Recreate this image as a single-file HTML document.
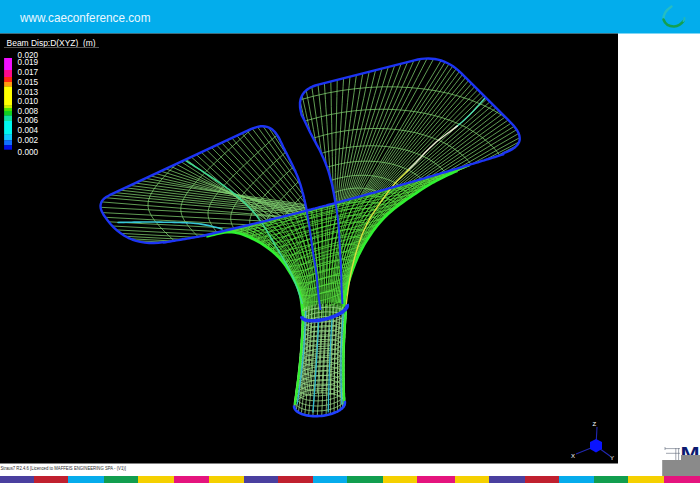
<!DOCTYPE html>
<html><head><meta charset="utf-8"><style>
html,body{margin:0;padding:0;background:#fff;}
body{width:700px;height:485px;overflow:hidden;position:relative;font-family:"Liberation Sans",sans-serif;}
svg{position:absolute;left:0;top:0;}
</style></head><body>
<svg width="700" height="485" viewBox="0 0 700 485">
<defs>
<clipPath id="cL"><path d="M279.9 139.9 L278.6 137.4 L277.2 135.1 L275.8 133.1 L274.2 131.3 L272.6 129.8 L270.8 128.6 L269.0 127.6 L267.0 126.9 L265.0 126.5 L262.9 126.3 L260.6 126.3 L258.3 126.7 L255.9 127.3 L253.4 128.1 L250.8 129.2 L109.5 195.2 L107.7 196.2 L106.0 197.1 L104.6 198.2 L103.4 199.3 L102.4 200.5 L101.6 201.7 L101.1 203.0 L100.7 204.3 L100.5 205.7 L100.6 207.1 L100.8 208.7 L101.3 210.2 L102.0 211.8 L102.9 213.5 L103.9 215.3 L104.8 216.5 L107.7 220.5 L110.7 224.2 L113.9 227.6 L117.2 230.6 L120.7 233.3 L124.4 235.7 L128.1 237.8 L132.1 239.5 L136.1 240.8 L140.3 241.9 L144.7 242.6 L149.2 243.0 L153.8 243.0 L158.6 242.7 L163.5 242.1 L163.5 242.6 L165.7 242.2 L167.8 241.9 L170.0 241.5 L172.1 241.1 L174.2 240.8 L176.4 240.4 L178.5 240.1 L180.6 239.7 L182.8 239.3 L184.9 239.0 L187.1 238.6 L189.2 238.2 L191.3 237.9 L193.5 237.5 L195.6 237.1 L197.7 236.8 L199.9 236.4 L202.0 236.0 L204.2 235.5 L206.3 235.0 L208.4 234.5 L210.6 234.0 L212.7 233.5 L214.8 233.0 L217.0 232.5 L219.1 232.0 L221.3 231.5 L223.4 231.0 L225.5 230.5 L227.7 230.0 L229.8 229.5 L231.9 229.0 L234.1 228.5 L236.2 228.0 L238.4 227.5 L240.5 227.0 L242.6 226.5 L244.8 226.0 L246.9 225.5 L249.0 225.0 L251.2 224.4 L253.3 223.9 L255.5 223.4 L257.6 222.9 L259.7 222.4 L261.9 221.8 L264.0 221.3 L266.1 220.8 L268.3 220.3 L270.4 219.7 L272.6 219.2 L274.7 218.7 L276.8 218.1 L279.0 217.6 L281.1 217.1 L283.2 216.5 L285.4 216.0 L287.5 215.5 L289.7 214.9 L291.8 214.4 L293.9 213.8 L296.1 213.3 L298.2 212.8 L300.3 212.2 L302.5 211.7 L304.6 211.1 L305.5 210.9 L306.3 208.6 L305.8 206.2 L305.3 203.8 L304.8 201.4 L304.2 199.0 L303.7 196.6 L303.1 194.2 L302.4 191.8 L301.8 189.4 L301.1 187.1 L300.4 184.7 L299.6 182.4 L298.8 180.0 L298.0 177.7 L297.1 175.4 L296.1 173.2 L295.2 170.9 L294.1 168.7 L293.1 166.5 L292.0 164.3 L290.9 162.1 L289.8 159.9 L288.7 157.7 L287.6 155.5 L286.5 153.3 L285.3 151.1 L284.2 148.9 L283.1 146.7 L282.1 144.4 L281.0 142.2 L279.9 140.0 Z"/></clipPath>
<clipPath id="cR"><path d="M335.5 203.0 L336.7 202.7 L338.8 202.2 L341.0 201.6 L343.1 201.0 L345.2 200.4 L347.4 199.9 L349.5 199.3 L351.6 198.7 L353.8 198.1 L355.9 197.5 L358.1 197.0 L360.2 196.4 L362.3 195.8 L364.5 195.2 L366.6 194.6 L368.7 194.0 L370.9 193.4 L373.0 192.9 L375.2 192.3 L377.3 191.7 L379.4 191.1 L381.6 190.5 L383.7 189.9 L385.8 189.3 L388.0 188.7 L390.1 188.1 L392.3 187.5 L394.4 186.9 L396.5 186.3 L398.7 185.7 L400.8 185.0 L402.9 184.4 L405.1 183.8 L407.2 183.2 L409.4 182.6 L411.5 182.0 L413.6 181.4 L415.8 180.8 L417.9 180.1 L420.0 179.5 L422.2 178.9 L424.3 178.3 L426.5 177.6 L428.6 177.0 L430.7 176.4 L432.9 175.8 L435.0 175.1 L437.1 174.5 L439.3 173.9 L441.4 173.2 L443.6 172.6 L445.7 172.0 L447.8 171.3 L450.0 170.7 L452.1 170.0 L454.2 169.4 L456.4 168.8 L458.5 168.1 L460.7 167.5 L462.8 166.8 L464.9 166.2 L467.1 165.5 L469.2 164.9 L471.3 164.2 L473.5 163.6 L475.6 162.9 L477.8 162.3 L479.9 161.6 L482.0 160.9 L484.2 160.3 L486.3 159.6 L488.4 159.0 L490.6 158.3 L492.7 157.6 L494.9 157.0 L497.0 156.3 L499.1 155.6 L501.3 154.9 L503.4 154.3 L503.4 153.1 L507.0 151.8 L510.1 150.4 L512.8 148.9 L515.1 147.2 L516.9 145.5 L518.2 143.7 L519.2 141.8 L519.7 139.7 L519.7 137.6 L519.3 135.3 L518.5 133.0 L517.2 130.5 L515.4 128.0 L513.3 125.3 L510.7 122.5 L461.2 73.2 L458.5 70.7 L455.8 68.4 L453.0 66.3 L450.1 64.5 L447.2 63.0 L444.2 61.6 L441.1 60.5 L438.0 59.7 L434.8 59.0 L431.5 58.7 L428.2 58.5 L424.8 58.6 L421.4 58.9 L417.8 59.5 L414.3 60.3 L318.3 84.6 L315.3 85.5 L312.6 86.5 L310.1 87.7 L308.0 89.0 L306.0 90.5 L304.4 92.1 L303.0 93.9 L301.9 95.8 L301.0 97.9 L300.4 100.1 L300.0 102.5 L300.0 105.1 L300.1 107.8 L300.6 110.6 L301.3 113.7 L301.6 114.9 L302.9 117.4 L304.2 119.9 L305.4 122.4 L306.6 124.9 L307.8 127.4 L309.0 130.0 L310.2 132.5 L311.5 135.0 L312.8 137.5 L314.1 140.0 L315.5 142.4 L316.8 144.9 L318.2 147.4 L319.5 149.8 L320.7 152.3 L321.9 154.9 L323.1 157.4 L324.2 160.0 L325.3 162.6 L326.3 165.2 L327.3 167.9 L328.2 170.5 L329.0 173.2 L329.8 175.9 L330.5 178.6 L331.2 181.3 L331.9 184.0 L332.5 186.8 L333.0 189.5 L333.6 192.3 L334.1 195.0 L334.6 197.8 L335.1 200.6 Z"/></clipPath>
<clipPath id="cF"><path d="M217.0 232.5 L219.1 232.0 L221.3 231.5 L223.4 231.0 L225.5 230.5 L227.7 230.0 L229.8 229.5 L231.9 229.0 L234.1 228.5 L236.2 228.0 L238.4 227.5 L240.5 227.0 L242.6 226.5 L244.8 226.0 L246.9 225.5 L249.0 225.0 L251.2 224.4 L253.3 223.9 L255.5 223.4 L257.6 222.9 L259.7 222.4 L261.9 221.8 L264.0 221.3 L266.1 220.8 L268.3 220.3 L270.4 219.7 L272.6 219.2 L274.7 218.7 L276.8 218.1 L279.0 217.6 L281.1 217.1 L283.2 216.5 L285.4 216.0 L287.5 215.5 L289.7 214.9 L291.8 214.4 L293.9 213.8 L296.1 213.3 L298.2 212.8 L300.3 212.2 L302.5 211.7 L304.6 211.1 L306.8 210.6 L308.9 210.0 L311.0 209.5 L313.2 208.9 L315.3 208.4 L317.4 207.8 L319.6 207.2 L321.7 206.7 L323.9 206.1 L326.0 205.6 L328.1 205.0 L330.3 204.4 L332.4 203.9 L334.5 203.3 L336.7 202.7 L338.8 202.2 L341.0 201.6 L343.1 201.0 L345.2 200.4 L347.4 199.9 L349.5 199.3 L351.6 198.7 L353.8 198.1 L355.9 197.5 L358.1 197.0 L360.2 196.4 L362.3 195.8 L364.5 195.2 L366.6 194.6 L368.7 194.0 L370.9 193.4 L373.0 192.9 L375.2 192.3 L377.3 191.7 L379.4 191.1 L381.6 190.5 L383.7 189.9 L385.8 189.3 L388.0 188.7 L390.1 188.1 L392.3 187.5 L394.4 186.9 L396.5 186.3 L398.7 185.7 L400.8 185.0 L402.9 184.4 L405.1 183.8 L407.2 183.2 L409.4 182.6 L411.5 182.0 L413.6 181.4 L415.8 180.8 L417.9 180.1 L420.0 179.5 L422.2 178.9 L424.3 178.3 L426.5 177.6 L428.6 177.0 L430.7 176.4 L432.9 175.8 L435.0 175.1 L437.1 174.5 L439.3 173.9 L441.4 173.2 L443.6 172.6 L445.7 172.0 L447.8 171.3 L450.0 170.7 L452.1 170.0 L454.2 169.4 L456.4 168.8 L458.5 168.1 L460.7 167.5 L462.8 166.8 L464.9 166.2 L467.1 165.5 L469.2 164.9 L471.3 164.2 L473.5 163.6 L475.6 162.9 L477.8 162.3 L479.9 161.6 L473.0 165.6 L469.9 166.9 L466.7 168.2 L463.6 169.5 L460.5 170.8 L457.3 172.1 L454.2 173.5 L451.2 174.9 L448.1 176.3 L445.1 177.8 L442.1 179.3 L439.1 180.9 L436.1 182.5 L433.2 184.2 L430.3 185.9 L427.4 187.7 L424.6 189.5 L421.7 191.4 L418.9 193.3 L416.1 195.2 L413.3 197.1 L410.5 199.0 L407.7 200.9 L405.0 202.9 L402.2 204.9 L399.5 207.0 L396.9 209.1 L394.3 211.2 L391.7 213.4 L389.3 215.7 L386.9 218.1 L384.6 220.6 L382.4 223.1 L380.2 225.7 L378.1 228.4 L376.1 231.1 L374.1 233.9 L372.2 236.7 L370.4 239.5 L368.6 242.4 L366.8 245.3 L365.2 248.3 L363.6 251.3 L362.1 254.3 L360.7 257.3 L359.4 260.5 L358.1 263.6 L356.9 266.8 L355.7 269.9 L354.6 273.1 L353.5 276.3 L352.5 279.6 L351.5 282.8 L350.6 286.1 L349.7 289.3 L349.0 292.6 L348.3 295.9 L347.8 299.3 L347.4 302.6 L347.0 306.0 L349.6 303.8 L349.7 304.9 L349.6 306.0 L349.1 307.2 L348.4 308.4 L347.4 309.7 L346.1 311.0 L344.5 312.3 L342.7 313.5 L340.7 314.7 L338.6 315.9 L336.2 317.0 L333.7 318.0 L331.1 318.9 L328.4 319.8 L325.7 320.5 L323.0 321.1 L320.3 321.6 L317.6 322.0 L315.0 322.2 L312.5 322.3 L310.2 322.2 L308.0 322.0 L306.1 321.7 L304.3 321.2 L302.8 320.7 L301.5 320.0 L300.5 319.1 L299.8 318.2 L299.4 317.2 L299.8 315.0 L299.5 312.4 L299.2 309.8 L298.9 307.2 L298.6 304.6 L298.3 302.0 L297.9 299.4 L297.5 296.8 L297.0 294.3 L296.3 291.8 L295.5 289.3 L294.5 286.9 L293.4 284.5 L292.2 282.2 L291.0 279.8 L289.7 277.5 L288.5 275.2 L287.2 273.0 L285.8 270.7 L284.4 268.5 L283.0 266.3 L281.5 264.2 L279.9 262.2 L278.2 260.2 L276.5 258.2 L274.6 256.3 L272.8 254.5 L270.8 252.7 L268.8 251.1 L266.8 249.4 L264.7 247.9 L262.6 246.4 L260.4 244.9 L258.2 243.5 L256.0 242.2 L253.7 240.9 L251.3 239.7 L249.0 238.5 L246.6 237.3 L244.1 236.2 L241.6 235.2 L239.1 234.3 L236.6 233.5 L234.1 232.9 L231.5 232.4 L228.9 232.1 L226.4 232.0 L223.8 232.1 L221.2 232.4 L218.7 232.9 L216.1 233.4 L213.5 234.1 L211.0 234.7 L208.4 235.3 L205.8 235.9 L203.3 236.4 L200.7 236.8 L198.1 237.3 L195.6 237.7 L193.0 238.1 Z"/></clipPath>
</defs>
<rect x="0" y="0" width="700" height="485" fill="#ffffff"/>
<rect x="0" y="0" width="700" height="33.5" fill="#03adec"/>
<text x="20" y="22" font-family="Liberation Sans" font-size="13.5" fill="#eaf8ff" transform="translate(20,0) scale(0.87,1) translate(-20,0)">www.caeconference.com</text>
<g fill="none" stroke-linecap="round">
<path d="M671.5 6.5 Q663 12 663.5 19.5" stroke="#30c0b8" stroke-width="2.4" stroke-opacity="0.8"/>
<path d="M663.5 19.5 Q666 26.5 674 26.5 Q680 26 683.5 21" stroke="#14a050" stroke-width="2.5"/>
<path d="M683.5 21 Q685 19 684.5 18" stroke="#20b8b8" stroke-width="2"/>
</g>
<rect x="0" y="33.5" width="618" height="430" fill="#000"/>
<text x="6.6" y="45.6" font-size="8.45" fill="#fff" font-family="Liberation Sans">Beam Disp:D(XYZ)&#160; (m)</text>
<rect x="4" y="47" width="95" height="1" fill="#555"/>
<rect x="4.1" y="58" width="7.9" height="12.2" fill="#f010ff"/><rect x="4.1" y="70" width="7.9" height="7.2" fill="#ff0a8c"/><rect x="4.1" y="77" width="7.9" height="5.2" fill="#ff2a10"/><rect x="4.1" y="82" width="7.9" height="4.7" fill="#ff9a10"/><rect x="4.1" y="86.5" width="7.9" height="19.3" fill="#ffff00"/><rect x="4.1" y="105.6" width="7.9" height="2.6" fill="#c8f000"/><rect x="4.1" y="108" width="7.9" height="3.2" fill="#50e000"/><rect x="4.1" y="111" width="7.9" height="4.7" fill="#10d020"/><rect x="4.1" y="115.5" width="7.9" height="5.7" fill="#10e0a0"/><rect x="4.1" y="121" width="7.9" height="13.8" fill="#00f8f0"/><rect x="4.1" y="134.6" width="7.9" height="5.8" fill="#10c8ff"/><rect x="4.1" y="140.2" width="7.9" height="5.2" fill="#1070ff"/><rect x="4.1" y="145.2" width="7.9" height="4.5" fill="#0010e8"/>
<g font-size="8.2" fill="#fff" font-family="Liberation Sans"><text x="17.6" y="58.0">0.020</text><text x="17.6" y="65.4">0.019</text><text x="17.6" y="75.3">0.017</text><text x="17.6" y="85.0">0.015</text><text x="17.6" y="94.5">0.013</text><text x="17.6" y="103.8">0.010</text><text x="17.6" y="113.6">0.008</text><text x="17.6" y="123.3">0.006</text><text x="17.6" y="132.8">0.004</text><text x="17.6" y="142.5">0.002</text><text x="17.6" y="154.9">0.000</text></g>
<g fill="none" stroke="#80d070" stroke-width="0.75">
<path clip-path="url(#cL)" d="M163.5 242.1 L543.2 368.1 M158.0 242.8 L542.7 352.4 M152.4 243.0 L541.4 336.1 M146.8 242.8 L546.3 263.7 M141.3 242.0 L540.7 263.0 M135.8 240.7 L535.3 261.7 M130.6 238.8 L530.0 259.7 M125.5 236.3 L525.0 257.3 M120.8 233.4 L520.2 254.3 M116.4 229.9 L515.9 250.8 M112.4 226.0 L511.8 246.9 M108.7 221.8 L508.2 242.7 M105.3 217.3 L504.8 238.2 M102.4 212.6 L501.8 233.5 M100.6 207.3 L500.1 228.2 M101.6 201.9 L500.3 233.8 M105.3 197.7 L503.8 232.0 M110.1 194.9 L508.4 232.2 M115.2 192.6 L513.1 233.0 M120.3 190.2 L517.9 233.7 M125.3 187.8 L522.6 234.5 M130.4 185.5 L527.3 235.2 M135.5 183.1 L532.0 236.0 M140.6 180.7 L536.4 238.1 M145.6 178.3 L539.0 251.1 M150.7 176.0 L540.9 264.0 M155.8 173.6 L542.3 276.7 M160.8 171.2 L543.0 289.3 M165.9 168.9 L542.3 304.3 M171.0 166.5 L536.1 329.9 M176.1 164.1 L527.8 354.5 M181.1 161.7 L517.6 378.1 M186.2 159.4 L505.4 400.5 M191.3 157.0 L491.4 421.5 M196.4 154.6 L490.3 425.9 M201.4 152.3 L491.5 427.7 M206.5 149.9 L492.7 429.4 M211.6 147.5 L493.8 431.0 M216.7 145.2 L494.8 432.6 M221.7 142.8 L495.8 434.2 M226.8 140.4 L496.7 435.6 M231.9 138.0 L497.5 437.1 M236.9 135.7 L498.4 438.4 M242.0 133.3 L499.1 439.7 M247.1 130.9 L497.5 442.8 M252.2 128.6 L495.9 445.8 M257.5 126.9 L494.0 449.5 M263.1 126.3 L491.9 454.4 M268.5 127.4 L489.7 460.7 M273.2 130.4 L487.7 468.0 M276.9 134.6 L488.9 473.8 M279.7 139.5 L491.6 478.7 M282.1 144.5 L478.5 493.0 M284.6 149.5 L476.8 500.3 M287.1 154.5 L475.3 507.5 M289.6 159.5 L473.7 514.6 M292.1 164.5 L472.1 521.8 M294.5 169.6 L470.2 528.9 M296.8 174.7 L468.2 536.1 M298.8 179.9 L465.8 543.4 M300.6 185.3 L463.0 550.8 M302.1 190.6 L460.0 558.1 M303.5 196.1 L456.8 565.5 M304.8 201.5 L453.3 572.9 M305.9 207.0 L449.7 580.2 M297.3 55.0 L293.8 58.1 L290.3 61.1 L286.9 64.2 L283.4 67.2 L279.9 70.3 L276.4 73.4 L273.0 76.4 L269.5 79.5 L266.0 82.6 L262.6 85.6 L259.1 88.7 L255.6 91.7 L252.2 94.8 L248.7 97.9 L245.3 100.9 L241.8 104.0 L238.4 107.0 L235.0 110.1 L231.5 113.2 L228.1 116.2 L224.7 119.3 L221.3 122.3 L217.9 125.4 L214.5 128.5 L211.1 131.5 L207.7 134.6 L204.4 137.7 L201.0 140.7 L197.7 143.8 L194.4 146.8 L191.1 149.9 L187.9 153.0 L184.6 156.0 L181.4 159.1 L178.3 162.1 L175.1 165.2 L172.1 168.3 L169.1 171.3 L166.2 174.4 L163.4 177.4 L160.7 180.5 L158.1 183.6 L155.7 186.6 L153.6 189.7 L151.7 192.8 L150.1 195.8 L149.0 198.9 L148.2 201.9 L148.0 205.0 L148.2 207.4 L148.7 209.8 L149.6 212.2 L150.8 214.7 L152.2 217.1 L153.9 219.5 L155.7 221.9 L157.8 224.3 L159.9 226.7 L162.2 229.1 L164.6 231.6 L167.0 234.0 L169.5 236.4 L172.1 238.8 L174.7 241.2 L177.4 243.6 L180.1 246.0 L182.8 248.4 L185.5 250.9 L188.3 253.3 L191.1 255.7 L193.9 258.1 L196.8 260.5 L199.6 262.9 L202.5 265.3 L205.3 267.8 L208.2 270.2 L211.1 272.6 L214.0 275.0 M330.1 59.4 L326.6 62.5 L323.1 65.5 L319.7 68.6 L316.2 71.6 L312.7 74.7 L309.2 77.8 L305.8 80.8 L302.3 83.9 L298.8 87.0 L295.4 90.0 L291.9 93.1 L288.4 96.1 L285.0 99.2 L281.5 102.3 L278.1 105.3 L274.6 108.4 L271.2 111.4 L267.8 114.5 L264.3 117.6 L260.9 120.6 L257.5 123.7 L254.1 126.7 L250.7 129.8 L247.3 132.9 L243.9 135.9 L240.5 139.0 L237.2 142.1 L233.8 145.1 L230.5 148.2 L227.2 151.2 L223.9 154.3 L220.7 157.4 L217.4 160.4 L214.2 163.5 L211.1 166.5 L207.9 169.6 L204.9 172.7 L201.9 175.7 L199.0 178.8 L196.2 181.8 L193.5 184.9 L190.9 188.0 L188.5 191.0 L186.4 194.1 L184.5 197.2 L182.9 200.2 L181.8 203.3 L181.0 206.3 L180.8 209.4 L181.0 211.8 L181.5 214.2 L182.4 216.6 L183.6 219.1 L185.0 221.5 L186.7 223.9 L188.5 226.3 L190.6 228.7 L192.7 231.1 L195.0 233.5 L197.4 236.0 L199.8 238.4 L202.3 240.8 L204.9 243.2 L207.5 245.6 L210.2 248.0 L212.9 250.4 L215.6 252.8 L218.3 255.3 L221.1 257.7 L223.9 260.1 L226.7 262.5 L229.6 264.9 L232.4 267.3 L235.3 269.7 L238.1 272.2 L241.0 274.6 L243.9 277.0 L246.8 279.4 M357.3 63.8 L353.8 66.9 L350.3 69.9 L346.9 73.0 L343.4 76.0 L339.9 79.1 L336.4 82.2 L333.0 85.2 L329.5 88.3 L326.0 91.4 L322.6 94.4 L319.1 97.5 L315.6 100.5 L312.2 103.6 L308.7 106.7 L305.3 109.7 L301.8 112.8 L298.4 115.8 L295.0 118.9 L291.5 122.0 L288.1 125.0 L284.7 128.1 L281.3 131.1 L277.9 134.2 L274.5 137.3 L271.1 140.3 L267.7 143.4 L264.4 146.5 L261.0 149.5 L257.7 152.6 L254.4 155.6 L251.1 158.7 L247.9 161.8 L244.6 164.8 L241.4 167.9 L238.3 170.9 L235.1 174.0 L232.1 177.1 L229.1 180.1 L226.2 183.2 L223.4 186.2 L220.7 189.3 L218.1 192.4 L215.7 195.4 L213.6 198.5 L211.7 201.6 L210.1 204.6 L209.0 207.7 L208.2 210.7 L208.0 213.8 L208.2 216.2 L208.7 218.6 L209.6 221.0 L210.8 223.5 L212.2 225.9 L213.9 228.3 L215.7 230.7 L217.8 233.1 L219.9 235.5 L222.2 237.9 L224.6 240.4 L227.0 242.8 L229.5 245.2 L232.1 247.6 L234.7 250.0 L237.4 252.4 L240.1 254.8 L242.8 257.2 L245.5 259.7 L248.3 262.1 L251.1 264.5 L253.9 266.9 L256.8 269.3 L259.6 271.7 L262.5 274.1 L265.3 276.6 L268.2 279.0 L271.1 281.4 L274.0 283.8 M380.0 68.2 L376.5 71.3 L373.0 74.3 L369.6 77.4 L366.1 80.4 L362.6 83.5 L359.1 86.6 L355.7 89.6 L352.2 92.7 L348.7 95.8 L345.3 98.8 L341.8 101.9 L338.3 104.9 L334.9 108.0 L331.4 111.1 L328.0 114.1 L324.5 117.2 L321.1 120.2 L317.7 123.3 L314.2 126.4 L310.8 129.4 L307.4 132.5 L304.0 135.5 L300.6 138.6 L297.2 141.7 L293.8 144.7 L290.4 147.8 L287.1 150.9 L283.7 153.9 L280.4 157.0 L277.1 160.0 L273.8 163.1 L270.6 166.2 L267.3 169.2 L264.1 172.3 L261.0 175.3 L257.8 178.4 L254.8 181.5 L251.8 184.5 L248.9 187.6 L246.1 190.6 L243.4 193.7 L240.8 196.8 L238.4 199.8 L236.3 202.9 L234.4 206.0 L232.8 209.0 L231.7 212.1 L230.9 215.1 L230.7 218.2 L230.9 220.6 L231.4 223.0 L232.3 225.4 L233.5 227.9 L234.9 230.3 L236.6 232.7 L238.4 235.1 L240.5 237.5 L242.6 239.9 L244.9 242.3 L247.3 244.8 L249.7 247.2 L252.2 249.6 L254.8 252.0 L257.4 254.4 L260.1 256.8 L262.8 259.2 L265.5 261.6 L268.2 264.1 L271.0 266.5 L273.8 268.9 L276.6 271.3 L279.5 273.7 L282.3 276.1 L285.2 278.5 L288.0 281.0 L290.9 283.4 L293.8 285.8 L296.7 288.2 M399.0 72.6 L395.5 75.7 L392.0 78.7 L388.6 81.8 L385.1 84.8 L381.6 87.9 L378.1 91.0 L374.7 94.0 L371.2 97.1 L367.7 100.2 L364.3 103.2 L360.8 106.3 L357.3 109.3 L353.9 112.4 L350.4 115.5 L347.0 118.5 L343.5 121.6 L340.1 124.6 L336.7 127.7 L333.2 130.8 L329.8 133.8 L326.4 136.9 L323.0 139.9 L319.6 143.0 L316.2 146.1 L312.8 149.1 L309.4 152.2 L306.1 155.3 L302.7 158.3 L299.4 161.4 L296.1 164.4 L292.8 167.5 L289.6 170.6 L286.3 173.6 L283.1 176.7 L280.0 179.7 L276.8 182.8 L273.8 185.9 L270.8 188.9 L267.9 192.0 L265.1 195.0 L262.4 198.1 L259.8 201.2 L257.4 204.2 L255.3 207.3 L253.4 210.4 L251.8 213.4 L250.7 216.5 L249.9 219.5 L249.7 222.6 L249.9 225.0 L250.4 227.4 L251.3 229.8 L252.5 232.3 L253.9 234.7 L255.6 237.1 L257.4 239.5 L259.5 241.9 L261.6 244.3 L263.9 246.7 L266.3 249.2 L268.7 251.6 L271.2 254.0 L273.8 256.4 L276.4 258.8 L279.1 261.2 L281.8 263.6 L284.5 266.0 L287.2 268.5 L290.0 270.9 L292.8 273.3 L295.6 275.7 L298.5 278.1 L301.3 280.5 L304.2 282.9 L307.0 285.4 L309.9 287.8 L312.8 290.2 L315.7 292.6 M415.0 77.0 L411.5 80.1 L408.0 83.1 L404.6 86.2 L401.1 89.2 L397.6 92.3 L394.1 95.4 L390.7 98.4 L387.2 101.5 L383.7 104.6 L380.3 107.6 L376.8 110.7 L373.3 113.7 L369.9 116.8 L366.4 119.9 L363.0 122.9 L359.5 126.0 L356.1 129.0 L352.7 132.1 L349.2 135.2 L345.8 138.2 L342.4 141.3 L339.0 144.3 L335.6 147.4 L332.2 150.5 L328.8 153.5 L325.4 156.6 L322.1 159.7 L318.7 162.7 L315.4 165.8 L312.1 168.8 L308.8 171.9 L305.6 175.0 L302.3 178.0 L299.1 181.1 L296.0 184.1 L292.8 187.2 L289.8 190.3 L286.8 193.3 L283.9 196.4 L281.1 199.4 L278.4 202.5 L275.8 205.6 L273.4 208.6 L271.3 211.7 L269.4 214.8 L267.8 217.8 L266.7 220.9 L265.9 223.9 L265.7 227.0 L265.9 229.4 L266.4 231.8 L267.3 234.2 L268.5 236.7 L269.9 239.1 L271.6 241.5 L273.4 243.9 L275.5 246.3 L277.6 248.7 L279.9 251.1 L282.3 253.6 L284.7 256.0 L287.2 258.4 L289.8 260.8 L292.4 263.2 L295.1 265.6 L297.8 268.0 L300.5 270.4 L303.2 272.9 L306.0 275.3 L308.8 277.7 L311.6 280.1 L314.5 282.5 L317.3 284.9 L320.2 287.3 L323.0 289.8 L325.9 292.2 L328.8 294.6 L331.7 297.0 M428.3 81.4 L424.8 84.5 L421.3 87.5 L417.9 90.6 L414.4 93.6 L410.9 96.7 L407.4 99.8 L404.0 102.8 L400.5 105.9 L397.0 109.0 L393.6 112.0 L390.1 115.1 L386.6 118.1 L383.2 121.2 L379.7 124.3 L376.3 127.3 L372.8 130.4 L369.4 133.4 L366.0 136.5 L362.5 139.6 L359.1 142.6 L355.7 145.7 L352.3 148.7 L348.9 151.8 L345.5 154.9 L342.1 157.9 L338.7 161.0 L335.4 164.1 L332.0 167.1 L328.7 170.2 L325.4 173.2 L322.1 176.3 L318.9 179.4 L315.6 182.4 L312.4 185.5 L309.3 188.5 L306.1 191.6 L303.1 194.7 L300.1 197.7 L297.2 200.8 L294.4 203.8 L291.7 206.9 L289.1 210.0 L286.7 213.0 L284.6 216.1 L282.7 219.2 L281.1 222.2 L280.0 225.3 L279.2 228.3 L279.0 231.4 L279.2 233.8 L279.7 236.2 L280.6 238.6 L281.8 241.1 L283.2 243.5 L284.9 245.9 L286.7 248.3 L288.8 250.7 L290.9 253.1 L293.2 255.5 L295.6 258.0 L298.0 260.4 L300.5 262.8 L303.1 265.2 L305.7 267.6 L308.4 270.0 L311.1 272.4 L313.8 274.8 L316.5 277.3 L319.3 279.7 L322.1 282.1 L324.9 284.5 L327.8 286.9 L330.6 289.3 L333.5 291.7 L336.3 294.2 L339.2 296.6 L342.1 299.0 L345.0 301.4 M439.3 85.8 L435.8 88.9 L432.3 91.9 L428.9 95.0 L425.4 98.0 L421.9 101.1 L418.4 104.2 L415.0 107.2 L411.5 110.3 L408.0 113.4 L404.6 116.4 L401.1 119.5 L397.6 122.5 L394.2 125.6 L390.7 128.7 L387.3 131.7 L383.8 134.8 L380.4 137.8 L377.0 140.9 L373.5 144.0 L370.1 147.0 L366.7 150.1 L363.3 153.1 L359.9 156.2 L356.5 159.3 L353.1 162.3 L349.7 165.4 L346.4 168.5 L343.0 171.5 L339.7 174.6 L336.4 177.6 L333.1 180.7 L329.9 183.8 L326.6 186.8 L323.4 189.9 L320.3 192.9 L317.1 196.0 L314.1 199.1 L311.1 202.1 L308.2 205.2 L305.4 208.2 L302.7 211.3 L300.1 214.4 L297.7 217.4 L295.6 220.5 L293.7 223.6 L292.1 226.6 L291.0 229.7 L290.2 232.7 L290.0 235.8 L290.2 238.2 L290.7 240.6 L291.6 243.0 L292.8 245.5 L294.2 247.9 L295.9 250.3 L297.7 252.7 L299.8 255.1 L301.9 257.5 L304.2 259.9 L306.6 262.4 L309.0 264.8 L311.5 267.2 L314.1 269.6 L316.7 272.0 L319.4 274.4 L322.1 276.8 L324.8 279.2 L327.5 281.7 L330.3 284.1 L333.1 286.5 L335.9 288.9 L338.8 291.3 L341.6 293.7 L344.5 296.1 L347.3 298.6 L350.2 301.0 L353.1 303.4 L356.0 305.8 M448.3 90.2 L444.8 93.3 L441.3 96.3 L437.9 99.4 L434.4 102.4 L430.9 105.5 L427.4 108.6 L424.0 111.6 L420.5 114.7 L417.0 117.8 L413.6 120.8 L410.1 123.9 L406.6 126.9 L403.2 130.0 L399.7 133.1 L396.3 136.1 L392.8 139.2 L389.4 142.2 L386.0 145.3 L382.5 148.4 L379.1 151.4 L375.7 154.5 L372.3 157.5 L368.9 160.6 L365.5 163.7 L362.1 166.7 L358.7 169.8 L355.4 172.9 L352.0 175.9 L348.7 179.0 L345.4 182.0 L342.1 185.1 L338.9 188.2 L335.6 191.2 L332.4 194.3 L329.3 197.3 L326.1 200.4 L323.1 203.5 L320.1 206.5 L317.2 209.6 L314.4 212.6 L311.7 215.7 L309.1 218.8 L306.7 221.8 L304.6 224.9 L302.7 228.0 L301.1 231.0 L300.0 234.1 L299.2 237.1 L299.0 240.2 L299.2 242.6 L299.7 245.0 L300.6 247.4 L301.8 249.9 L303.2 252.3 L304.9 254.7 L306.7 257.1 L308.8 259.5 L310.9 261.9 L313.2 264.3 L315.6 266.8 L318.0 269.2 L320.5 271.6 L323.1 274.0 L325.7 276.4 L328.4 278.8 L331.1 281.2 L333.8 283.6 L336.5 286.1 L339.3 288.5 L342.1 290.9 L344.9 293.3 L347.8 295.7 L350.6 298.1 L353.5 300.5 L356.3 303.0 L359.2 305.4 L362.1 307.8 L365.0 310.2 M456.3 94.6 L452.8 97.7 L449.3 100.7 L445.9 103.8 L442.4 106.8 L438.9 109.9 L435.4 113.0 L432.0 116.0 L428.5 119.1 L425.0 122.2 L421.6 125.2 L418.1 128.3 L414.6 131.3 L411.2 134.4 L407.7 137.5 L404.3 140.5 L400.8 143.6 L397.4 146.6 L394.0 149.7 L390.5 152.8 L387.1 155.8 L383.7 158.9 L380.3 161.9 L376.9 165.0 L373.5 168.1 L370.1 171.1 L366.7 174.2 L363.4 177.3 L360.0 180.3 L356.7 183.4 L353.4 186.4 L350.1 189.5 L346.9 192.6 L343.6 195.6 L340.4 198.7 L337.3 201.7 L334.1 204.8 L331.1 207.9 L328.1 210.9 L325.2 214.0 L322.4 217.0 L319.7 220.1 L317.1 223.2 L314.7 226.2 L312.6 229.3 L310.7 232.4 L309.1 235.4 L308.0 238.5 L307.2 241.5 L307.0 244.6 L307.2 247.0 L307.7 249.4 L308.6 251.8 L309.8 254.3 L311.2 256.7 L312.9 259.1 L314.7 261.5 L316.8 263.9 L318.9 266.3 L321.2 268.7 L323.6 271.2 L326.0 273.6 L328.5 276.0 L331.1 278.4 L333.7 280.8 L336.4 283.2 L339.1 285.6 L341.8 288.0 L344.5 290.5 L347.3 292.9 L350.1 295.3 L352.9 297.7 L355.8 300.1 L358.6 302.5 L361.5 304.9 L364.3 307.4 L367.2 309.8 L370.1 312.2 L373.0 314.6 M463.3 99.0 L459.8 102.1 L456.3 105.1 L452.9 108.2 L449.4 111.2 L445.9 114.3 L442.4 117.4 L439.0 120.4 L435.5 123.5 L432.0 126.6 L428.6 129.6 L425.1 132.7 L421.6 135.7 L418.2 138.8 L414.7 141.9 L411.3 144.9 L407.8 148.0 L404.4 151.0 L401.0 154.1 L397.5 157.2 L394.1 160.2 L390.7 163.3 L387.3 166.3 L383.9 169.4 L380.5 172.5 L377.1 175.5 L373.7 178.6 L370.4 181.7 L367.0 184.7 L363.7 187.8 L360.4 190.8 L357.1 193.9 L353.9 197.0 L350.6 200.0 L347.4 203.1 L344.3 206.1 L341.1 209.2 L338.1 212.3 L335.1 215.3 L332.2 218.4 L329.4 221.4 L326.7 224.5 L324.1 227.6 L321.7 230.6 L319.6 233.7 L317.7 236.8 L316.1 239.8 L315.0 242.9 L314.2 245.9 L314.0 249.0 L314.2 251.4 L314.7 253.8 L315.6 256.2 L316.8 258.7 L318.2 261.1 L319.9 263.5 L321.7 265.9 L323.8 268.3 L325.9 270.7 L328.2 273.1 L330.6 275.6 L333.0 278.0 L335.5 280.4 L338.1 282.8 L340.7 285.2 L343.4 287.6 L346.1 290.0 L348.8 292.4 L351.5 294.9 L354.3 297.3 L357.1 299.7 L359.9 302.1 L362.8 304.5 L365.6 306.9 L368.5 309.3 L371.3 311.8 L374.2 314.2 L377.1 316.6 L380.0 319.0 M469.3 103.4 L465.8 106.5 L462.3 109.5 L458.9 112.6 L455.4 115.6 L451.9 118.7 L448.4 121.8 L445.0 124.8 L441.5 127.9 L438.0 131.0 L434.6 134.0 L431.1 137.1 L427.6 140.1 L424.2 143.2 L420.7 146.3 L417.3 149.3 L413.8 152.4 L410.4 155.4 L407.0 158.5 L403.5 161.6 L400.1 164.6 L396.7 167.7 L393.3 170.7 L389.9 173.8 L386.5 176.9 L383.1 179.9 L379.7 183.0 L376.4 186.1 L373.0 189.1 L369.7 192.2 L366.4 195.2 L363.1 198.3 L359.9 201.4 L356.6 204.4 L353.4 207.5 L350.3 210.5 L347.1 213.6 L344.1 216.7 L341.1 219.7 L338.2 222.8 L335.4 225.8 L332.7 228.9 L330.1 232.0 L327.7 235.0 L325.6 238.1 L323.7 241.2 L322.1 244.2 L321.0 247.3 L320.2 250.3 L320.0 253.4 L320.2 255.8 L320.7 258.2 L321.6 260.6 L322.8 263.1 L324.2 265.5 L325.9 267.9 L327.7 270.3 L329.8 272.7 L331.9 275.1 L334.2 277.5 L336.6 280.0 L339.0 282.4 L341.5 284.8 L344.1 287.2 L346.7 289.6 L349.4 292.0 L352.1 294.4 L354.8 296.8 L357.5 299.3 L360.3 301.7 L363.1 304.1 L365.9 306.5 L368.8 308.9 L371.6 311.3 L374.5 313.7 L377.3 316.2 L380.2 318.6 L383.1 321.0 L386.0 323.4"/>
<path clip-path="url(#cR)" d="M301.6 114.9 L303.3 121.5 L305.0 128.0 L306.7 134.6 L308.4 141.2 L310.1 147.8 L311.8 154.4 L313.5 161.0 L315.3 167.6 L317.0 174.1 L318.7 180.7 L320.4 187.3 L322.1 193.9 L323.8 200.5 L325.5 207.1 L327.2 213.7 L328.9 220.2 L330.6 226.8 L332.3 233.4 L334.0 240.0 M304.6 120.7 L306.2 127.0 L307.7 133.3 L309.3 139.6 L310.8 145.9 L312.3 152.1 L313.9 158.4 L315.4 164.7 L317.0 171.0 L318.5 177.2 L320.1 183.5 L321.6 189.8 L323.2 196.1 L324.7 202.3 L326.3 208.6 L327.8 214.9 L329.4 221.2 L330.9 227.4 L332.5 233.7 L334.0 240.0 M307.5 126.7 L308.9 132.7 L310.3 138.6 L311.7 144.6 L313.1 150.6 L314.4 156.5 L315.8 162.5 L317.2 168.4 L318.6 174.4 L320.0 180.4 L321.4 186.3 L322.8 192.3 L324.2 198.3 L325.6 204.2 L327.0 210.2 L328.4 216.1 L329.8 222.1 L331.2 228.1 L332.6 234.0 L334.0 240.0 M310.3 132.7 L311.6 138.3 L312.8 144.0 L314.1 149.6 L315.3 155.3 L316.5 160.9 L317.8 166.6 L319.0 172.2 L320.3 177.9 L321.5 183.5 L322.8 189.2 L324.0 194.8 L325.3 200.5 L326.5 206.1 L327.8 211.8 L329.0 217.4 L330.3 223.1 L331.5 228.7 L332.8 234.4 L334.0 240.0 M313.3 138.5 L314.4 143.9 L315.5 149.2 L316.6 154.6 L317.7 159.9 L318.8 165.2 L319.8 170.6 L320.9 175.9 L322.0 181.3 L323.1 186.6 L324.2 191.9 L325.3 197.3 L326.4 202.6 L327.5 208.0 L328.6 213.3 L329.6 218.6 L330.7 224.0 L331.8 229.3 L332.9 234.7 L334.0 240.0 M316.5 144.3 L317.4 149.4 L318.3 154.4 L319.3 159.4 L320.2 164.5 L321.1 169.5 L322.0 174.5 L322.9 179.6 L323.9 184.6 L324.8 189.6 L325.7 194.7 L326.6 199.7 L327.6 204.7 L328.5 209.8 L329.4 214.8 L330.3 219.9 L331.2 224.9 L332.2 229.9 L333.1 235.0 L334.0 240.0 M319.6 150.1 L320.4 154.9 L321.1 159.6 L321.9 164.3 L322.6 169.1 L323.4 173.8 L324.2 178.5 L324.9 183.2 L325.7 188.0 L326.4 192.7 L327.2 197.4 L327.9 202.2 L328.7 206.9 L329.5 211.6 L330.2 216.4 L331.0 221.1 L331.7 225.8 L332.5 230.5 L333.2 235.3 L334.0 240.0 M322.5 156.1 L323.1 160.5 L323.7 164.9 L324.3 169.3 L324.9 173.7 L325.5 178.2 L326.1 182.6 L326.7 187.0 L327.3 191.4 L327.9 195.8 L328.5 200.2 L329.2 204.7 L329.8 209.1 L330.4 213.5 L331.0 217.9 L331.6 222.3 L332.2 226.7 L332.8 231.2 L333.4 235.6 L334.0 240.0 M325.1 162.1 L325.6 166.2 L326.0 170.3 L326.5 174.4 L327.0 178.5 L327.4 182.6 L327.9 186.7 L328.4 190.8 L328.9 194.9 L329.3 199.0 L329.8 203.1 L330.3 207.2 L330.7 211.3 L331.2 215.4 L331.7 219.5 L332.1 223.6 L332.6 227.7 L333.1 231.8 L333.5 235.9 L334.0 240.0 M327.4 168.3 L327.8 172.1 L328.1 175.9 L328.5 179.6 L328.8 183.4 L329.2 187.2 L329.5 190.9 L329.8 194.7 L330.2 198.5 L330.5 202.3 L330.9 206.0 L331.2 209.8 L331.6 213.6 L331.9 217.4 L332.3 221.1 L332.6 224.9 L333.0 228.7 L333.3 232.5 L333.7 236.2 L334.0 240.0 M329.4 174.6 L329.7 178.0 L329.9 181.5 L330.1 184.9 L330.4 188.4 L330.6 191.8 L330.9 195.3 L331.1 198.7 L331.3 202.1 L331.6 205.6 L331.8 209.0 L332.1 212.5 L332.3 215.9 L332.6 219.3 L332.8 222.8 L333.0 226.2 L333.3 229.7 L333.5 233.1 L333.8 236.6 L334.0 240.0 M331.1 181.0 L331.3 184.1 L331.4 187.2 L331.6 190.3 L331.7 193.4 L331.9 196.5 L332.0 199.6 L332.2 202.7 L332.3 205.8 L332.5 208.9 L332.6 212.0 L332.8 215.1 L332.9 218.3 L333.1 221.4 L333.2 224.5 L333.4 227.6 L333.5 230.7 L333.7 233.8 L333.8 236.9 L334.0 240.0 M332.6 187.4 L332.7 190.2 L332.7 192.9 L332.8 195.7 L332.9 198.5 L333.0 201.2 L333.0 204.0 L333.1 206.8 L333.2 209.6 L333.3 212.3 L333.3 215.1 L333.4 217.9 L333.5 220.6 L333.6 223.4 L333.6 226.2 L333.7 228.9 L333.8 231.7 L333.9 234.5 L333.9 237.2 L334.0 240.0 M333.9 193.9 L333.9 196.3 L333.9 198.7 L333.9 201.2 L333.9 203.6 L333.9 206.0 L333.9 208.4 L333.9 210.9 L333.9 213.3 L333.9 215.7 L333.9 218.2 L334.0 220.6 L334.0 223.0 L334.0 225.4 L334.0 227.9 L334.0 230.3 L334.0 232.7 L334.0 235.1 L334.0 237.6 L334.0 240.0 M335.1 200.4 L335.0 202.5 L335.0 204.5 L334.9 206.6 L334.8 208.7 L334.8 210.8 L334.7 212.9 L334.7 215.0 L334.6 217.1 L334.6 219.1 L334.5 221.2 L334.4 223.3 L334.4 225.4 L334.3 227.5 L334.3 229.6 L334.2 231.7 L334.2 233.7 L334.1 235.8 L334.1 237.9 L334.0 240.0 M332.8 194.6 L332.8 197.0 L332.9 199.4 L333.0 201.8 L333.0 204.2 L333.1 206.6 L333.2 209.0 L333.2 211.3 L333.3 213.7 L333.4 216.1 L333.4 218.5 L333.5 220.9 L333.6 223.3 L333.6 225.7 L333.7 228.1 L333.7 230.4 L333.8 232.8 L333.9 235.2 L333.9 237.6 L334.0 240.0 M330.4 188.5 L330.6 191.2 L330.8 193.9 L331.0 196.6 L331.2 199.3 L331.3 202.0 L331.5 204.7 L331.7 207.5 L331.9 210.2 L332.1 212.9 L332.3 215.6 L332.5 218.3 L332.7 221.0 L332.9 223.7 L333.1 226.4 L333.2 229.2 L333.4 231.9 L333.6 234.6 L333.8 237.3 L334.0 240.0 M328.0 182.3 L328.3 185.4 L328.6 188.4 L328.9 191.4 L329.3 194.5 L329.6 197.5 L329.9 200.5 L330.2 203.6 L330.5 206.6 L330.8 209.6 L331.2 212.7 L331.5 215.7 L331.8 218.7 L332.1 221.8 L332.4 224.8 L332.7 227.9 L333.1 230.9 L333.4 233.9 L333.7 237.0 L334.0 240.0 M325.6 176.2 L326.0 179.5 L326.5 182.9 L326.9 186.2 L327.4 189.6 L327.8 193.0 L328.3 196.3 L328.7 199.7 L329.1 203.0 L329.6 206.4 L330.0 209.8 L330.5 213.1 L330.9 216.5 L331.3 219.8 L331.8 223.2 L332.2 226.6 L332.7 229.9 L333.1 233.3 L333.6 236.6 L334.0 240.0 M323.2 170.0 L323.8 173.7 L324.3 177.4 L324.9 181.1 L325.5 184.7 L326.1 188.4 L326.6 192.1 L327.2 195.8 L327.8 199.5 L328.3 203.2 L328.9 206.8 L329.5 210.5 L330.0 214.2 L330.6 217.9 L331.2 221.6 L331.7 225.3 L332.3 228.9 L332.9 232.6 L333.4 236.3 L334.0 240.0 M320.8 163.9 L321.5 167.9 L322.2 171.9 L322.9 175.9 L323.6 179.9 L324.3 183.9 L325.0 187.9 L325.7 191.9 L326.4 195.9 L327.1 199.9 L327.8 203.9 L328.5 207.9 L329.1 212.0 L329.8 216.0 L330.5 220.0 L331.2 224.0 L331.9 228.0 L332.6 232.0 L333.3 236.0 L334.0 240.0 M318.4 157.7 L319.2 162.0 L320.1 166.4 L320.9 170.7 L321.7 175.0 L322.5 179.4 L323.3 183.7 L324.2 188.0 L325.0 192.4 L325.8 196.7 L326.6 201.0 L327.4 205.4 L328.3 209.7 L329.1 214.0 L329.9 218.3 L330.7 222.7 L331.5 227.0 L332.4 231.3 L333.2 235.7 L334.0 240.0 M316.0 151.6 L317.0 156.2 L317.9 160.9 L318.9 165.5 L319.8 170.2 L320.8 174.8 L321.7 179.5 L322.7 184.1 L323.6 188.8 L324.5 193.5 L325.5 198.1 L326.4 202.8 L327.4 207.4 L328.3 212.1 L329.3 216.7 L330.2 221.4 L331.2 226.0 L332.1 230.7 L333.1 235.3 L334.0 240.0 M313.6 145.4 L314.7 150.4 L315.8 155.4 L316.9 160.3 L317.9 165.3 L319.0 170.3 L320.1 175.3 L321.1 180.3 L322.2 185.2 L323.3 190.2 L324.4 195.2 L325.4 200.2 L326.5 205.2 L327.6 210.1 L328.6 215.1 L329.7 220.1 L330.8 225.1 L331.9 230.0 L332.9 235.0 L334.0 240.0 M311.2 139.3 L312.4 144.6 L313.6 149.9 L314.8 155.2 L316.0 160.5 L317.2 165.8 L318.4 171.1 L319.6 176.4 L320.8 181.7 L322.0 187.0 L323.2 192.3 L324.4 197.6 L325.6 202.9 L326.8 208.2 L328.0 213.5 L329.2 218.8 L330.4 224.1 L331.6 229.4 L332.8 234.7 L334.0 240.0 M308.9 133.1 L310.2 138.7 L311.5 144.4 L312.8 150.0 L314.1 155.6 L315.5 161.2 L316.8 166.9 L318.1 172.5 L319.4 178.1 L320.8 183.7 L322.1 189.4 L323.4 195.0 L324.7 200.6 L326.1 206.2 L327.4 211.9 L328.7 217.5 L330.0 223.1 L331.4 228.7 L332.7 234.4 L334.0 240.0 M306.5 127.0 L307.9 132.9 L309.4 138.9 L310.8 144.8 L312.3 150.8 L313.7 156.7 L315.2 162.7 L316.6 168.6 L318.1 174.6 L319.5 180.5 L321.0 186.5 L322.4 192.4 L323.9 198.4 L325.3 204.3 L326.8 210.3 L328.2 216.2 L329.7 222.2 L331.1 228.1 L332.6 234.1 L334.0 240.0 M304.1 120.8 L305.6 127.1 L307.2 133.4 L308.8 139.6 L310.4 145.9 L311.9 152.2 L313.5 158.4 L315.1 164.7 L316.7 171.0 L318.2 177.3 L319.8 183.5 L321.4 189.8 L323.0 196.1 L324.5 202.4 L326.1 208.6 L327.7 214.9 L329.3 221.2 L330.8 227.5 L332.4 233.7 L334.0 240.0 M301.7 114.7 L303.4 121.3 L305.1 127.9 L306.8 134.4 L308.5 141.0 L310.2 147.6 L311.9 154.2 L313.6 160.8 L315.3 167.4 L317.0 174.0 L318.7 180.6 L320.4 187.2 L322.1 193.8 L323.8 200.4 L325.5 207.0 L327.2 213.6 L328.9 220.2 L330.6 226.8 L332.3 233.4 L334.0 240.0 M300.2 108.2 L302.0 115.2 L303.8 122.1 L305.5 129.0 L307.3 136.0 L309.1 142.9 L310.9 149.8 L312.7 156.8 L314.4 163.7 L316.2 170.7 L318.0 177.6 L319.8 184.5 L321.6 191.5 L323.3 198.4 L325.1 205.3 L326.9 212.3 L328.7 219.2 L330.4 226.1 L332.2 233.1 L334.0 240.0 M300.2 101.7 L301.9 108.9 L303.7 116.2 L305.5 123.5 L307.3 130.8 L309.1 138.1 L310.8 145.3 L312.6 152.6 L314.4 159.9 L316.2 167.2 L318.0 174.5 L319.8 181.8 L321.5 189.0 L323.3 196.3 L325.1 203.6 L326.9 210.9 L328.7 218.2 L330.4 225.4 L332.2 232.7 L334.0 240.0 M302.1 95.4 L303.8 103.0 L305.5 110.6 L307.1 118.2 L308.8 125.8 L310.5 133.5 L312.2 141.1 L313.8 148.7 L315.5 156.3 L317.2 163.9 L318.9 171.5 L320.6 179.1 L322.2 186.7 L323.9 194.3 L325.6 201.9 L327.3 209.6 L329.0 217.2 L330.6 224.8 L332.3 232.4 L334.0 240.0 M306.2 90.3 L307.7 98.2 L309.2 106.1 L310.6 113.9 L312.1 121.8 L313.5 129.7 L315.0 137.6 L316.5 145.5 L317.9 153.3 L319.4 161.2 L320.8 169.1 L322.3 177.0 L323.8 184.8 L325.2 192.7 L326.7 200.6 L328.2 208.5 L329.6 216.4 L331.1 224.2 L332.5 232.1 L334.0 240.0 M311.8 86.8 L313.0 94.9 L314.2 103.0 L315.3 111.0 L316.5 119.1 L317.7 127.2 L318.8 135.2 L320.0 143.3 L321.2 151.3 L322.3 159.4 L323.5 167.5 L324.7 175.5 L325.8 183.6 L327.0 191.6 L328.2 199.7 L329.3 207.8 L330.5 215.8 L331.7 223.9 L332.8 231.9 L334.0 240.0 M318.0 84.7 L318.9 92.8 L319.7 101.0 L320.6 109.2 L321.4 117.4 L322.2 125.5 L323.1 133.7 L323.9 141.9 L324.8 150.1 L325.6 158.2 L326.4 166.4 L327.3 174.6 L328.1 182.8 L329.0 190.9 L329.8 199.1 L330.6 207.3 L331.5 215.5 L332.3 223.6 L333.2 231.8 L334.0 240.0 M324.4 83.0 L324.9 91.3 L325.4 99.6 L325.9 107.8 L326.5 116.1 L327.0 124.3 L327.5 132.6 L328.0 140.9 L328.5 149.1 L329.0 157.4 L329.5 165.7 L330.0 173.9 L330.5 182.2 L331.0 190.4 L331.5 198.7 L332.0 207.0 L332.5 215.2 L333.0 223.5 L333.5 231.7 L334.0 240.0 M330.8 81.4 L331.0 89.8 L331.2 98.1 L331.3 106.5 L331.5 114.8 L331.7 123.2 L331.8 131.5 L332.0 139.8 L332.2 148.2 L332.3 156.5 L332.5 164.9 L332.7 173.2 L332.8 181.6 L333.0 189.9 L333.2 198.3 L333.3 206.6 L333.5 215.0 L333.7 223.3 L333.8 231.7 L334.0 240.0 M337.2 79.8 L337.1 88.2 L336.9 96.7 L336.7 105.1 L336.6 113.5 L336.4 122.0 L336.2 130.4 L336.0 138.8 L335.9 147.3 L335.7 155.7 L335.5 164.1 L335.4 172.5 L335.2 181.0 L335.0 189.4 L334.9 197.8 L334.7 206.3 L334.5 214.7 L334.3 223.1 L334.2 231.6 L334.0 240.0 M343.6 78.2 L343.1 86.7 L342.6 95.2 L342.1 103.7 L341.6 112.2 L341.1 120.8 L340.6 129.3 L340.1 137.8 L339.6 146.3 L339.1 154.8 L338.6 163.3 L338.1 171.9 L337.5 180.4 L337.0 188.9 L336.5 197.4 L336.0 205.9 L335.5 214.4 L335.0 223.0 L334.5 231.5 L334.0 240.0 M350.0 76.6 L349.2 85.2 L348.3 93.8 L347.5 102.4 L346.7 111.0 L345.8 119.6 L345.0 128.2 L344.1 136.8 L343.3 145.4 L342.4 154.0 L341.6 162.6 L340.7 171.2 L339.9 179.8 L339.1 188.4 L338.2 197.0 L337.4 205.6 L336.5 214.2 L335.7 222.8 L334.8 231.4 L334.0 240.0 M356.4 74.9 L355.2 83.6 L354.1 92.3 L352.9 101.0 L351.7 109.7 L350.5 118.4 L349.3 127.1 L348.2 135.7 L347.0 144.4 L345.8 153.1 L344.6 161.8 L343.4 170.5 L342.3 179.2 L341.1 187.9 L339.9 196.6 L338.7 205.2 L337.5 213.9 L336.4 222.6 L335.2 231.3 L334.0 240.0 M362.8 73.3 L361.3 82.1 L359.8 90.9 L358.3 99.6 L356.8 108.4 L355.2 117.2 L353.7 126.0 L352.2 134.7 L350.7 143.5 L349.2 152.3 L347.7 161.0 L346.1 169.8 L344.6 178.6 L343.1 187.4 L341.6 196.1 L340.1 204.9 L338.6 213.7 L337.0 222.5 L335.5 231.2 L334.0 240.0 M369.2 71.7 L367.4 80.5 L365.5 89.4 L363.7 98.3 L361.8 107.1 L360.0 116.0 L358.1 124.8 L356.2 133.7 L354.4 142.6 L352.5 151.4 L350.7 160.3 L348.8 169.1 L347.0 178.0 L345.1 186.8 L343.3 195.7 L341.4 204.6 L339.6 213.4 L337.7 222.3 L335.9 231.1 L334.0 240.0 M375.6 70.1 L373.4 79.0 L371.2 88.0 L369.0 96.9 L366.9 105.8 L364.7 114.8 L362.5 123.7 L360.3 132.7 L358.1 141.6 L355.9 150.6 L353.7 159.5 L351.5 168.5 L349.3 177.4 L347.1 186.3 L345.0 195.3 L342.8 204.2 L340.6 213.2 L338.4 222.1 L336.2 231.1 L334.0 240.0 M382.0 68.4 L379.5 77.5 L377.0 86.5 L374.4 95.5 L371.9 104.6 L369.4 113.6 L366.9 122.6 L364.3 131.7 L361.8 140.7 L359.3 149.7 L356.7 158.7 L354.2 167.8 L351.7 176.8 L349.2 185.8 L346.6 194.9 L344.1 203.9 L341.6 212.9 L339.1 221.9 L336.5 231.0 L334.0 240.0 M388.4 66.8 L385.6 75.9 L382.7 85.1 L379.8 94.2 L377.0 103.3 L374.1 112.4 L371.2 121.5 L368.4 130.6 L365.5 139.7 L362.6 148.9 L359.8 158.0 L356.9 167.1 L354.0 176.2 L351.2 185.3 L348.3 194.4 L345.5 203.5 L342.6 212.7 L339.7 221.8 L336.9 230.9 L334.0 240.0 M394.8 65.2 L391.6 74.4 L388.4 83.6 L385.2 92.8 L382.0 102.0 L378.8 111.2 L375.6 120.4 L372.4 129.6 L369.2 138.8 L366.0 148.0 L362.8 157.2 L359.6 166.4 L356.4 175.6 L353.2 184.8 L350.0 194.0 L346.8 203.2 L343.6 212.4 L340.4 221.6 L337.2 230.8 L334.0 240.0 M401.2 63.6 L397.7 72.9 L394.1 82.2 L390.6 91.4 L387.1 100.7 L383.5 110.0 L380.0 119.3 L376.4 128.6 L372.9 137.9 L369.4 147.1 L365.8 156.4 L362.3 165.7 L358.8 175.0 L355.2 184.3 L351.7 193.6 L348.1 202.9 L344.6 212.1 L341.1 221.4 L337.5 230.7 L334.0 240.0 M407.6 62.0 L403.7 71.3 L399.9 80.7 L396.0 90.1 L392.1 99.4 L388.2 108.8 L384.4 118.2 L380.5 127.6 L376.6 136.9 L372.7 146.3 L368.9 155.7 L365.0 165.0 L361.1 174.4 L357.2 183.8 L353.4 193.1 L349.5 202.5 L345.6 211.9 L341.7 221.3 L337.9 230.6 L334.0 240.0 M414.0 60.3 L409.8 69.8 L405.6 79.3 L401.4 88.7 L397.2 98.2 L393.0 107.6 L388.7 117.1 L384.5 126.5 L380.3 136.0 L376.1 145.4 L371.9 154.9 L367.7 164.4 L363.5 173.8 L359.3 183.3 L355.1 192.7 L350.8 202.2 L346.6 211.6 L342.4 221.1 L338.2 230.5 L334.0 240.0 M420.5 59.1 L415.9 68.6 L411.4 78.1 L406.8 87.6 L402.3 97.2 L397.7 106.7 L393.2 116.2 L388.6 125.7 L384.1 135.2 L379.5 144.8 L375.0 154.3 L370.4 163.8 L365.9 173.3 L361.3 182.9 L356.8 192.4 L352.2 201.9 L347.7 211.4 L343.1 221.0 L338.6 230.5 L334.0 240.0 M427.1 58.5 L422.2 68.1 L417.3 77.6 L412.4 87.2 L407.5 96.7 L402.6 106.3 L397.7 115.8 L392.8 125.4 L387.9 134.9 L383.0 144.5 L378.1 154.0 L373.2 163.6 L368.3 173.1 L363.4 182.7 L358.5 192.2 L353.6 201.8 L348.7 211.3 L343.8 220.9 L338.9 230.4 L334.0 240.0 M433.6 58.9 L428.4 68.4 L423.1 78.0 L417.9 87.5 L412.7 97.0 L407.4 106.6 L402.2 116.1 L396.9 125.6 L391.7 135.2 L386.4 144.7 L381.2 154.2 L376.0 163.7 L370.7 173.3 L365.5 182.8 L360.2 192.3 L355.0 201.9 L349.7 211.4 L344.5 220.9 L339.2 230.5 L334.0 240.0 M441.1 60.5 L435.5 70.0 L429.9 79.4 L424.2 88.9 L418.6 98.3 L412.9 107.8 L407.3 117.2 L401.7 126.6 L396.0 136.1 L390.4 145.5 L384.7 155.0 L379.1 164.4 L373.5 173.9 L367.8 183.3 L362.2 192.8 L356.6 202.2 L350.9 211.7 L345.3 221.1 L339.6 230.6 L334.0 240.0 M445.1 62.0 L439.3 71.4 L433.4 80.8 L427.6 90.1 L421.7 99.5 L415.9 108.9 L410.0 118.2 L404.2 127.6 L398.3 137.0 L392.5 146.3 L386.6 155.7 L380.8 165.1 L374.9 174.4 L369.1 183.8 L363.2 193.2 L357.4 202.5 L351.5 211.9 L345.7 221.3 L339.8 230.6 L334.0 240.0 M449.0 63.9 L443.0 73.2 L436.9 82.5 L430.9 91.7 L424.8 101.0 L418.7 110.3 L412.7 119.5 L406.6 128.8 L400.6 138.1 L394.5 147.3 L388.5 156.6 L382.4 165.9 L376.4 175.1 L370.3 184.4 L364.3 193.7 L358.2 202.9 L352.2 212.2 L346.1 221.5 L340.1 230.7 L334.0 240.0 M452.7 66.1 L446.4 75.3 L440.2 84.4 L434.0 93.6 L427.7 102.7 L421.5 111.9 L415.2 121.0 L409.0 130.2 L402.7 139.3 L396.5 148.5 L390.2 157.6 L384.0 166.8 L377.7 175.9 L371.5 185.1 L365.2 194.2 L359.0 203.4 L352.7 212.5 L346.5 221.7 L340.2 230.8 L334.0 240.0 M456.2 68.7 L449.7 77.7 L443.3 86.7 L436.9 95.7 L430.4 104.7 L424.0 113.8 L417.6 122.8 L411.2 131.8 L404.7 140.8 L398.3 149.8 L391.9 158.8 L385.4 167.9 L379.0 176.9 L372.6 185.9 L366.1 194.9 L359.7 203.9 L353.3 212.9 L346.9 222.0 L340.4 231.0 L334.0 240.0 M459.4 71.5 L452.8 80.4 L446.2 89.2 L439.6 98.1 L433.0 107.0 L426.4 115.8 L419.8 124.7 L413.2 133.6 L406.6 142.4 L400.0 151.3 L393.4 160.2 L386.8 169.0 L380.2 177.9 L373.6 186.8 L367.0 195.7 L360.4 204.5 L353.8 213.4 L347.2 222.3 L340.6 231.1 L334.0 240.0 M462.5 74.5 L455.8 83.2 L449.0 91.9 L442.2 100.6 L435.5 109.3 L428.7 118.0 L421.9 126.7 L415.2 135.5 L408.4 144.2 L401.6 152.9 L394.9 161.6 L388.1 170.3 L381.3 179.0 L374.6 187.7 L367.8 196.4 L361.1 205.2 L354.3 213.9 L347.5 222.6 L340.8 231.3 L334.0 240.0 M465.6 77.5 L458.6 86.1 L451.7 94.6 L444.8 103.2 L437.9 111.7 L430.9 120.3 L424.0 128.8 L417.1 137.4 L410.2 145.9 L403.2 154.5 L396.3 163.0 L389.4 171.6 L382.5 180.1 L375.5 188.7 L368.6 197.2 L361.7 205.8 L354.8 214.3 L347.8 222.9 L340.9 231.4 L334.0 240.0 M468.6 80.5 L461.5 88.9 L454.4 97.3 L447.3 105.7 L440.3 114.1 L433.2 122.5 L426.1 130.9 L419.0 139.3 L411.9 147.7 L404.8 156.1 L397.8 164.5 L390.7 172.9 L383.6 181.3 L376.5 189.6 L369.4 198.0 L362.3 206.4 L355.3 214.8 L348.2 223.2 L341.1 231.6 L334.0 240.0 M471.6 83.6 L464.4 91.8 L457.2 100.0 L449.9 108.3 L442.7 116.5 L435.4 124.7 L428.2 133.0 L420.9 141.2 L413.7 149.4 L406.4 157.7 L399.2 165.9 L392.0 174.1 L384.7 182.4 L377.5 190.6 L370.2 198.8 L363.0 207.1 L355.7 215.3 L348.5 223.5 L341.2 231.8 L334.0 240.0 M474.7 86.6 L467.3 94.7 L459.9 102.8 L452.5 110.8 L445.1 118.9 L437.7 127.0 L430.3 135.1 L422.9 143.1 L415.5 151.2 L408.0 159.3 L400.6 167.3 L393.2 175.4 L385.8 183.5 L378.4 191.6 L371.0 199.6 L363.6 207.7 L356.2 215.8 L348.8 223.9 L341.4 231.9 L334.0 240.0 M477.7 89.7 L470.2 97.6 L462.6 105.5 L455.0 113.4 L447.5 121.3 L439.9 129.2 L432.3 137.1 L424.8 145.0 L417.2 153.0 L409.6 160.9 L402.1 168.8 L394.5 176.7 L387.0 184.6 L379.4 192.5 L371.8 200.4 L364.3 208.3 L356.7 216.3 L349.1 224.2 L341.6 232.1 L334.0 240.0 M480.8 92.7 L473.1 100.4 L465.3 108.2 L457.6 115.9 L449.9 123.7 L442.2 131.5 L434.4 139.2 L426.7 147.0 L419.0 154.7 L411.3 162.5 L403.5 170.2 L395.8 178.0 L388.1 185.7 L380.4 193.5 L372.6 201.2 L364.9 209.0 L357.2 216.7 L349.5 224.5 L341.7 232.2 L334.0 240.0 M483.8 95.7 L475.9 103.3 L468.1 110.9 L460.2 118.5 L452.3 126.1 L444.4 133.7 L436.5 141.3 L428.6 148.9 L420.7 156.5 L412.9 164.1 L405.0 171.7 L397.1 179.3 L389.2 186.8 L381.3 194.4 L373.4 202.0 L365.5 209.6 L357.7 217.2 L349.8 224.8 L341.9 232.4 L334.0 240.0 M486.9 98.8 L478.8 106.2 L470.8 113.6 L462.7 121.1 L454.7 128.5 L446.6 135.9 L438.6 143.4 L430.5 150.8 L422.5 158.2 L414.5 165.7 L406.4 173.1 L398.4 180.5 L390.3 188.0 L382.3 195.4 L374.2 202.8 L366.2 210.3 L358.1 217.7 L350.1 225.1 L342.0 232.6 L334.0 240.0 M489.9 101.8 L481.7 109.1 L473.5 116.3 L465.3 123.6 L457.1 130.9 L448.9 138.2 L440.7 145.4 L432.5 152.7 L424.3 160.0 L416.1 167.3 L407.9 174.5 L399.6 181.8 L391.4 189.1 L383.2 196.4 L375.0 203.6 L366.8 210.9 L358.6 218.2 L350.4 225.5 L342.2 232.7 L334.0 240.0 M493.0 104.8 L484.6 112.0 L476.2 119.1 L467.9 126.2 L459.5 133.3 L451.1 140.4 L442.8 147.5 L434.4 154.6 L426.0 161.7 L417.7 168.9 L409.3 176.0 L400.9 183.1 L392.6 190.2 L384.2 197.3 L375.8 204.4 L367.5 211.5 L359.1 218.7 L350.7 225.8 L342.4 232.9 L334.0 240.0 M496.0 107.9 L487.5 114.8 L478.9 121.8 L470.4 128.7 L461.9 135.7 L453.4 142.6 L444.8 149.6 L436.3 156.6 L427.8 163.5 L419.3 170.5 L410.7 177.4 L402.2 184.4 L393.7 191.3 L385.2 198.3 L376.6 205.2 L368.1 212.2 L359.6 219.1 L351.1 226.1 L342.5 233.0 L334.0 240.0 M499.0 110.9 L490.4 117.7 L481.7 124.5 L473.0 131.3 L464.3 138.1 L455.6 144.9 L446.9 151.7 L438.2 158.5 L429.6 165.3 L420.9 172.1 L412.2 178.9 L403.5 185.6 L394.8 192.4 L386.1 199.2 L377.4 206.0 L368.7 212.8 L360.1 219.6 L351.4 226.4 L342.7 233.2 L334.0 240.0 M502.1 114.0 L493.2 120.6 L484.4 127.2 L475.5 133.9 L466.7 140.5 L457.9 147.1 L449.0 153.8 L440.2 160.4 L431.3 167.0 L422.5 173.7 L413.6 180.3 L404.8 186.9 L395.9 193.6 L387.1 200.2 L378.2 206.8 L369.4 213.5 L360.5 220.1 L351.7 226.7 L342.8 233.4 L334.0 240.0 M505.1 117.0 L496.1 123.5 L487.1 129.9 L478.1 136.4 L469.1 142.9 L460.1 149.4 L451.1 155.8 L442.1 162.3 L433.1 168.8 L424.1 175.3 L415.1 181.7 L406.1 188.2 L397.0 194.7 L388.0 201.2 L379.0 207.6 L370.0 214.1 L361.0 220.6 L352.0 227.1 L343.0 233.5 L334.0 240.0 M508.2 120.0 L499.0 126.3 L489.8 132.7 L480.7 139.0 L471.5 145.3 L462.3 151.6 L453.2 157.9 L444.0 164.2 L434.8 170.5 L425.7 176.9 L416.5 183.2 L407.3 189.5 L398.2 195.8 L389.0 202.1 L379.8 208.4 L370.7 214.7 L361.5 221.1 L352.3 227.4 L343.2 233.7 L334.0 240.0 M511.2 123.1 L501.9 129.2 L492.5 135.4 L483.2 141.5 L473.9 147.7 L464.6 153.8 L455.2 160.0 L445.9 166.2 L436.6 172.3 L427.3 178.5 L417.9 184.6 L408.6 190.8 L399.3 196.9 L390.0 203.1 L380.6 209.2 L371.3 215.4 L362.0 221.5 L352.7 227.7 L343.3 233.8 L334.0 240.0 M514.1 126.3 L504.6 132.3 L495.1 138.2 L485.6 144.2 L476.2 150.2 L466.7 156.2 L457.2 162.2 L447.7 168.2 L438.3 174.2 L428.8 180.1 L419.3 186.1 L409.8 192.1 L400.3 198.1 L390.9 204.1 L381.4 210.1 L371.9 216.1 L362.4 222.0 L353.0 228.0 L343.5 234.0 L334.0 240.0 M516.6 129.7 L507.0 135.5 L497.4 141.3 L487.8 147.1 L478.2 152.9 L468.6 158.7 L459.0 164.5 L449.3 170.4 L439.7 176.2 L430.1 182.0 L420.5 187.8 L410.9 193.6 L401.3 199.4 L391.7 205.2 L382.1 211.0 L372.4 216.8 L362.8 222.6 L353.2 228.4 L343.6 234.2 L334.0 240.0 M518.6 133.5 L508.9 139.1 L499.2 144.7 L489.5 150.3 L479.8 155.9 L470.1 161.5 L460.3 167.1 L450.6 172.7 L440.9 178.3 L431.2 184.0 L421.5 189.6 L411.7 195.2 L402.0 200.8 L392.3 206.4 L382.6 212.0 L372.9 217.6 L363.2 223.2 L353.4 228.8 L343.7 234.4 L334.0 240.0 M519.7 137.7 L509.9 143.0 L500.1 148.4 L490.4 153.8 L480.6 159.2 L470.8 164.6 L461.1 170.0 L451.3 175.4 L441.5 180.8 L431.7 186.1 L422.0 191.5 L412.2 196.9 L402.4 202.3 L392.6 207.7 L382.9 213.1 L373.1 218.5 L363.3 223.8 L353.5 229.2 L343.8 234.6 L334.0 240.0 M519.1 141.9 L509.4 147.1 L499.6 152.2 L489.9 157.4 L480.1 162.5 L470.4 167.7 L460.7 172.9 L450.9 178.0 L441.2 183.2 L431.4 188.4 L421.7 193.5 L411.9 198.7 L402.2 203.9 L392.5 209.0 L382.7 214.2 L373.0 219.3 L363.2 224.5 L353.5 229.7 L343.7 234.8 L334.0 240.0 M516.9 145.5 L507.2 150.5 L497.6 155.5 L488.0 160.4 L478.4 165.4 L468.7 170.4 L459.1 175.4 L449.5 180.3 L439.9 185.3 L430.2 190.3 L420.6 195.3 L411.0 200.2 L401.4 205.2 L391.7 210.2 L382.1 215.1 L372.5 220.1 L362.9 225.1 L353.2 230.1 L343.6 235.0 L334.0 240.0 M513.6 148.3 L504.1 153.1 L494.7 158.0 L485.2 162.8 L475.8 167.6 L466.3 172.4 L456.9 177.3 L447.4 182.1 L438.0 186.9 L428.5 191.7 L419.1 196.6 L409.6 201.4 L400.2 206.2 L390.7 211.0 L381.3 215.9 L371.8 220.7 L362.4 225.5 L352.9 230.3 L343.5 235.2 L334.0 240.0 M509.9 150.5 L500.6 155.2 L491.4 159.9 L482.1 164.6 L472.9 169.3 L463.6 174.0 L454.3 178.7 L445.1 183.5 L435.8 188.2 L426.6 192.9 L417.3 197.6 L408.1 202.3 L398.8 207.0 L389.5 211.7 L380.3 216.4 L371.0 221.2 L361.8 225.9 L352.5 230.6 L343.3 235.3 L334.0 240.0 M505.9 152.2 L496.9 156.8 L487.8 161.4 L478.8 166.0 L469.7 170.7 L460.7 175.3 L451.6 179.9 L442.6 184.5 L433.5 189.1 L424.5 193.8 L415.4 198.4 L406.4 203.0 L397.3 207.6 L388.3 212.3 L379.2 216.9 L370.2 221.5 L361.1 226.1 L352.1 230.8 L343.0 235.4 L334.0 240.0 M545.6 173.4 L547.0 182.1 L547.3 190.9 L546.7 199.8 L545.1 208.9 L542.5 217.9 L538.9 226.9 L534.5 235.9 L529.0 244.8 L522.8 253.5 L515.6 262.0 L507.6 270.3 L498.8 278.4 L489.3 286.1 L479.1 293.4 L468.3 300.4 L456.9 306.9 L444.9 313.0 L432.4 318.6 L419.6 323.7 L406.4 328.2 L392.9 332.2 L379.2 335.5 L365.4 338.3 L351.5 340.5 L337.6 342.0 L323.7 342.9 L310.0 343.2 L296.4 342.9 L283.2 341.9 L270.2 340.2 L257.7 338.0 L245.6 335.1 L234.1 331.6 L223.1 327.6 L212.8 323.0 L203.1 317.8 L194.2 312.2 L186.0 306.0 L178.7 299.4 L172.2 292.4 L166.6 285.0 L161.9 277.2 L158.2 269.2 L155.4 260.8 L153.6 252.3 L152.7 243.5 L152.9 234.6 L154.0 225.7 L156.1 216.6 L159.2 207.6 L163.2 198.6 L168.1 189.6 L174.0 180.8 L180.7 172.2 L188.3 163.8 L196.7 155.6 L205.8 147.7 L215.7 140.2 L226.2 133.0 L237.4 126.3 L249.1 120.0 L261.3 114.1 L273.9 108.8 L287.0 104.0 L300.3 99.8 L313.9 96.1 L327.7 93.0 L341.6 90.5 L355.5 88.7 L369.4 87.4 L383.2 86.8 L396.8 86.9 L410.2 87.6 L423.3 88.9 L436.1 90.8 L448.4 93.4 L460.2 96.6 L471.5 100.3 L482.1 104.7 L492.2 109.5 L501.5 115.0 L510.0 120.9 L517.7 127.2 L524.7 134.1 L530.7 141.3 L535.8 148.9 L540.1 156.8 L543.3 165.0 L545.6 173.4 M511.4 180.7 L512.5 187.8 L512.8 195.1 L512.3 202.5 L510.9 209.9 L508.8 217.4 L505.9 224.9 L502.2 232.3 L497.7 239.6 L492.5 246.8 L486.6 253.8 L480.0 260.7 L472.8 267.3 L465.0 273.6 L456.5 279.7 L447.6 285.4 L438.2 290.8 L428.3 295.8 L418.0 300.5 L407.4 304.6 L396.5 308.4 L385.4 311.7 L374.1 314.4 L362.7 316.7 L351.2 318.5 L339.7 319.8 L328.3 320.6 L317.0 320.8 L305.8 320.5 L294.9 319.7 L284.2 318.3 L273.9 316.4 L263.9 314.1 L254.4 311.2 L245.3 307.9 L236.8 304.1 L228.8 299.8 L221.4 295.1 L214.7 290.1 L208.7 284.6 L203.3 278.8 L198.7 272.7 L194.8 266.3 L191.8 259.7 L189.5 252.8 L188.0 245.8 L187.3 238.5 L187.4 231.2 L188.3 223.8 L190.0 216.3 L192.6 208.9 L195.9 201.4 L200.0 194.1 L204.8 186.8 L210.3 179.7 L216.6 172.7 L223.5 166.0 L231.0 159.5 L239.2 153.3 L247.9 147.4 L257.1 141.8 L266.7 136.6 L276.8 131.8 L287.2 127.4 L298.0 123.4 L309.0 119.9 L320.2 116.9 L331.6 114.3 L343.0 112.3 L354.5 110.8 L366.0 109.8 L377.4 109.3 L388.6 109.3 L399.7 109.9 L410.5 111.0 L421.0 112.6 L431.2 114.7 L440.9 117.3 L450.2 120.4 L459.0 124.0 L467.3 128.0 L474.9 132.5 L482.0 137.3 L488.4 142.6 L494.1 148.2 L499.1 154.2 L503.3 160.4 L506.8 167.0 L509.5 173.7 L511.4 180.7 M482.0 186.9 L482.9 192.8 L483.2 198.7 L482.8 204.8 L481.7 210.9 L479.9 217.0 L477.5 223.1 L474.5 229.1 L470.9 235.1 L466.6 241.0 L461.8 246.8 L456.4 252.4 L450.5 257.8 L444.1 263.0 L437.2 267.9 L429.8 272.6 L422.1 277.0 L414.1 281.1 L405.7 284.9 L397.0 288.3 L388.1 291.4 L379.0 294.1 L369.7 296.4 L360.4 298.2 L351.0 299.7 L341.6 300.7 L332.2 301.4 L323.0 301.5 L313.8 301.3 L304.9 300.6 L296.2 299.5 L287.7 298.0 L279.6 296.1 L271.8 293.7 L264.3 291.0 L257.4 287.9 L250.8 284.4 L244.8 280.6 L239.3 276.4 L234.4 272.0 L230.0 267.2 L226.2 262.2 L223.1 257.0 L220.5 251.6 L218.6 245.9 L217.4 240.2 L216.9 234.3 L216.9 228.3 L217.7 222.2 L219.1 216.1 L221.2 210.0 L223.9 203.9 L227.2 197.9 L231.2 191.9 L235.7 186.1 L240.8 180.4 L246.5 174.9 L252.7 169.6 L259.3 164.5 L266.4 159.7 L274.0 155.1 L281.9 150.9 L290.1 146.9 L298.7 143.3 L307.4 140.1 L316.5 137.2 L325.6 134.7 L334.9 132.6 L344.3 131.0 L353.7 129.7 L363.1 128.9 L372.4 128.5 L381.6 128.5 L390.7 129.0 L399.5 129.9 L408.1 131.2 L416.4 132.9 L424.4 135.1 L432.0 137.6 L439.2 140.5 L446.0 143.8 L452.2 147.5 L458.0 151.5 L463.2 155.8 L467.9 160.4 L472.0 165.2 L475.4 170.3 L478.3 175.7 L480.5 181.2 L482.0 186.9 M455.6 192.5 L456.4 197.2 L456.5 202.0 L456.2 206.8 L455.3 211.7 L453.9 216.6 L452.0 221.5 L449.6 226.3 L446.7 231.1 L443.3 235.8 L439.4 240.4 L435.1 244.9 L430.4 249.2 L425.2 253.4 L419.7 257.3 L413.9 261.1 L407.7 264.6 L401.2 267.9 L394.5 270.9 L387.6 273.7 L380.5 276.1 L373.2 278.3 L365.8 280.1 L358.3 281.6 L350.8 282.8 L343.3 283.6 L335.8 284.1 L328.4 284.2 L321.1 284.0 L313.9 283.5 L306.9 282.6 L300.2 281.4 L293.6 279.8 L287.4 278.0 L281.5 275.8 L275.9 273.3 L270.7 270.5 L265.9 267.5 L261.5 264.1 L257.5 260.6 L254.0 256.8 L251.0 252.8 L248.4 248.6 L246.4 244.3 L244.9 239.8 L243.9 235.1 L243.5 230.4 L243.6 225.6 L244.2 220.8 L245.3 215.9 L247.0 211.0 L249.1 206.1 L251.8 201.3 L255.0 196.5 L258.6 191.9 L262.7 187.3 L267.2 182.9 L272.1 178.7 L277.5 174.6 L283.2 170.7 L289.2 167.1 L295.5 163.7 L302.1 160.5 L308.9 157.7 L316.0 155.1 L323.2 152.8 L330.5 150.8 L337.9 149.1 L345.4 147.8 L353.0 146.8 L360.5 146.1 L367.9 145.8 L375.3 145.8 L382.5 146.2 L389.6 146.9 L396.5 148.0 L403.1 149.3 L409.5 151.0 L415.6 153.1 L421.4 155.4 L426.8 158.1 L431.8 161.0 L436.4 164.2 L440.6 167.6 L444.3 171.3 L447.6 175.2 L450.4 179.3 L452.6 183.6 L454.4 188.0 L455.6 192.5 M432.2 197.5 L432.7 201.2 L432.9 204.9 L432.6 208.6 L431.9 212.4 L430.8 216.2 L429.4 220.0 L427.5 223.8 L425.2 227.5 L422.6 231.2 L419.6 234.8 L416.2 238.2 L412.5 241.6 L408.5 244.8 L404.2 247.9 L399.7 250.9 L394.9 253.6 L389.9 256.2 L384.6 258.5 L379.2 260.6 L373.7 262.5 L368.0 264.2 L362.3 265.6 L356.5 266.8 L350.6 267.7 L344.8 268.4 L339.0 268.7 L333.2 268.9 L327.5 268.7 L321.9 268.3 L316.5 267.6 L311.2 266.6 L306.2 265.4 L301.3 264.0 L296.7 262.3 L292.4 260.3 L288.3 258.2 L284.6 255.8 L281.1 253.2 L278.1 250.5 L275.3 247.5 L273.0 244.4 L271.0 241.1 L269.4 237.8 L268.3 234.3 L267.5 230.7 L267.2 227.0 L267.2 223.2 L267.7 219.5 L268.6 215.7 L269.9 211.9 L271.5 208.1 L273.6 204.3 L276.1 200.6 L278.9 197.0 L282.1 193.5 L285.6 190.1 L289.4 186.8 L293.6 183.6 L298.0 180.6 L302.7 177.7 L307.6 175.1 L312.7 172.6 L318.1 170.4 L323.5 168.4 L329.1 166.6 L334.8 165.1 L340.6 163.8 L346.5 162.7 L352.3 161.9 L358.1 161.4 L363.9 161.2 L369.7 161.2 L375.3 161.5 L380.8 162.0 L386.2 162.9 L391.3 163.9 L396.3 165.3 L401.0 166.8 L405.5 168.7 L409.7 170.7 L413.6 173.0 L417.2 175.5 L420.5 178.1 L423.4 181.0 L425.9 184.0 L428.1 187.2 L429.8 190.5 L431.2 194.0 L432.2 197.5 M410.6 202.1 L411.1 204.8 L411.2 207.5 L411.0 210.3 L410.5 213.1 L409.7 215.9 L408.6 218.7 L407.2 221.5 L405.5 224.2 L403.6 226.9 L401.3 229.6 L398.9 232.2 L396.1 234.6 L393.2 237.0 L390.0 239.3 L386.7 241.5 L383.1 243.5 L379.4 245.4 L375.6 247.1 L371.6 248.7 L367.5 250.1 L363.3 251.3 L359.1 252.4 L354.8 253.2 L350.5 253.9 L346.1 254.4 L341.8 254.7 L337.6 254.7 L333.4 254.6 L329.3 254.3 L325.3 253.8 L321.4 253.1 L317.6 252.2 L314.1 251.2 L310.7 249.9 L307.5 248.5 L304.5 246.9 L301.7 245.1 L299.2 243.2 L296.9 241.2 L294.9 239.0 L293.2 236.7 L291.7 234.3 L290.5 231.8 L289.7 229.2 L289.1 226.6 L288.8 223.8 L288.9 221.1 L289.2 218.3 L289.9 215.5 L290.8 212.7 L292.1 209.9 L293.6 207.1 L295.4 204.4 L297.5 201.7 L299.9 199.1 L302.5 196.6 L305.3 194.1 L308.4 191.8 L311.6 189.6 L315.1 187.5 L318.7 185.5 L322.5 183.7 L326.4 182.1 L330.5 180.6 L334.6 179.3 L338.8 178.1 L343.1 177.2 L347.4 176.4 L351.7 175.8 L356.0 175.5 L360.3 175.3 L364.5 175.3 L368.7 175.5 L372.7 175.9 L376.7 176.5 L380.5 177.3 L384.2 178.3 L387.7 179.5 L391.0 180.8 L394.1 182.3 L396.9 184.0 L399.6 185.8 L402.0 187.8 L404.1 189.9 L406.0 192.1 L407.6 194.5 L408.9 196.9 L409.9 199.5 L410.6 202.1 M391.1 206.3 L391.4 208.1 L391.4 209.9 L391.3 211.8 L391.0 213.7 L390.4 215.6 L389.7 217.5 L388.7 219.4 L387.6 221.3 L386.3 223.1 L384.8 224.9 L383.1 226.6 L381.3 228.3 L379.3 229.9 L377.1 231.5 L374.8 232.9 L372.4 234.3 L369.9 235.6 L367.3 236.8 L364.6 237.8 L361.8 238.8 L359.0 239.6 L356.1 240.3 L353.2 240.9 L350.3 241.4 L347.4 241.7 L344.5 241.9 L341.6 241.9 L338.8 241.8 L336.0 241.6 L333.3 241.3 L330.6 240.8 L328.1 240.2 L325.7 239.5 L323.4 238.6 L321.2 237.7 L319.2 236.6 L317.3 235.4 L315.6 234.1 L314.0 232.7 L312.7 231.3 L311.5 229.7 L310.5 228.1 L309.7 226.4 L309.1 224.6 L308.8 222.8 L308.6 221.0 L308.6 219.1 L308.8 217.2 L309.3 215.3 L309.9 213.4 L310.8 211.5 L311.8 209.7 L313.0 207.8 L314.5 206.0 L316.0 204.2 L317.8 202.5 L319.7 200.9 L321.8 199.3 L324.0 197.8 L326.3 196.4 L328.8 195.0 L331.4 193.8 L334.0 192.7 L336.8 191.7 L339.6 190.8 L342.4 190.0 L345.3 189.4 L348.2 188.9 L351.2 188.5 L354.1 188.2 L357.0 188.1 L359.8 188.1 L362.6 188.2 L365.4 188.5 L368.1 188.9 L370.7 189.5 L373.1 190.1 L375.5 190.9 L377.8 191.8 L379.9 192.9 L381.8 194.0 L383.6 195.2 L385.2 196.6 L386.7 198.0 L387.9 199.5 L389.0 201.1 L389.9 202.8 L390.6 204.5 L391.1 206.3 M374.5 209.8 L374.6 210.9 L374.7 212.0 L374.6 213.1 L374.4 214.2 L374.1 215.4 L373.6 216.5 L373.1 217.6 L372.4 218.7 L371.6 219.8 L370.7 220.9 L369.7 221.9 L368.6 222.9 L367.4 223.9 L366.1 224.8 L364.8 225.7 L363.4 226.5 L361.9 227.2 L360.3 227.9 L358.7 228.6 L357.1 229.1 L355.4 229.6 L353.7 230.1 L351.9 230.4 L350.2 230.7 L348.4 230.9 L346.7 231.0 L345.0 231.0 L343.3 231.0 L341.6 230.9 L340.0 230.7 L338.5 230.4 L337.0 230.0 L335.5 229.6 L334.1 229.1 L332.8 228.5 L331.6 227.9 L330.5 227.1 L329.5 226.4 L328.6 225.6 L327.8 224.7 L327.1 223.7 L326.5 222.8 L326.0 221.8 L325.7 220.7 L325.4 219.7 L325.3 218.6 L325.4 217.5 L325.5 216.3 L325.8 215.2 L326.1 214.1 L326.6 212.9 L327.3 211.8 L328.0 210.7 L328.8 209.6 L329.8 208.6 L330.8 207.6 L332.0 206.6 L333.2 205.7 L334.5 204.8 L335.9 203.9 L337.4 203.1 L338.9 202.4 L340.5 201.7 L342.1 201.1 L343.8 200.6 L345.5 200.1 L347.2 199.7 L348.9 199.4 L350.7 199.2 L352.4 199.1 L354.1 199.0 L355.9 199.0 L357.5 199.1 L359.2 199.2 L360.8 199.5 L362.3 199.8 L363.8 200.2 L365.2 200.7 L366.5 201.2 L367.8 201.8 L368.9 202.5 L370.0 203.2 L371.0 204.0 L371.8 204.9 L372.6 205.8 L373.2 206.7 L373.8 207.7 L374.2 208.7 L374.5 209.8"/>
<path clip-path="url(#cF)" d="M344.0 306.0 L344.6 300.9 L345.4 295.9 L346.4 290.9 L347.6 285.9 L349.1 281.0 L350.6 276.1 L352.3 271.2 L354.0 266.4 L355.9 261.7 L357.9 257.0 L360.1 252.3 L362.4 247.8 L365.0 243.4 L367.7 239.0 L370.5 234.7 L373.5 230.6 L376.6 226.5 L379.9 222.5 L383.3 218.7 L386.9 215.1 L390.7 211.7 L394.6 208.5 L398.7 205.3 L402.8 202.3 L407.0 199.4 L411.3 196.4 L415.5 193.5 L419.8 190.7 L424.1 187.9 L428.4 185.2 L432.8 182.7 L437.3 180.2 L441.8 177.9 L446.4 175.7 L451.1 173.6 L455.8 171.5 L460.5 169.5 L465.2 167.6 L470.0 165.6 M344.1 306.7 L344.7 301.6 L345.4 296.5 L346.4 291.5 L347.7 286.5 L349.1 281.5 L350.7 276.6 L352.3 271.7 L354.0 266.9 L355.9 262.1 L357.9 257.4 L360.0 252.7 L362.4 248.2 L364.9 243.7 L367.6 239.3 L370.4 235.1 L373.4 230.8 L376.5 226.7 L379.7 222.8 L383.1 219.0 L386.7 215.4 L390.5 211.9 L394.4 208.7 L398.4 205.5 L402.6 202.5 L406.8 199.5 L411.0 196.6 L415.2 193.7 L419.4 190.8 L423.7 188.1 L428.0 185.4 L432.4 182.8 L436.9 180.4 L441.4 178.0 L446.0 175.8 L450.6 173.7 L455.3 171.7 L460.0 169.7 L464.7 167.7 L469.5 165.8 M344.0 307.4 L344.6 302.3 L345.3 297.2 L346.3 292.1 L347.6 287.1 L349.0 282.1 L350.5 277.2 L352.1 272.3 L353.8 267.4 L355.7 262.6 L357.6 257.8 L359.7 253.2 L362.1 248.6 L364.6 244.2 L367.2 239.8 L370.0 235.4 L372.9 231.2 L376.0 227.1 L379.2 223.1 L382.5 219.3 L386.1 215.7 L389.8 212.3 L393.7 209.0 L397.7 205.8 L401.7 202.8 L405.9 199.8 L410.0 196.9 L414.2 194.0 L418.4 191.1 L422.6 188.4 L426.9 185.7 L431.3 183.1 L435.7 180.7 L440.1 178.4 L444.7 176.2 L449.3 174.1 L453.9 172.0 L458.6 170.0 L463.2 168.1 L467.9 166.2 M343.7 308.2 L344.4 303.0 L345.1 297.9 L346.1 292.8 L347.3 287.7 L348.7 282.7 L350.2 277.8 L351.8 272.9 L353.4 268.0 L355.2 263.2 L357.1 258.4 L359.2 253.7 L361.5 249.2 L363.9 244.7 L366.5 240.3 L369.2 235.9 L372.1 231.7 L375.1 227.6 L378.2 223.6 L381.5 219.8 L385.0 216.2 L388.7 212.7 L392.5 209.4 L396.4 206.3 L400.4 203.2 L404.4 200.3 L408.5 197.3 L412.6 194.4 L416.7 191.6 L420.9 188.8 L425.1 186.2 L429.3 183.6 L433.7 181.2 L438.1 178.9 L442.5 176.7 L447.0 174.6 L451.6 172.6 L456.1 170.7 L460.7 168.8 L465.3 166.9 M343.3 308.9 L343.9 303.7 L344.7 298.6 L345.6 293.5 L346.8 288.4 L348.2 283.4 L349.6 278.4 L351.2 273.5 L352.8 268.6 L354.5 263.8 L356.4 259.0 L358.4 254.3 L360.6 249.8 L363.0 245.3 L365.5 240.9 L368.1 236.5 L370.9 232.3 L373.8 228.2 L376.9 224.2 L380.1 220.4 L383.5 216.7 L387.0 213.3 L390.7 210.0 L394.5 206.9 L398.4 203.8 L402.4 200.8 L406.4 197.9 L410.3 195.0 L414.4 192.2 L418.4 189.4 L422.5 186.8 L426.6 184.3 L430.9 181.9 L435.1 179.6 L439.5 177.5 L443.9 175.5 L448.3 173.5 L452.8 171.6 L457.2 169.7 L461.7 167.8 M342.8 309.7 L343.4 304.5 L344.1 299.3 L345.0 294.2 L346.2 289.1 L347.5 284.1 L348.9 279.1 L350.4 274.2 L351.9 269.3 L353.6 264.5 L355.4 259.7 L357.3 255.0 L359.4 250.4 L361.7 245.9 L364.2 241.5 L366.7 237.2 L369.4 233.0 L372.2 228.8 L375.1 224.9 L378.2 221.1 L381.5 217.4 L384.9 214.0 L388.5 210.7 L392.2 207.6 L396.0 204.5 L399.8 201.6 L403.6 198.7 L407.5 195.8 L411.3 193.0 L415.2 190.2 L419.2 187.6 L423.2 185.1 L427.3 182.8 L431.4 180.6 L435.6 178.5 L439.9 176.5 L444.2 174.6 L448.5 172.7 L452.8 170.8 L457.2 169.0 M342.1 310.5 L342.7 305.3 L343.3 300.1 L344.3 295.0 L345.4 289.9 L346.6 284.9 L348.0 279.9 L349.4 274.9 L350.9 270.0 L352.5 265.2 L354.2 260.4 L356.0 255.7 L358.0 251.2 L360.2 246.7 L362.6 242.3 L365.0 237.9 L367.6 233.7 L370.2 229.6 L373.0 225.6 L376.0 221.8 L379.1 218.2 L382.4 214.8 L385.8 211.5 L389.4 208.4 L393.0 205.4 L396.6 202.4 L400.3 199.5 L404.0 196.7 L407.7 193.9 L411.4 191.2 L415.2 188.6 L419.1 186.1 L423.0 183.9 L426.9 181.7 L431.0 179.7 L435.1 177.7 L439.2 175.9 L443.3 174.0 L447.5 172.3 L451.6 170.5 M341.3 311.3 L341.8 306.1 L342.5 300.9 L343.3 295.7 L344.4 290.7 L345.6 285.6 L346.9 280.6 L348.3 275.7 L349.7 270.8 L351.1 266.0 L352.7 261.2 L354.5 256.5 L356.4 252.0 L358.5 247.5 L360.7 243.1 L363.0 238.8 L365.4 234.6 L367.9 230.5 L370.6 226.5 L373.4 222.7 L376.4 219.1 L379.5 215.7 L382.7 212.4 L386.1 209.3 L389.5 206.3 L393.0 203.4 L396.5 200.5 L400.0 197.7 L403.5 194.9 L407.0 192.2 L410.6 189.7 L414.3 187.3 L418.0 185.1 L421.7 183.0 L425.6 181.1 L429.4 179.2 L433.4 177.4 L437.3 175.6 L441.3 173.9 L445.2 172.2 M340.3 312.1 L340.8 306.9 L341.4 301.7 L342.3 296.5 L343.3 291.4 L344.5 286.4 L345.7 281.4 L346.9 276.5 L348.2 271.6 L349.6 266.8 L351.1 262.0 L352.7 257.4 L354.5 252.8 L356.5 248.3 L358.5 244.0 L360.7 239.7 L362.9 235.5 L365.3 231.4 L367.8 227.5 L370.4 223.7 L373.2 220.1 L376.1 216.7 L379.2 213.5 L382.3 210.4 L385.6 207.4 L388.8 204.5 L392.1 201.6 L395.4 198.8 L398.7 196.1 L402.0 193.5 L405.4 191.0 L408.8 188.7 L412.3 186.5 L415.8 184.5 L419.4 182.6 L423.1 180.8 L426.8 179.1 L430.5 177.4 L434.2 175.8 L437.9 174.1 M339.2 312.8 L339.7 307.6 L340.3 302.4 L341.1 297.3 L342.0 292.2 L343.1 287.2 L344.3 282.2 L345.4 277.3 L346.6 272.5 L347.9 267.7 L349.2 262.9 L350.8 258.3 L352.4 253.7 L354.2 249.3 L356.1 244.9 L358.1 240.6 L360.2 236.4 L362.4 232.4 L364.7 228.5 L367.2 224.7 L369.7 221.2 L372.4 217.8 L375.3 214.6 L378.2 211.5 L381.2 208.5 L384.2 205.7 L387.2 202.8 L390.3 200.1 L393.4 197.4 L396.4 194.8 L399.6 192.4 L402.7 190.1 L406.0 188.1 L409.3 186.2 L412.6 184.4 L416.0 182.7 L419.5 181.0 L422.9 179.4 L426.4 177.8 L429.9 176.2 M337.9 313.6 L338.4 308.4 L339.0 303.2 L339.7 298.1 L340.6 293.0 L341.7 288.0 L342.7 283.1 L343.8 278.2 L344.9 273.3 L346.0 268.5 L347.2 263.8 L348.6 259.2 L350.1 254.7 L351.7 250.2 L353.5 245.9 L355.3 241.6 L357.2 237.5 L359.2 233.4 L361.3 229.6 L363.5 225.9 L365.9 222.3 L368.4 219.0 L371.0 215.8 L373.7 212.7 L376.4 209.8 L379.2 206.9 L382.0 204.1 L384.7 201.4 L387.5 198.8 L390.4 196.3 L393.2 193.9 L396.1 191.7 L399.1 189.8 L402.1 188.0 L405.2 186.3 L408.3 184.7 L411.5 183.1 L414.7 181.6 L417.9 180.1 L421.1 178.6 M336.6 314.3 L337.1 309.1 L337.6 304.0 L338.3 298.9 L339.1 293.8 L340.1 288.8 L341.0 283.9 L342.0 279.0 L342.9 274.2 L343.9 269.4 L345.0 264.7 L346.3 260.1 L347.6 255.6 L349.1 251.2 L350.7 246.9 L352.3 242.7 L354.0 238.6 L355.8 234.6 L357.7 230.7 L359.7 227.0 L361.8 223.5 L364.0 220.2 L366.4 217.1 L368.8 214.0 L371.3 211.1 L373.8 208.3 L376.3 205.6 L378.8 202.9 L381.3 200.3 L383.8 197.8 L386.4 195.6 L389.0 193.5 L391.7 191.6 L394.4 189.9 L397.2 188.3 L400.0 186.8 L402.9 185.3 L405.8 183.9 L408.7 182.5 L411.6 181.1 M335.2 315.0 L335.6 309.9 L336.0 304.7 L336.7 299.6 L337.5 294.6 L338.3 289.6 L339.2 284.7 L340.1 279.9 L340.9 275.1 L341.7 270.3 L342.7 265.7 L343.8 261.1 L344.9 256.6 L346.2 252.3 L347.6 248.0 L349.1 243.8 L350.6 239.7 L352.1 235.7 L353.8 231.9 L355.5 228.3 L357.4 224.8 L359.4 221.5 L361.5 218.4 L363.6 215.4 L365.8 212.6 L368.0 209.8 L370.2 207.1 L372.4 204.4 L374.6 201.9 L376.9 199.5 L379.1 197.3 L381.4 195.3 L383.8 193.5 L386.2 191.9 L388.7 190.5 L391.2 189.1 L393.8 187.7 L396.3 186.4 L398.9 185.1 L401.5 183.7 M333.7 315.7 L334.0 310.5 L334.4 305.4 L335.0 300.4 L335.7 295.4 L336.5 290.4 L337.3 285.5 L338.0 280.7 L338.7 276.0 L339.4 271.3 L340.2 266.6 L341.1 262.1 L342.1 257.7 L343.2 253.3 L344.4 249.0 L345.7 244.9 L346.9 240.8 L348.3 236.9 L349.7 233.2 L351.2 229.6 L352.8 226.1 L354.5 222.9 L356.3 219.8 L358.1 216.9 L360.0 214.0 L361.9 211.3 L363.8 208.6 L365.7 206.0 L367.6 203.6 L369.5 201.2 L371.5 199.1 L373.5 197.2 L375.5 195.6 L377.6 194.1 L379.8 192.7 L382.0 191.5 L384.2 190.2 L386.4 189.0 L388.6 187.8 L390.9 186.5 M332.0 316.3 L332.4 311.2 L332.7 306.1 L333.3 301.1 L333.9 296.1 L334.6 291.2 L335.3 286.4 L335.9 281.6 L336.4 276.8 L337.0 272.2 L337.6 267.6 L338.4 263.1 L339.2 258.7 L340.1 254.4 L341.1 250.2 L342.1 246.0 L343.2 242.0 L344.3 238.2 L345.4 234.4 L346.7 230.9 L348.0 227.5 L349.4 224.3 L350.9 221.3 L352.4 218.4 L354.0 215.6 L355.6 212.9 L357.2 210.2 L358.8 207.7 L360.3 205.3 L361.9 203.1 L363.5 201.0 L365.2 199.2 L366.9 197.7 L368.7 196.3 L370.5 195.1 L372.3 194.0 L374.2 192.8 L376.0 191.7 L377.9 190.6 L379.9 189.5 M330.4 316.9 L330.7 311.8 L331.0 306.8 L331.5 301.8 L332.0 296.8 L332.6 292.0 L333.2 287.1 L333.6 282.4 L334.1 277.7 L334.5 273.1 L334.9 268.6 L335.5 264.1 L336.2 259.7 L336.9 255.4 L337.6 251.3 L338.4 247.2 L339.3 243.2 L340.1 239.4 L341.0 235.7 L342.0 232.2 L343.0 228.9 L344.1 225.7 L345.3 222.7 L346.6 219.9 L347.8 217.1 L349.1 214.5 L350.3 211.9 L351.6 209.4 L352.8 207.1 L354.1 204.9 L355.3 203.0 L356.6 201.3 L358.0 199.9 L359.4 198.7 L360.9 197.6 L362.3 196.5 L363.8 195.5 L365.4 194.5 L366.9 193.5 L368.5 192.5 M328.7 317.4 L328.9 312.4 L329.2 307.4 L329.6 302.4 L330.1 297.5 L330.6 292.7 L331.0 287.9 L331.4 283.2 L331.6 278.6 L331.9 274.0 L332.2 269.5 L332.6 265.1 L333.0 260.8 L333.6 256.5 L334.1 252.4 L334.7 248.4 L335.2 244.5 L335.8 240.7 L336.5 237.1 L337.2 233.6 L337.9 230.3 L338.7 227.2 L339.6 224.3 L340.5 221.4 L341.5 218.7 L342.4 216.1 L343.3 213.6 L344.2 211.2 L345.1 208.9 L346.0 206.8 L346.9 205.0 L347.9 203.4 L348.9 202.1 L349.9 201.0 L351.0 200.1 L352.1 199.1 L353.3 198.3 L354.4 197.4 L355.6 196.5 L356.8 195.6 M326.9 317.9 L327.1 312.9 L327.3 308.0 L327.7 303.0 L328.1 298.2 L328.5 293.4 L328.8 288.6 L329.0 284.0 L329.2 279.4 L329.3 274.9 L329.4 270.4 L329.6 266.1 L329.9 261.8 L330.2 257.6 L330.5 253.5 L330.8 249.5 L331.2 245.7 L331.5 241.9 L331.9 238.4 L332.3 235.0 L332.7 231.7 L333.3 228.7 L333.8 225.8 L334.4 223.0 L335.0 220.3 L335.6 217.8 L336.2 215.3 L336.7 213.0 L337.3 210.8 L337.8 208.8 L338.4 207.0 L339.0 205.6 L339.6 204.4 L340.3 203.4 L341.0 202.6 L341.8 201.8 L342.5 201.0 L343.3 200.3 L344.1 199.5 L344.9 198.7 M325.1 318.3 L325.2 313.4 L325.4 308.5 L325.7 303.6 L326.0 298.8 L326.4 294.0 L326.6 289.3 L326.7 284.7 L326.6 280.2 L326.6 275.7 L326.5 271.3 L326.6 267.0 L326.6 262.8 L326.8 258.6 L326.9 254.6 L327.0 250.7 L327.1 246.9 L327.1 243.2 L327.2 239.7 L327.4 236.3 L327.5 233.1 L327.7 230.1 L328.0 227.3 L328.2 224.6 L328.5 222.0 L328.8 219.4 L329.0 217.0 L329.2 214.7 L329.4 212.6 L329.6 210.7 L329.8 209.1 L330.0 207.7 L330.3 206.7 L330.6 205.8 L331.0 205.1 L331.3 204.5 L331.7 203.9 L332.1 203.2 L332.6 202.5 L333.0 201.9 M323.3 318.7 L323.4 313.8 L323.5 308.9 L323.7 304.1 L324.0 299.3 L324.2 294.6 L324.3 290.0 L324.3 285.4 L324.1 280.9 L323.9 276.5 L323.7 272.2 L323.5 267.9 L323.4 263.7 L323.3 259.6 L323.2 255.7 L323.1 251.8 L322.9 248.0 L322.8 244.4 L322.6 241.0 L322.4 237.7 L322.3 234.5 L322.2 231.6 L322.1 228.8 L322.1 226.1 L322.0 223.6 L321.9 221.1 L321.8 218.8 L321.7 216.5 L321.5 214.5 L321.3 212.6 L321.2 211.1 L321.1 209.9 L321.0 209.0 L320.9 208.3 L320.9 207.7 L320.9 207.2 L320.9 206.7 L321.0 206.1 L321.0 205.6 L321.1 205.0 M321.5 319.0 L321.5 314.2 L321.6 309.4 L321.8 304.6 L322.0 299.9 L322.1 295.2 L322.1 290.6 L321.9 286.1 L321.6 281.7 L321.2 277.3 L320.9 273.0 L320.5 268.8 L320.2 264.7 L319.9 260.6 L319.6 256.7 L319.3 252.9 L318.9 249.2 L318.4 245.6 L318.0 242.2 L317.5 239.0 L317.1 235.9 L316.7 233.0 L316.3 230.3 L316.0 227.7 L315.6 225.2 L315.1 222.7 L314.7 220.4 L314.2 218.3 L313.7 216.3 L313.1 214.6 L312.6 213.1 L312.2 212.0 L311.7 211.2 L311.3 210.7 L310.9 210.2 L310.5 209.9 L310.2 209.5 L309.9 209.0 L309.5 208.6 L309.2 208.1 M319.7 319.2 L319.7 314.4 L319.7 309.7 L319.8 305.0 L319.9 300.3 L320.0 295.7 L319.9 291.2 L319.6 286.7 L319.1 282.3 L318.6 278.0 L318.0 273.8 L317.5 269.6 L317.0 265.6 L316.6 261.6 L316.0 257.7 L315.5 253.9 L314.8 250.3 L314.1 246.8 L313.4 243.5 L312.7 240.3 L312.0 237.3 L311.3 234.4 L310.6 231.7 L309.9 229.2 L309.2 226.7 L308.4 224.4 L307.6 222.1 L306.8 220.0 L305.9 218.1 L305.1 216.5 L304.2 215.1 L303.4 214.1 L302.6 213.4 L301.8 213.0 L301.1 212.7 L300.3 212.5 L299.6 212.2 L298.9 211.9 L298.2 211.6 L297.5 211.2 M318.0 319.4 L317.9 314.7 L317.9 310.0 L317.9 305.3 L317.9 300.7 L317.9 296.1 L317.7 291.7 L317.3 287.3 L316.7 282.9 L316.0 278.7 L315.3 274.5 L314.6 270.4 L313.9 266.4 L313.3 262.5 L312.5 258.6 L311.7 254.9 L310.9 251.4 L309.9 247.9 L309.0 244.6 L308.0 241.5 L307.0 238.6 L306.0 235.8 L305.0 233.1 L304.0 230.6 L303.0 228.2 L301.9 225.9 L300.8 223.7 L299.6 221.7 L298.4 219.9 L297.2 218.3 L296.0 217.0 L294.8 216.1 L293.7 215.6 L292.6 215.3 L291.5 215.2 L290.4 215.1 L289.3 214.9 L288.2 214.7 L287.2 214.5 L286.1 214.2 M316.2 319.5 L316.1 314.8 L316.1 310.2 L316.0 305.6 L316.0 301.0 L315.9 296.5 L315.6 292.1 L315.0 287.8 L314.3 283.5 L313.5 279.3 L312.6 275.2 L311.8 271.2 L310.9 267.2 L310.1 263.3 L309.1 259.5 L308.1 255.9 L307.0 252.4 L305.9 249.0 L304.7 245.8 L303.4 242.7 L302.2 239.8 L300.9 237.1 L299.6 234.5 L298.3 232.0 L297.0 229.7 L295.6 227.4 L294.1 225.3 L292.6 223.3 L291.1 221.6 L289.6 220.1 L288.0 218.9 L286.5 218.1 L285.1 217.7 L283.6 217.5 L282.1 217.5 L280.7 217.5 L279.3 217.5 L277.9 217.4 L276.5 217.3 L275.1 217.2 M314.6 319.5 L314.4 314.9 L314.3 310.4 L314.2 305.8 L314.1 301.3 L313.9 296.8 L313.5 292.5 L312.8 288.2 L312.0 284.0 L311.0 279.9 L310.0 275.8 L309.0 271.8 L308.0 267.9 L307.0 264.1 L305.9 260.4 L304.7 256.8 L303.4 253.3 L302.0 250.0 L300.5 246.8 L299.0 243.8 L297.5 241.0 L296.0 238.3 L294.4 235.8 L292.8 233.4 L291.2 231.1 L289.5 228.9 L287.7 226.8 L285.9 224.9 L284.1 223.2 L282.2 221.8 L280.4 220.7 L278.6 220.0 L276.8 219.7 L275.0 219.7 L273.2 219.8 L271.4 219.9 L269.7 220.0 L268.0 220.0 L266.2 220.0 L264.5 220.0 M313.0 319.5 L312.8 315.0 L312.6 310.5 L312.5 306.0 L312.3 301.5 L312.0 297.1 L311.5 292.8 L310.8 288.6 L309.8 284.4 L308.7 280.4 L307.6 276.4 L306.4 272.4 L305.3 268.6 L304.0 264.8 L302.8 261.1 L301.4 257.6 L299.9 254.2 L298.2 250.9 L296.6 247.8 L294.9 244.9 L293.1 242.1 L291.3 239.5 L289.5 237.0 L287.6 234.6 L285.7 232.4 L283.7 230.2 L281.6 228.2 L279.6 226.3 L277.4 224.7 L275.3 223.4 L273.1 222.4 L271.0 221.8 L268.9 221.7 L266.8 221.7 L264.7 221.9 L262.6 222.2 L260.6 222.4 L258.5 222.5 L256.5 222.6 L254.4 222.6 M311.5 319.4 L311.2 314.9 L311.0 310.5 L310.8 306.0 L310.6 301.6 L310.2 297.3 L309.7 293.0 L308.8 288.9 L307.7 284.8 L306.5 280.8 L305.2 276.9 L304.0 273.0 L302.6 269.2 L301.3 265.4 L299.8 261.8 L298.2 258.3 L296.5 255.0 L294.7 251.8 L292.9 248.7 L290.9 245.8 L288.9 243.1 L286.9 240.5 L284.8 238.1 L282.7 235.8 L280.5 233.6 L278.2 231.5 L275.9 229.5 L273.6 227.7 L271.2 226.2 L268.7 224.9 L266.3 224.0 L263.9 223.5 L261.5 223.5 L259.1 223.6 L256.7 224.0 L254.3 224.3 L252.0 224.6 L249.6 224.8 L247.3 225.0 L244.9 225.1 M310.0 319.2 L309.8 314.8 L309.5 310.4 L309.3 306.1 L309.0 301.7 L308.6 297.4 L307.9 293.2 L307.0 289.1 L305.8 285.1 L304.5 281.1 L303.1 277.3 L301.7 273.4 L300.2 269.7 L298.7 266.0 L297.1 262.4 L295.3 259.0 L293.5 255.7 L291.5 252.6 L289.4 249.6 L287.2 246.7 L285.0 244.0 L282.8 241.5 L280.5 239.1 L278.1 236.9 L275.7 234.7 L273.2 232.7 L270.6 230.7 L268.0 229.0 L265.3 227.5 L262.6 226.3 L259.9 225.5 L257.3 225.1 L254.6 225.1 L251.9 225.4 L249.3 225.8 L246.6 226.3 L244.0 226.7 L241.4 227.0 L238.7 227.2 L236.1 227.5 M308.7 319.0 L308.4 314.6 L308.1 310.3 L307.8 306.0 L307.5 301.7 L307.0 297.5 L306.3 293.3 L305.3 289.3 L304.0 285.3 L302.6 281.4 L301.1 277.6 L299.5 273.8 L298.0 270.1 L296.3 266.5 L294.6 263.0 L292.7 259.6 L290.6 256.3 L288.5 253.3 L286.2 250.3 L283.9 247.5 L281.5 244.9 L279.0 242.4 L276.5 240.1 L273.9 237.8 L271.3 235.7 L268.5 233.7 L265.7 231.8 L262.9 230.1 L260.0 228.7 L257.1 227.6 L254.1 226.8 L251.2 226.5 L248.3 226.6 L245.4 227.0 L242.5 227.6 L239.6 228.1 L236.7 228.6 L233.8 229.0 L230.9 229.3 L228.1 229.6 M307.5 318.7 L307.2 314.4 L306.8 310.1 L306.5 305.9 L306.1 301.6 L305.6 297.4 L304.8 293.3 L303.7 289.3 L302.4 285.4 L300.8 281.6 L299.2 277.8 L297.6 274.1 L295.9 270.4 L294.2 266.9 L292.3 263.4 L290.2 260.1 L288.1 256.9 L285.8 253.8 L283.3 250.9 L280.8 248.2 L278.3 245.6 L275.6 243.2 L272.9 240.9 L270.1 238.7 L267.3 236.6 L264.3 234.7 L261.3 232.8 L258.3 231.2 L255.2 229.8 L252.0 228.7 L248.9 228.1 L245.7 227.8 L242.6 228.0 L239.5 228.5 L236.3 229.1 L233.2 229.7 L230.1 230.3 L227.0 230.7 L223.9 231.1 L220.8 231.5 M306.4 318.3 L306.0 314.1 L305.7 309.9 L305.3 305.7 L304.9 301.5 L304.3 297.4 L303.5 293.3 L302.3 289.4 L300.9 285.5 L299.3 281.7 L297.6 278.0 L295.9 274.3 L294.1 270.7 L292.2 267.2 L290.3 263.8 L288.1 260.5 L285.8 257.3 L283.4 254.3 L280.8 251.5 L278.1 248.8 L275.4 246.2 L272.6 243.8 L269.7 241.6 L266.8 239.4 L263.8 237.4 L260.6 235.5 L257.5 233.7 L254.2 232.1 L250.9 230.8 L247.6 229.7 L244.2 229.1 L240.9 229.0 L237.6 229.2 L234.2 229.8 L230.9 230.5 L227.6 231.2 L224.3 231.8 L221.0 232.3 L217.7 232.8 L214.4 233.2 M305.5 317.9 L305.1 313.7 L304.7 309.6 L304.3 305.4 L303.8 301.3 L303.2 297.2 L302.3 293.2 L301.1 289.3 L299.6 285.5 L297.9 281.8 L296.2 278.1 L294.4 274.4 L292.5 270.9 L290.6 267.4 L288.5 264.0 L286.2 260.8 L283.8 257.7 L281.3 254.7 L278.6 251.9 L275.8 249.3 L273.0 246.7 L270.0 244.4 L267.0 242.2 L263.9 240.1 L260.7 238.1 L257.5 236.2 L254.1 234.4 L250.7 232.9 L247.2 231.6 L243.8 230.6 L240.2 230.0 L236.7 229.9 L233.2 230.3 L229.7 230.9 L226.3 231.6 L222.8 232.4 L219.3 233.1 L215.8 233.7 L212.3 234.2 L208.8 234.7 M304.6 317.4 L304.2 313.3 L303.8 309.2 L303.4 305.1 L302.9 301.0 L302.3 297.0 L301.3 293.0 L300.1 289.2 L298.5 285.4 L296.8 281.7 L295.0 278.1 L293.1 274.5 L291.2 271.0 L289.2 267.5 L287.0 264.2 L284.7 261.0 L282.2 257.9 L279.6 255.0 L276.8 252.2 L273.9 249.6 L270.9 247.1 L267.9 244.8 L264.7 242.6 L261.5 240.6 L258.2 238.6 L254.8 236.7 L251.3 235.0 L247.8 233.5 L244.2 232.2 L240.6 231.3 L236.9 230.8 L233.3 230.7 L229.7 231.1 L226.0 231.8 L222.4 232.6 L218.8 233.4 L215.1 234.2 L211.5 234.8 L207.9 235.4 L204.3 235.9 M303.9 316.9 L303.5 312.8 L303.1 308.8 L302.6 304.7 L302.2 300.7 L301.5 296.7 L300.5 292.8 L299.2 288.9 L297.6 285.2 L295.9 281.6 L294.0 278.0 L292.1 274.4 L290.2 270.9 L288.1 267.5 L285.9 264.2 L283.5 261.1 L280.9 258.0 L278.2 255.2 L275.3 252.4 L272.4 249.8 L269.3 247.4 L266.2 245.1 L263.0 243.0 L259.6 240.9 L256.2 239.0 L252.7 237.2 L249.2 235.5 L245.5 234.0 L241.8 232.7 L238.1 231.8 L234.3 231.4 L230.6 231.3 L226.9 231.8 L223.1 232.5 L219.4 233.4 L215.6 234.2 L211.9 235.0 L208.1 235.7 L204.4 236.3 L200.7 236.8 M303.4 316.3 L303.0 312.3 L302.5 308.3 L302.1 304.3 L301.6 300.3 L300.9 296.3 L299.9 292.4 L298.6 288.7 L297.0 285.0 L295.2 281.4 L293.3 277.8 L291.4 274.3 L289.4 270.9 L287.2 267.5 L285.0 264.2 L282.6 261.1 L279.9 258.1 L277.2 255.2 L274.3 252.5 L271.3 250.0 L268.1 247.6 L264.9 245.3 L261.7 243.2 L258.3 241.1 L254.8 239.2 L251.2 237.4 L247.6 235.8 L243.9 234.3 L240.1 233.1 L236.3 232.2 L232.5 231.8 L228.6 231.8 L224.8 232.3 L221.0 233.0 L217.2 233.9 L213.4 234.8 L209.5 235.6 L205.7 236.3 L201.9 236.9 L198.1 237.5 M303.0 315.7 L302.6 311.7 L302.1 307.7 L301.7 303.8 L301.2 299.8 L300.4 295.9 L299.5 292.0 L298.1 288.3 L296.5 284.7 L294.7 281.1 L292.8 277.6 L290.9 274.1 L288.8 270.7 L286.7 267.3 L284.4 264.1 L282.0 261.0 L279.3 258.0 L276.5 255.2 L273.6 252.5 L270.6 250.0 L267.4 247.6 L264.2 245.3 L260.9 243.2 L257.4 241.2 L253.9 239.3 L250.3 237.6 L246.6 235.9 L242.9 234.4 L239.1 233.3 L235.2 232.4 L231.3 232.0 L227.5 232.0 L223.6 232.5 L219.7 233.3 L215.9 234.2 L212.0 235.2 L208.1 236.0 L204.3 236.7 L200.4 237.3 L196.5 237.9 M302.8 315.0 L302.3 311.1 L301.9 307.2 L301.4 303.2 L300.9 299.3 L300.2 295.4 L299.2 291.6 L297.9 287.9 L296.3 284.3 L294.5 280.7 L292.6 277.2 L290.6 273.8 L288.6 270.4 L286.5 267.1 L284.2 263.9 L281.7 260.8 L279.1 257.8 L276.3 255.0 L273.4 252.4 L270.3 249.9 L267.1 247.5 L263.9 245.3 L260.6 243.2 L257.1 241.2 L253.6 239.3 L250.0 237.5 L246.3 235.9 L242.5 234.5 L238.7 233.3 L234.8 232.5 L231.0 232.1 L227.1 232.1 L223.2 232.6 L219.3 233.4 L215.4 234.3 L211.5 235.3 L207.7 236.1 L203.8 236.8 L199.9 237.5 L196.0 238.1 M302.8 314.4 L302.3 310.5 L301.8 306.5 L301.3 302.6 L300.8 298.6 L300.1 294.7 L299.1 290.8 L297.8 287.1 L296.1 283.4 L294.3 279.9 L292.4 276.3 L290.5 272.8 L288.4 269.3 L286.3 265.9 L284.0 262.6 L281.5 259.5 L278.9 256.5 L276.1 253.6 L273.1 250.8 L270.1 248.2 L266.9 245.8 L263.7 243.4 L260.3 241.2 L256.9 239.1 L253.4 237.2 L249.8 235.3 L246.1 233.5 L242.3 232.0 L238.5 230.7 L234.6 229.7 L230.7 229.2 L226.8 229.1 L222.9 229.5 L219.0 230.2 L215.0 231.0 L211.1 231.8 L207.2 232.5 L203.3 233.1 L199.4 233.6 L195.5 234.1 M302.9 313.8 L302.4 309.8 L301.9 305.9 L301.4 301.9 L300.9 297.9 L300.2 293.9 L299.2 290.1 L297.8 286.3 L296.2 282.5 L294.4 278.9 L292.5 275.3 L290.6 271.7 L288.5 268.2 L286.4 264.7 L284.1 261.3 L281.7 258.1 L279.1 255.0 L276.3 252.0 L273.3 249.2 L270.3 246.5 L267.2 243.9 L263.9 241.5 L260.6 239.2 L257.2 237.0 L253.7 234.9 L250.1 232.9 L246.5 231.0 L242.7 229.3 L238.9 227.9 L235.0 226.9 L231.2 226.2 L227.3 226.0 L223.4 226.3 L219.5 226.8 L215.6 227.5 L211.6 228.2 L207.8 228.7 L203.9 229.2 L200.0 229.6 L196.1 229.9 M303.1 313.1 L302.6 309.2 L302.1 305.2 L301.7 301.1 L301.1 297.1 L300.4 293.1 L299.5 289.2 L298.1 285.4 L296.5 281.6 L294.7 277.9 L292.9 274.2 L290.9 270.5 L288.9 266.9 L286.8 263.4 L284.6 260.0 L282.2 256.6 L279.6 253.4 L276.8 250.4 L273.9 247.4 L270.9 244.6 L267.9 242.0 L264.7 239.4 L261.4 237.0 L258.1 234.7 L254.6 232.5 L251.1 230.4 L247.5 228.4 L243.8 226.6 L240.0 225.1 L236.2 223.9 L232.4 223.1 L228.5 222.7 L224.7 222.9 L220.8 223.2 L216.9 223.8 L213.1 224.3 L209.2 224.7 L205.4 225.0 L201.5 225.3 L197.7 225.5 M303.5 312.5 L303.0 308.5 L302.6 304.4 L302.1 300.4 L301.6 296.3 L300.9 292.3 L299.9 288.3 L298.6 284.4 L297.0 280.6 L295.3 276.8 L293.4 273.1 L291.5 269.3 L289.6 265.7 L287.5 262.1 L285.3 258.5 L283.0 255.1 L280.4 251.8 L277.8 248.7 L274.9 245.6 L272.0 242.7 L269.0 240.0 L265.9 237.3 L262.7 234.8 L259.4 232.4 L256.1 230.0 L252.6 227.8 L249.1 225.7 L245.5 223.8 L241.8 222.1 L238.1 220.8 L234.4 219.8 L230.6 219.4 L226.8 219.3 L223.0 219.6 L219.2 219.9 L215.4 220.3 L211.6 220.6 L207.8 220.7 L204.1 220.8 L200.3 220.9 M304.1 311.8 L303.6 307.7 L303.1 303.7 L302.7 299.6 L302.2 295.5 L301.5 291.4 L300.6 287.4 L299.3 283.4 L297.8 279.5 L296.1 275.7 L294.3 271.9 L292.4 268.1 L290.5 264.3 L288.5 260.6 L286.4 257.0 L284.1 253.5 L281.7 250.2 L279.1 246.9 L276.3 243.8 L273.5 240.8 L270.6 237.9 L267.6 235.1 L264.5 232.5 L261.3 229.9 L258.1 227.5 L254.8 225.1 L251.4 222.9 L247.9 220.8 L244.3 219.1 L240.7 217.6 L237.0 216.5 L233.4 215.9 L229.7 215.7 L226.0 215.8 L222.3 216.0 L218.6 216.2 L214.9 216.3 L211.3 216.3 L207.6 216.2 L203.9 216.2 M304.8 311.1 L304.3 307.0 L303.9 302.9 L303.4 298.8 L303.0 294.7 L302.3 290.5 L301.4 286.4 L300.2 282.4 L298.7 278.5 L297.1 274.6 L295.3 270.7 L293.6 266.8 L291.7 263.0 L289.8 259.2 L287.8 255.5 L285.6 251.9 L283.2 248.4 L280.7 245.1 L278.1 241.8 L275.4 238.7 L272.6 235.7 L269.7 232.9 L266.8 230.1 L263.8 227.5 L260.7 224.9 L257.5 222.4 L254.2 220.1 L250.8 217.9 L247.4 216.0 L244.0 214.3 L240.4 213.1 L236.9 212.3 L233.3 212.0 L229.8 211.9 L226.2 211.9 L222.7 212.0 L219.1 211.9 L215.6 211.8 L212.1 211.6 L208.6 211.3 M305.7 310.4 L305.2 306.3 L304.8 302.1 L304.3 298.0 L303.9 293.8 L303.3 289.6 L302.5 285.5 L301.3 281.4 L299.9 277.4 L298.3 273.4 L296.6 269.4 L294.9 265.5 L293.2 261.6 L291.4 257.7 L289.5 253.9 L287.4 250.3 L285.1 246.7 L282.7 243.2 L280.2 239.9 L277.7 236.7 L275.0 233.6 L272.3 230.6 L269.5 227.7 L266.7 225.0 L263.7 222.3 L260.7 219.7 L257.6 217.2 L254.4 214.9 L251.2 212.8 L247.9 211.1 L244.5 209.7 L241.1 208.8 L237.7 208.2 L234.3 208.0 L230.9 207.8 L227.5 207.7 L224.2 207.5 L220.8 207.2 L217.5 206.8 L214.1 206.4 M306.7 309.7 L306.2 305.5 L305.8 301.4 L305.4 297.1 L305.0 292.9 L304.4 288.7 L303.6 284.5 L302.5 280.4 L301.2 276.3 L299.7 272.2 L298.1 268.2 L296.5 264.1 L294.9 260.2 L293.2 256.2 L291.4 252.4 L289.4 248.6 L287.3 244.9 L285.1 241.4 L282.7 237.9 L280.3 234.6 L277.8 231.4 L275.3 228.3 L272.7 225.3 L270.0 222.4 L267.3 219.6 L264.4 216.9 L261.5 214.3 L258.6 211.9 L255.5 209.7 L252.4 207.8 L249.2 206.3 L246.1 205.2 L242.8 204.5 L239.6 204.0 L236.4 203.7 L233.2 203.4 L230.0 203.0 L226.9 202.5 L223.7 202.0 L220.6 201.4 M307.8 309.0 L307.4 304.8 L307.0 300.6 L306.6 296.3 L306.2 292.0 L305.7 287.8 L305.0 283.5 L304.0 279.3 L302.7 275.1 L301.3 271.0 L299.8 266.9 L298.4 262.8 L296.9 258.7 L295.3 254.7 L293.6 250.8 L291.8 246.9 L289.8 243.1 L287.8 239.5 L285.6 235.9 L283.3 232.5 L281.0 229.2 L278.7 226.0 L276.3 222.9 L273.8 219.9 L271.3 217.0 L268.7 214.2 L266.0 211.5 L263.2 208.9 L260.4 206.6 L257.5 204.5 L254.6 202.9 L251.6 201.6 L248.6 200.7 L245.6 200.1 L242.6 199.6 L239.6 199.1 L236.7 198.6 L233.8 197.9 L230.8 197.2 L227.9 196.5 M309.1 308.3 L308.6 304.1 L308.2 299.8 L307.9 295.5 L307.6 291.2 L307.2 286.8 L306.5 282.5 L305.6 278.3 L304.4 274.0 L303.1 269.8 L301.8 265.6 L300.4 261.4 L299.0 257.3 L297.6 253.2 L296.1 249.2 L294.4 245.2 L292.6 241.4 L290.7 237.6 L288.7 234.0 L286.7 230.4 L284.6 227.0 L282.4 223.7 L280.3 220.5 L278.0 217.4 L275.7 214.4 L273.4 211.5 L270.9 208.6 L268.4 205.9 L265.8 203.5 L263.2 201.3 L260.5 199.5 L257.8 198.1 L255.0 197.0 L252.2 196.2 L249.5 195.6 L246.8 194.9 L244.1 194.1 L241.4 193.3 L238.7 192.5 L236.1 191.6 M310.4 307.7 L310.0 303.4 L309.7 299.0 L309.4 294.7 L309.1 290.3 L308.7 285.9 L308.2 281.6 L307.3 277.2 L306.2 272.9 L305.1 268.6 L303.8 264.4 L302.6 260.1 L301.4 255.9 L300.1 251.7 L298.7 247.6 L297.3 243.6 L295.6 239.6 L293.9 235.8 L292.2 232.0 L290.3 228.4 L288.4 224.9 L286.5 221.5 L284.6 218.2 L282.6 215.0 L280.6 211.9 L278.5 208.8 L276.3 205.9 L274.0 203.1 L271.7 200.5 L269.3 198.2 L266.9 196.2 L264.5 194.6 L262.0 193.4 L259.5 192.4 L257.0 191.6 L254.5 190.7 L252.1 189.8 L249.7 188.8 L247.3 187.8 L244.9 186.7 M311.9 307.0 L311.5 302.7 L311.2 298.3 L310.9 293.9 L310.7 289.5 L310.4 285.0 L309.9 280.6 L309.2 276.2 L308.2 271.8 L307.2 267.5 L306.1 263.1 L305.0 258.8 L303.9 254.5 L302.8 250.3 L301.6 246.1 L300.3 242.0 L298.9 237.9 L297.4 234.0 L295.8 230.1 L294.2 226.4 L292.6 222.8 L291.0 219.3 L289.3 215.9 L287.6 212.6 L285.8 209.4 L284.0 206.2 L282.1 203.2 L280.1 200.3 L278.1 197.6 L276.0 195.1 L273.8 193.0 L271.7 191.2 L269.5 189.9 L267.2 188.7 L265.1 187.7 L262.9 186.7 L260.7 185.6 L258.6 184.4 L256.5 183.2 L254.5 182.0 M313.4 306.4 L313.1 302.0 L312.8 297.6 L312.6 293.1 L312.4 288.6 L312.2 284.2 L311.8 279.7 L311.2 275.2 L310.4 270.8 L309.4 266.3 L308.5 261.9 L307.6 257.5 L306.6 253.2 L305.7 248.8 L304.7 244.6 L303.6 240.4 L302.4 236.3 L301.1 232.2 L299.8 228.3 L298.4 224.5 L297.0 220.8 L295.6 217.2 L294.2 213.7 L292.8 210.3 L291.3 207.0 L289.8 203.7 L288.2 200.6 L286.5 197.6 L284.8 194.7 L283.0 192.2 L281.2 189.9 L279.3 188.0 L277.4 186.4 L275.5 185.1 L273.6 183.9 L271.8 182.7 L269.9 181.5 L268.1 180.2 L266.4 178.8 L264.6 177.4 M315.0 305.8 L314.7 301.4 L314.5 296.9 L314.3 292.4 L314.3 287.9 L314.1 283.3 L313.8 278.8 L313.3 274.2 L312.6 269.7 L311.8 265.2 L311.0 260.8 L310.2 256.3 L309.5 251.9 L308.7 247.5 L307.9 243.1 L307.0 238.9 L306.0 234.7 L305.0 230.5 L303.9 226.5 L302.8 222.6 L301.7 218.8 L300.6 215.2 L299.5 211.6 L298.3 208.1 L297.1 204.7 L295.9 201.4 L294.6 198.1 L293.3 195.0 L291.9 192.1 L290.4 189.4 L288.9 187.0 L287.3 184.9 L285.7 183.2 L284.2 181.7 L282.6 180.3 L281.1 179.0 L279.6 177.5 L278.1 176.1 L276.7 174.6 L275.3 173.0 M316.7 305.3 L316.4 300.8 L316.2 296.3 L316.2 291.7 L316.1 287.1 L316.1 282.5 L315.9 277.9 L315.5 273.3 L314.9 268.7 L314.3 264.2 L313.6 259.6 L313.0 255.1 L312.5 250.6 L311.9 246.2 L311.3 241.7 L310.6 237.4 L309.9 233.1 L309.1 228.9 L308.2 224.8 L307.4 220.9 L306.5 217.0 L305.7 213.2 L304.9 209.6 L304.1 206.0 L303.2 202.5 L302.3 199.1 L301.3 195.8 L300.3 192.6 L299.2 189.5 L298.1 186.7 L296.9 184.2 L295.7 182.0 L294.4 180.1 L293.2 178.4 L292.0 176.9 L290.8 175.4 L289.6 173.8 L288.5 172.2 L287.4 170.6 L286.3 168.9 M318.4 304.8 L318.2 300.2 L318.1 295.6 L318.0 291.0 L318.1 286.4 L318.1 281.7 L318.0 277.1 L317.7 272.4 L317.3 267.8 L316.8 263.2 L316.4 258.6 L315.9 254.0 L315.6 249.4 L315.2 244.9 L314.8 240.4 L314.3 236.0 L313.8 231.7 L313.2 227.4 L312.7 223.3 L312.1 219.2 L311.5 215.3 L311.0 211.4 L310.5 207.7 L310.0 204.1 L309.4 200.5 L308.9 197.0 L308.2 193.6 L307.5 190.3 L306.8 187.2 L306.0 184.2 L305.2 181.6 L304.3 179.3 L303.4 177.2 L302.5 175.4 L301.6 173.7 L300.8 172.0 L300.0 170.3 L299.2 168.6 L298.5 166.8 L297.8 165.0 M320.2 304.3 L320.0 299.7 L319.9 295.1 L320.0 290.4 L320.1 285.7 L320.2 281.0 L320.2 276.3 L320.1 271.6 L319.8 266.9 L319.5 262.2 L319.1 257.6 L318.9 252.9 L318.7 248.3 L318.5 243.7 L318.3 239.2 L318.1 234.7 L317.8 230.3 L317.5 226.0 L317.2 221.8 L316.9 217.6 L316.7 213.6 L316.4 209.7 L316.2 206.0 L316.0 202.3 L315.8 198.6 L315.6 195.1 L315.3 191.6 L315.0 188.2 L314.6 185.0 L314.1 182.0 L313.6 179.2 L313.1 176.7 L312.6 174.6 L312.0 172.6 L311.5 170.8 L311.0 168.9 L310.6 167.1 L310.2 165.2 L309.9 163.3 L309.5 161.3 M322.0 303.9 L321.8 299.2 L321.8 294.6 L321.9 289.8 L322.1 285.1 L322.3 280.4 L322.4 275.6 L322.4 270.9 L322.3 266.1 L322.1 261.4 L322.0 256.7 L321.9 252.0 L321.9 247.3 L321.9 242.7 L322.0 238.1 L322.0 233.6 L321.9 229.1 L321.9 224.7 L321.8 220.4 L321.8 216.2 L321.9 212.1 L321.9 208.2 L322.1 204.4 L322.2 200.6 L322.3 196.9 L322.4 193.3 L322.5 189.8 L322.5 186.3 L322.4 183.0 L322.3 179.9 L322.2 177.1 L322.0 174.5 L321.9 172.2 L321.7 170.0 L321.5 168.1 L321.4 166.1 L321.4 164.1 L321.4 162.1 L321.4 160.1 L321.4 158.0 M323.8 303.5 L323.7 298.8 L323.7 294.1 L323.9 289.3 L324.2 284.6 L324.5 279.8 L324.7 275.0 L324.8 270.2 L324.8 265.4 L324.8 260.6 L324.8 255.8 L325.0 251.1 L325.1 246.3 L325.4 241.7 L325.6 237.0 L325.8 232.5 L326.1 228.0 L326.3 223.5 L326.5 219.2 L326.8 214.9 L327.1 210.8 L327.5 206.8 L327.9 202.9 L328.4 199.1 L328.8 195.4 L329.3 191.8 L329.7 188.2 L330.0 184.6 L330.3 181.3 L330.6 178.1 L330.8 175.1 L331.0 172.4 L331.2 170.0 L331.4 167.8 L331.7 165.6 L331.9 163.6 L332.2 161.4 L332.6 159.3 L333.0 157.2 L333.4 155.0 M325.6 303.2 L325.5 298.5 L325.6 293.7 L325.8 288.9 L326.2 284.1 L326.6 279.2 L327.0 274.4 L327.2 269.6 L327.3 264.7 L327.5 259.9 L327.7 255.1 L328.0 250.3 L328.4 245.5 L328.8 240.8 L329.3 236.1 L329.7 231.5 L330.2 226.9 L330.7 222.5 L331.2 218.1 L331.7 213.8 L332.3 209.6 L333.0 205.6 L333.8 201.7 L334.6 197.8 L335.3 194.1 L336.1 190.4 L336.9 186.8 L337.6 183.2 L338.2 179.8 L338.9 176.5 L339.5 173.5 L340.0 170.7 L340.6 168.1 L341.1 165.8 L341.7 163.5 L342.4 161.3 L343.1 159.1 L343.8 156.9 L344.6 154.6 L345.4 152.4 M327.3 303.0 L327.4 298.1 L327.5 293.3 L327.8 288.5 L328.2 283.6 L328.7 278.8 L329.2 273.9 L329.6 269.0 L329.9 264.1 L330.2 259.2 L330.5 254.4 L331.0 249.6 L331.6 244.8 L332.2 240.0 L332.9 235.3 L333.6 230.7 L334.3 226.1 L335.0 221.5 L335.8 217.1 L336.6 212.8 L337.5 208.6 L338.5 204.6 L339.6 200.6 L340.7 196.7 L341.8 193.0 L342.9 189.2 L344.0 185.6 L345.1 182.0 L346.1 178.5 L347.1 175.2 L348.0 172.1 L348.9 169.2 L349.8 166.6 L350.8 164.1 L351.8 161.7 L352.8 159.4 L353.9 157.1 L355.0 154.8 L356.1 152.5 L357.3 150.1 M329.1 302.8 L329.2 297.9 L329.3 293.0 L329.7 288.2 L330.2 283.3 L330.8 278.4 L331.4 273.5 L331.9 268.5 L332.3 263.6 L332.8 258.7 L333.3 253.8 L334.0 249.0 L334.8 244.1 L335.6 239.4 L336.5 234.6 L337.4 230.0 L338.3 225.3 L339.3 220.8 L340.3 216.3 L341.4 212.0 L342.6 207.8 L343.9 203.7 L345.3 199.7 L346.7 195.8 L348.2 192.0 L349.6 188.3 L351.1 184.6 L352.4 181.0 L353.8 177.5 L355.1 174.1 L356.4 171.0 L357.7 168.0 L359.0 165.3 L360.3 162.7 L361.6 160.3 L363.0 157.9 L364.4 155.5 L365.9 153.1 L367.4 150.7 L369.0 148.3 M330.8 302.6 L330.9 297.7 L331.2 292.8 L331.6 287.9 L332.2 283.0 L332.9 278.1 L333.5 273.1 L334.2 268.2 L334.8 263.2 L335.4 258.3 L336.1 253.3 L336.9 248.5 L337.8 243.6 L338.9 238.8 L340.0 234.1 L341.1 229.4 L342.3 224.7 L343.5 220.2 L344.8 215.7 L346.2 211.3 L347.6 207.1 L349.2 203.0 L350.9 199.0 L352.6 195.2 L354.4 191.4 L356.2 187.6 L357.9 183.9 L359.6 180.3 L361.3 176.7 L363.0 173.3 L364.6 170.1 L366.2 167.1 L367.9 164.3 L369.5 161.7 L371.2 159.1 L373.0 156.7 L374.8 154.2 L376.6 151.7 L378.5 149.3 L380.4 146.8 M332.5 302.5 L332.6 297.6 L332.9 292.7 L333.4 287.7 L334.1 282.8 L334.8 277.8 L335.6 272.9 L336.4 267.9 L337.1 262.9 L337.9 257.9 L338.7 253.0 L339.7 248.1 L340.8 243.2 L342.1 238.4 L343.4 233.7 L344.7 228.9 L346.1 224.3 L347.6 219.7 L349.1 215.2 L350.7 210.9 L352.5 206.6 L354.4 202.5 L356.3 198.6 L358.3 194.7 L360.4 190.9 L362.5 187.1 L364.6 183.4 L366.6 179.8 L368.6 176.3 L370.6 172.8 L372.6 169.6 L374.5 166.5 L376.5 163.7 L378.5 160.9 L380.6 158.3 L382.7 155.8 L384.8 153.3 L387.0 150.8 L389.2 148.3 L391.5 145.8 M334.0 302.5 L334.3 297.5 L334.6 292.6 L335.2 287.6 L335.9 282.6 L336.8 277.7 L337.6 272.7 L338.5 267.7 L339.4 262.7 L340.3 257.7 L341.3 252.7 L342.4 247.8 L343.7 243.0 L345.1 238.1 L346.6 233.4 L348.2 228.7 L349.8 224.0 L351.5 219.4 L353.3 214.9 L355.1 210.6 L357.1 206.3 L359.3 202.3 L361.5 198.3 L363.8 194.4 L366.2 190.6 L368.5 186.9 L370.9 183.2 L373.3 179.6 L375.6 176.1 L377.9 172.6 L380.2 169.3 L382.5 166.2 L384.8 163.3 L387.1 160.6 L389.5 157.9 L391.9 155.3 L394.4 152.8 L396.9 150.2 L399.5 147.7 L402.1 145.2 M335.5 302.6 L335.8 297.6 L336.2 292.5 L336.8 287.6 L337.6 282.6 L338.6 277.6 L339.6 272.6 L340.5 267.6 L341.5 262.5 L342.6 257.5 L343.7 252.6 L345.0 247.7 L346.5 242.8 L348.1 238.0 L349.7 233.2 L351.5 228.5 L353.3 223.9 L355.2 219.3 L357.2 214.8 L359.3 210.4 L361.6 206.2 L363.9 202.2 L366.4 198.2 L369.0 194.4 L371.6 190.6 L374.3 186.9 L377.0 183.3 L379.6 179.7 L382.2 176.1 L384.8 172.7 L387.4 169.4 L390.0 166.3 L392.6 163.3 L395.3 160.5 L398.0 157.9 L400.7 155.2 L403.6 152.6 L406.4 150.1 L409.3 147.5 L412.2 145.0 M336.9 302.7 L337.3 297.6 L337.7 292.6 L338.4 287.6 L339.3 282.6 L340.3 277.6 L341.4 272.6 L342.4 267.5 L343.5 262.5 L344.7 257.5 L346.0 252.5 L347.5 247.6 L349.1 242.8 L350.8 238.0 L352.6 233.2 L354.6 228.5 L356.6 223.9 L358.7 219.3 L360.9 214.8 L363.2 210.5 L365.7 206.3 L368.3 202.3 L371.1 198.4 L373.9 194.6 L376.8 190.8 L379.7 187.2 L382.6 183.6 L385.5 180.0 L388.4 176.5 L391.3 173.0 L394.2 169.8 L397.1 166.6 L400.0 163.7 L403.0 160.9 L406.0 158.2 L409.0 155.5 L412.1 152.9 L415.3 150.3 L418.5 147.8 L421.7 145.2 M338.3 302.8 L338.6 297.8 L339.1 292.7 L339.8 287.7 L340.8 282.7 L341.9 277.6 L343.0 272.6 L344.2 267.6 L345.4 262.6 L346.7 257.6 L348.1 252.6 L349.7 247.7 L351.5 242.9 L353.4 238.1 L355.4 233.3 L357.5 228.7 L359.6 224.0 L361.9 219.5 L364.3 215.1 L366.9 210.8 L369.6 206.6 L372.4 202.6 L375.4 198.7 L378.4 195.0 L381.6 191.3 L384.7 187.7 L387.9 184.1 L391.1 180.5 L394.2 177.1 L397.3 173.7 L400.5 170.4 L403.7 167.3 L406.9 164.3 L410.1 161.5 L413.4 158.8 L416.7 156.2 L420.1 153.6 L423.6 151.0 L427.0 148.5 L430.5 145.9 M339.4 303.0 L339.9 298.0 L340.4 292.9 L341.2 287.8 L342.2 282.8 L343.3 277.8 L344.6 272.8 L345.8 267.8 L347.2 262.7 L348.6 257.8 L350.1 252.8 L351.8 247.9 L353.7 243.1 L355.7 238.3 L357.9 233.6 L360.1 229.0 L362.5 224.4 L364.9 219.9 L367.5 215.5 L370.2 211.2 L373.1 207.1 L376.2 203.1 L379.3 199.3 L382.6 195.6 L385.9 192.0 L389.3 188.4 L392.7 184.9 L396.1 181.4 L399.5 177.9 L402.9 174.6 L406.3 171.4 L409.7 168.3 L413.1 165.3 L416.6 162.5 L420.2 159.8 L423.8 157.2 L427.4 154.6 L431.1 152.1 L434.8 149.5 L438.6 147.0 M340.5 303.3 L341.0 298.2 L341.5 293.1 L342.4 288.1 L343.4 283.1 L344.6 278.0 L345.9 273.0 L347.3 268.0 L348.7 263.0 L350.2 258.0 L351.9 253.1 L353.7 248.2 L355.7 243.4 L357.8 238.7 L360.1 234.0 L362.5 229.4 L365.0 224.8 L367.6 220.4 L370.3 216.0 L373.2 211.8 L376.3 207.7 L379.5 203.8 L382.9 200.1 L386.3 196.4 L389.9 192.9 L393.5 189.3 L397.1 185.9 L400.6 182.4 L404.2 179.1 L407.8 175.8 L411.4 172.6 L415.1 169.5 L418.8 166.6 L422.5 163.8 L426.3 161.1 L430.1 158.5 L434.0 156.0 L437.9 153.5 L441.9 151.0 L445.8 148.6 M341.5 303.6 L341.9 298.5 L342.5 293.4 L343.4 288.4 L344.5 283.4 L345.8 278.4 L347.2 273.4 L348.6 268.3 L350.1 263.4 L351.7 258.4 L353.4 253.5 L355.4 248.7 L357.4 243.9 L359.7 239.2 L362.1 234.5 L364.6 230.0 L367.2 225.4 L370.0 221.0 L372.9 216.7 L375.9 212.6 L379.1 208.6 L382.5 204.7 L386.0 201.0 L389.6 197.4 L393.3 194.0 L397.1 190.5 L400.9 187.1 L404.6 183.8 L408.4 180.5 L412.2 177.2 L416.0 174.1 L419.8 171.1 L423.7 168.2 L427.7 165.5 L431.7 162.8 L435.7 160.3 L439.8 157.8 L443.9 155.3 L448.1 152.9 L452.3 150.5 M342.3 304.0 L342.8 298.9 L343.4 293.8 L344.3 288.8 L345.5 283.7 L346.8 278.7 L348.2 273.8 L349.7 268.8 L351.3 263.8 L353.0 258.9 L354.8 254.0 L356.8 249.2 L359.0 244.5 L361.3 239.8 L363.8 235.2 L366.4 230.7 L369.2 226.2 L372.0 221.8 L375.0 217.6 L378.2 213.5 L381.5 209.6 L385.0 205.8 L388.7 202.2 L392.5 198.7 L396.3 195.3 L400.2 191.9 L404.1 188.6 L408.0 185.3 L412.0 182.1 L415.9 178.9 L419.9 175.9 L423.9 172.9 L428.0 170.1 L432.1 167.4 L436.3 164.8 L440.5 162.3 L444.8 159.9 L449.1 157.5 L453.4 155.2 L457.8 152.8 M342.9 304.4 L343.5 299.3 L344.1 294.3 L345.1 289.2 L346.3 284.2 L347.6 279.2 L349.1 274.2 L350.7 269.3 L352.3 264.3 L354.0 259.4 L355.9 254.6 L358.0 249.8 L360.2 245.1 L362.7 240.5 L365.2 236.0 L367.9 231.5 L370.8 227.1 L373.7 222.8 L376.8 218.6 L380.1 214.6 L383.5 210.7 L387.2 207.0 L390.9 203.5 L394.8 200.1 L398.8 196.8 L402.8 193.5 L406.8 190.3 L410.9 187.1 L414.9 183.9 L419.0 180.9 L423.1 177.9 L427.3 175.0 L431.5 172.3 L435.7 169.6 L440.1 167.1 L444.5 164.7 L448.9 162.4 L453.3 160.0 L457.8 157.8 L462.3 155.5 M343.4 304.9 L344.0 299.8 L344.7 294.7 L345.7 289.7 L346.9 284.7 L348.3 279.7 L349.8 274.8 L351.4 269.9 L353.1 265.0 L354.9 260.1 L356.8 255.3 L358.9 250.6 L361.2 245.9 L363.7 241.4 L366.4 236.9 L369.1 232.5 L372.0 228.1 L375.1 223.9 L378.2 219.8 L381.6 215.8 L385.1 212.1 L388.8 208.4 L392.7 205.0 L396.6 201.7 L400.7 198.4 L404.8 195.3 L408.9 192.2 L413.1 189.1 L417.2 186.0 L421.4 183.0 L425.6 180.1 L429.9 177.3 L434.2 174.7 L438.6 172.1 L443.1 169.7 L447.6 167.4 L452.1 165.1 L456.7 162.9 L461.3 160.7 L465.9 158.6 M343.8 305.4 L344.4 300.3 L345.1 295.3 L346.1 290.3 L347.3 285.3 L348.8 280.3 L350.3 275.4 L352.0 270.5 L353.7 265.7 L355.5 260.8 L357.5 256.1 L359.6 251.4 L362.0 246.8 L364.5 242.3 L367.2 237.9 L370.0 233.6 L372.9 229.3 L376.0 225.1 L379.3 221.1 L382.7 217.2 L386.2 213.5 L390.0 210.0 L393.9 206.7 L397.9 203.4 L402.0 200.3 L406.2 197.2 L410.4 194.2 L414.6 191.2 L418.8 188.3 L423.1 185.4 L427.4 182.6 L431.7 179.9 L436.2 177.3 L440.6 174.9 L445.2 172.6 L449.8 170.4 L454.4 168.2 L459.1 166.1 L463.8 164.0 L468.5 161.9 M345.7 294.2 L345.7 294.5 L345.7 294.9 L345.7 295.3 L345.6 295.7 L345.4 296.1 L345.1 296.6 L344.8 297.0 L344.5 297.5 L344.1 297.9 L343.6 298.4 L343.1 298.9 L342.5 299.3 L341.8 299.8 L341.2 300.3 L340.4 300.8 L339.6 301.2 L338.8 301.7 L337.9 302.2 L337.0 302.6 L336.1 303.1 L335.1 303.5 L334.1 303.9 L333.1 304.4 L332.0 304.8 L330.9 305.2 L329.8 305.5 L328.7 305.9 L327.5 306.3 L326.4 306.6 L325.2 306.9 L324.1 307.2 L322.9 307.5 L321.7 307.7 L320.6 307.9 L319.4 308.2 L318.3 308.3 L317.2 308.5 L316.1 308.6 L315.0 308.8 L313.9 308.8 L312.9 308.9 L311.9 309.0 L310.9 309.0 L310.0 309.0 L309.1 308.9 L308.3 308.9 L307.4 308.8 L306.7 308.7 L306.0 308.5 L305.3 308.4 L304.7 308.2 L304.1 308.0 L303.6 307.8 L303.2 307.5 L302.8 307.3 L302.4 307.0 L302.1 306.7 L301.9 306.3 L301.8 306.0 L301.7 305.6 L301.6 305.2 L301.7 304.8 L301.7 304.4 L301.9 304.0 L302.1 303.6 L302.4 303.1 L302.7 302.7 L303.1 302.2 L303.5 301.7 L304.0 301.2 L304.6 300.8 L305.2 300.3 L305.8 299.8 L306.6 299.3 L307.3 298.8 L308.1 298.4 L309.0 297.9 L309.8 297.4 L310.8 297.0 L311.7 296.5 L312.7 296.1 L313.8 295.6 L314.8 295.2 L315.9 294.8 L317.0 294.4 L318.1 294.1 L319.2 293.7 L320.4 293.4 L321.5 293.0 L322.7 292.7 L323.9 292.4 L325.0 292.2 L326.2 291.9 L327.3 291.7 L328.5 291.5 L329.6 291.4 L330.7 291.2 L331.8 291.1 L332.9 291.0 L333.9 290.9 L335.0 290.9 L335.9 290.9 L336.9 290.9 L337.8 290.9 L338.7 290.9 L339.5 291.0 L340.3 291.1 L341.0 291.3 L341.7 291.4 L342.4 291.6 L343.0 291.8 L343.5 292.0 L344.0 292.3 L344.4 292.5 L344.8 292.8 L345.1 293.1 L345.4 293.4 L345.5 293.8 L345.7 294.2 M347.5 286.4 L347.5 286.7 L347.5 287.1 L347.5 287.5 L347.3 287.8 L347.1 288.2 L346.9 288.7 L346.5 289.1 L346.2 289.5 L345.7 290.0 L345.2 290.4 L344.6 290.9 L344.0 291.4 L343.3 291.8 L342.6 292.3 L341.8 292.8 L341.0 293.3 L340.1 293.8 L339.2 294.2 L338.2 294.7 L337.2 295.2 L336.2 295.7 L335.1 296.1 L334.0 296.6 L332.9 297.0 L331.7 297.4 L330.5 297.8 L329.3 298.2 L328.1 298.6 L326.9 299.0 L325.7 299.4 L324.5 299.7 L323.2 300.0 L322.0 300.3 L320.8 300.6 L319.6 300.8 L318.4 301.1 L317.2 301.3 L316.0 301.5 L314.9 301.7 L313.8 301.8 L312.7 301.9 L311.6 302.0 L310.6 302.1 L309.6 302.1 L308.7 302.1 L307.8 302.1 L306.9 302.1 L306.1 302.0 L305.4 302.0 L304.7 301.9 L304.0 301.7 L303.4 301.6 L302.9 301.4 L302.4 301.2 L302.0 301.0 L301.7 300.7 L301.4 300.4 L301.2 300.1 L301.0 299.8 L300.9 299.5 L300.9 299.1 L300.9 298.6 L301.0 298.2 L301.1 297.7 L301.3 297.3 L301.6 296.8 L301.9 296.3 L302.3 295.8 L302.8 295.3 L303.3 294.8 L303.9 294.2 L304.5 293.7 L305.2 293.2 L306.0 292.7 L306.8 292.1 L307.6 291.6 L308.5 291.1 L309.4 290.6 L310.4 290.1 L311.4 289.6 L312.5 289.1 L313.6 288.6 L314.7 288.1 L315.8 287.7 L317.0 287.3 L318.2 286.8 L319.4 286.4 L320.6 286.0 L321.8 285.7 L323.0 285.3 L324.2 285.0 L325.5 284.7 L326.7 284.4 L327.9 284.2 L329.1 283.9 L330.3 283.7 L331.5 283.6 L332.7 283.4 L333.8 283.3 L334.9 283.2 L336.0 283.1 L337.1 283.1 L338.1 283.1 L339.0 283.1 L340.0 283.1 L340.9 283.2 L341.7 283.3 L342.5 283.4 L343.2 283.5 L343.9 283.7 L344.6 283.9 L345.1 284.2 L345.7 284.4 L346.1 284.7 L346.5 285.0 L346.9 285.3 L347.1 285.6 L347.3 286.0 L347.5 286.4 M349.8 278.7 L349.8 279.0 L349.8 279.4 L349.7 279.7 L349.6 280.1 L349.3 280.5 L349.1 280.9 L348.7 281.3 L348.3 281.7 L347.8 282.2 L347.2 282.6 L346.6 283.1 L345.9 283.5 L345.2 284.0 L344.4 284.5 L343.5 285.0 L342.6 285.5 L341.7 286.0 L340.7 286.5 L339.6 287.0 L338.6 287.5 L337.4 287.9 L336.3 288.4 L335.1 288.9 L333.9 289.4 L332.6 289.8 L331.4 290.3 L330.1 290.7 L328.8 291.1 L327.5 291.6 L326.1 292.0 L324.8 292.3 L323.5 292.7 L322.2 293.0 L320.9 293.4 L319.6 293.7 L318.3 294.0 L317.0 294.2 L315.8 294.5 L314.5 294.7 L313.4 294.9 L312.2 295.1 L311.1 295.2 L310.0 295.3 L308.9 295.4 L307.9 295.5 L307.0 295.5 L306.1 295.6 L305.2 295.5 L304.4 295.5 L303.7 295.4 L303.0 295.4 L302.4 295.2 L301.8 295.1 L301.3 295.0 L300.9 294.8 L300.5 294.6 L300.2 294.3 L300.0 294.1 L299.8 293.8 L299.7 293.4 L299.7 293.0 L299.7 292.5 L299.8 292.0 L299.9 291.5 L300.2 291.0 L300.4 290.5 L300.8 290.0 L301.2 289.4 L301.7 288.9 L302.3 288.3 L302.9 287.7 L303.6 287.2 L304.3 286.6 L305.1 286.0 L306.0 285.4 L306.9 284.9 L307.8 284.3 L308.8 283.7 L309.9 283.2 L310.9 282.6 L312.1 282.1 L313.2 281.6 L314.4 281.0 L315.6 280.5 L316.9 280.0 L318.2 279.6 L319.5 279.1 L320.8 278.7 L322.1 278.3 L323.4 277.9 L324.7 277.5 L326.0 277.2 L327.4 276.9 L328.7 276.6 L330.0 276.3 L331.3 276.1 L332.5 275.9 L333.8 275.7 L335.0 275.6 L336.2 275.4 L337.4 275.3 L338.5 275.3 L339.6 275.3 L340.6 275.3 L341.6 275.3 L342.6 275.4 L343.5 275.4 L344.4 275.6 L345.2 275.7 L345.9 275.9 L346.6 276.1 L347.2 276.3 L347.8 276.6 L348.3 276.9 L348.7 277.2 L349.1 277.6 L349.4 277.9 L349.6 278.3 L349.8 278.7 M352.3 271.2 L352.4 271.4 L352.3 271.7 L352.2 272.1 L352.0 272.4 L351.8 272.8 L351.5 273.2 L351.1 273.6 L350.6 274.0 L350.0 274.4 L349.4 274.9 L348.7 275.3 L348.0 275.8 L347.2 276.3 L346.3 276.8 L345.3 277.3 L344.3 277.8 L343.3 278.3 L342.2 278.8 L341.1 279.3 L339.9 279.9 L338.6 280.4 L337.4 280.9 L336.1 281.4 L334.7 281.9 L333.4 282.4 L332.0 282.9 L330.6 283.4 L329.2 283.8 L327.7 284.3 L326.3 284.7 L324.9 285.2 L323.4 285.6 L322.0 286.0 L320.6 286.4 L319.1 286.7 L317.7 287.1 L316.4 287.4 L315.0 287.7 L313.7 287.9 L312.4 288.2 L311.1 288.4 L309.9 288.6 L308.8 288.8 L307.6 288.9 L306.5 289.1 L305.5 289.2 L304.5 289.2 L303.6 289.3 L302.8 289.3 L302.0 289.3 L301.2 289.2 L300.6 289.2 L300.0 289.1 L299.4 289.0 L299.0 288.8 L298.6 288.6 L298.3 288.4 L298.1 288.2 L297.9 288.0 L297.8 287.6 L297.7 287.1 L297.7 286.6 L297.8 286.1 L298.0 285.5 L298.2 285.0 L298.5 284.4 L298.9 283.8 L299.4 283.2 L299.9 282.6 L300.5 282.0 L301.2 281.4 L301.9 280.7 L302.7 280.1 L303.6 279.5 L304.5 278.8 L305.5 278.2 L306.5 277.6 L307.6 276.9 L308.8 276.3 L309.9 275.7 L311.2 275.1 L312.4 274.5 L313.7 273.9 L315.1 273.4 L316.4 272.8 L317.8 272.3 L319.2 271.8 L320.6 271.3 L322.1 270.9 L323.5 270.5 L324.9 270.0 L326.4 269.7 L327.8 269.3 L329.3 269.0 L330.7 268.7 L332.1 268.4 L333.5 268.2 L334.8 268.0 L336.2 267.8 L337.5 267.7 L338.7 267.6 L340.0 267.5 L341.2 267.4 L342.3 267.4 L343.4 267.5 L344.5 267.5 L345.5 267.6 L346.4 267.7 L347.3 267.9 L348.1 268.1 L348.8 268.3 L349.5 268.6 L350.1 268.9 L350.7 269.2 L351.2 269.5 L351.6 269.9 L351.9 270.3 L352.1 270.7 L352.3 271.2 M355.1 263.7 L355.1 263.9 L355.1 264.2 L354.9 264.5 L354.7 264.8 L354.4 265.2 L354.0 265.6 L353.6 266.0 L353.0 266.4 L352.4 266.8 L351.7 267.3 L351.0 267.7 L350.1 268.2 L349.2 268.7 L348.2 269.2 L347.2 269.7 L346.1 270.2 L344.9 270.8 L343.7 271.3 L342.5 271.9 L341.1 272.4 L339.8 273.0 L338.4 273.5 L337.0 274.1 L335.5 274.6 L334.0 275.1 L332.5 275.7 L330.9 276.2 L329.4 276.7 L327.8 277.2 L326.2 277.7 L324.6 278.2 L323.1 278.7 L321.5 279.1 L319.9 279.5 L318.4 279.9 L316.8 280.3 L315.3 280.7 L313.9 281.1 L312.4 281.4 L311.0 281.7 L309.6 282.0 L308.3 282.2 L307.0 282.5 L305.8 282.7 L304.6 282.9 L303.5 283.0 L302.4 283.1 L301.4 283.2 L300.5 283.3 L299.6 283.3 L298.8 283.3 L298.1 283.3 L297.5 283.2 L296.9 283.2 L296.4 283.1 L296.0 282.9 L295.7 282.8 L295.5 282.6 L295.3 282.3 L295.2 282.0 L295.1 281.4 L295.1 280.9 L295.2 280.3 L295.4 279.7 L295.7 279.1 L296.0 278.5 L296.4 277.8 L296.9 277.2 L297.5 276.5 L298.2 275.8 L298.9 275.1 L299.7 274.4 L300.6 273.7 L301.5 273.0 L302.6 272.3 L303.6 271.6 L304.8 270.9 L306.0 270.2 L307.2 269.5 L308.5 268.8 L309.9 268.2 L311.2 267.5 L312.7 266.9 L314.1 266.3 L315.6 265.7 L317.1 265.1 L318.7 264.5 L320.2 264.0 L321.8 263.5 L323.4 263.0 L325.0 262.6 L326.6 262.1 L328.1 261.7 L329.7 261.4 L331.3 261.0 L332.8 260.7 L334.3 260.5 L335.8 260.2 L337.3 260.0 L338.7 259.9 L340.1 259.8 L341.5 259.7 L342.8 259.6 L344.1 259.6 L345.3 259.6 L346.4 259.7 L347.5 259.8 L348.5 259.9 L349.5 260.1 L350.4 260.3 L351.2 260.5 L352.0 260.8 L352.7 261.1 L353.3 261.5 L353.8 261.9 L354.2 262.3 L354.6 262.7 L354.9 263.2 L355.1 263.7 M358.2 256.3 L358.2 256.5 L358.1 256.8 L358.0 257.1 L357.7 257.4 L357.4 257.8 L356.9 258.1 L356.4 258.5 L355.8 258.9 L355.1 259.4 L354.3 259.8 L353.5 260.3 L352.5 260.8 L351.5 261.3 L350.5 261.8 L349.3 262.3 L348.1 262.9 L346.8 263.4 L345.4 264.0 L344.0 264.6 L342.6 265.1 L341.1 265.7 L339.5 266.3 L337.9 266.9 L336.3 267.5 L334.7 268.0 L333.0 268.6 L331.3 269.2 L329.6 269.8 L327.8 270.3 L326.1 270.9 L324.4 271.4 L322.6 271.9 L320.9 272.4 L319.2 272.9 L317.5 273.4 L315.8 273.8 L314.1 274.2 L312.5 274.6 L310.9 275.0 L309.4 275.4 L307.9 275.7 L306.4 276.0 L305.0 276.3 L303.7 276.6 L302.4 276.8 L301.2 277.0 L300.0 277.2 L298.9 277.3 L297.9 277.4 L297.0 277.5 L296.1 277.6 L295.4 277.6 L294.7 277.6 L294.1 277.5 L293.5 277.5 L293.1 277.4 L292.8 277.2 L292.5 277.1 L292.4 276.9 L292.2 276.5 L292.2 275.9 L292.2 275.3 L292.3 274.6 L292.5 274.0 L292.8 273.3 L293.1 272.6 L293.6 271.9 L294.2 271.2 L294.8 270.4 L295.5 269.7 L296.3 268.9 L297.2 268.1 L298.2 267.4 L299.2 266.6 L300.3 265.8 L301.5 265.1 L302.8 264.3 L304.1 263.5 L305.5 262.8 L306.9 262.0 L308.4 261.3 L309.9 260.6 L311.5 259.9 L313.1 259.2 L314.7 258.5 L316.4 257.9 L318.1 257.3 L319.8 256.7 L321.5 256.1 L323.3 255.6 L325.0 255.1 L326.8 254.6 L328.5 254.2 L330.2 253.8 L332.0 253.4 L333.7 253.1 L335.3 252.8 L337.0 252.5 L338.6 252.3 L340.2 252.1 L341.7 252.0 L343.2 251.9 L344.7 251.9 L346.0 251.8 L347.4 251.9 L348.6 251.9 L349.8 252.1 L351.0 252.2 L352.0 252.4 L353.0 252.6 L353.9 252.9 L354.8 253.2 L355.5 253.5 L356.2 253.9 L356.8 254.3 L357.2 254.8 L357.6 255.3 L358.0 255.8 L358.2 256.3 M361.7 249.2 L361.7 249.4 L361.6 249.6 L361.4 249.9 L361.1 250.2 L360.7 250.5 L360.3 250.9 L359.7 251.3 L359.0 251.7 L358.2 252.1 L357.3 252.6 L356.4 253.0 L355.4 253.5 L354.2 254.1 L353.0 254.6 L351.7 255.1 L350.4 255.7 L349.0 256.3 L347.5 256.9 L345.9 257.5 L344.3 258.1 L342.6 258.7 L340.9 259.3 L339.2 259.9 L337.4 260.5 L335.6 261.2 L333.7 261.8 L331.8 262.4 L330.0 263.0 L328.0 263.6 L326.1 264.2 L324.2 264.8 L322.3 265.3 L320.4 265.9 L318.5 266.4 L316.7 266.9 L314.8 267.4 L313.0 267.9 L311.2 268.4 L309.5 268.8 L307.8 269.2 L306.1 269.6 L304.5 270.0 L303.0 270.3 L301.5 270.6 L300.1 270.9 L298.8 271.1 L297.5 271.4 L296.4 271.5 L295.3 271.7 L294.2 271.8 L293.3 271.9 L292.5 272.0 L291.7 272.0 L291.1 272.0 L290.5 272.0 L290.0 271.9 L289.7 271.8 L289.4 271.7 L289.3 271.5 L289.1 271.1 L289.1 270.4 L289.1 269.8 L289.2 269.1 L289.4 268.4 L289.7 267.6 L290.1 266.8 L290.7 266.1 L291.3 265.3 L292.0 264.5 L292.8 263.6 L293.7 262.8 L294.7 262.0 L295.7 261.1 L296.9 260.3 L298.1 259.4 L299.4 258.6 L300.8 257.7 L302.2 256.9 L303.7 256.1 L305.3 255.3 L306.9 254.5 L308.6 253.7 L310.4 252.9 L312.1 252.2 L313.9 251.4 L315.8 250.8 L317.6 250.1 L319.5 249.4 L321.4 248.8 L323.3 248.3 L325.3 247.7 L327.2 247.2 L329.1 246.7 L331.0 246.3 L332.9 245.9 L334.8 245.5 L336.6 245.2 L338.4 244.9 L340.2 244.7 L341.9 244.5 L343.6 244.4 L345.3 244.3 L346.9 244.2 L348.4 244.2 L349.8 244.3 L351.2 244.3 L352.6 244.5 L353.8 244.6 L355.0 244.8 L356.1 245.1 L357.1 245.4 L358.0 245.7 L358.8 246.1 L359.5 246.5 L360.2 247.0 L360.7 247.5 L361.1 248.0 L361.5 248.6 L361.7 249.2 M365.7 242.2 L365.7 242.4 L365.6 242.7 L365.3 242.9 L365.0 243.2 L364.5 243.5 L364.0 243.9 L363.3 244.3 L362.6 244.7 L361.7 245.1 L360.7 245.6 L359.7 246.0 L358.5 246.5 L357.3 247.1 L355.9 247.6 L354.5 248.2 L353.0 248.8 L351.4 249.4 L349.8 250.0 L348.1 250.6 L346.3 251.2 L344.5 251.9 L342.6 252.5 L340.6 253.2 L338.7 253.8 L336.7 254.5 L334.6 255.1 L332.5 255.8 L330.5 256.4 L328.4 257.1 L326.3 257.7 L324.2 258.3 L322.1 259.0 L320.0 259.6 L317.9 260.1 L315.8 260.7 L313.8 261.3 L311.8 261.8 L309.9 262.3 L308.0 262.8 L306.1 263.3 L304.3 263.7 L302.5 264.1 L300.9 264.5 L299.3 264.9 L297.7 265.2 L296.3 265.5 L294.9 265.7 L293.6 266.0 L292.4 266.2 L291.3 266.3 L290.3 266.5 L289.4 266.6 L288.6 266.6 L287.9 266.7 L287.3 266.7 L286.8 266.6 L286.4 266.6 L286.1 266.4 L285.9 266.3 L285.8 265.9 L285.7 265.2 L285.7 264.4 L285.9 263.7 L286.1 262.9 L286.5 262.1 L286.9 261.2 L287.5 260.4 L288.2 259.5 L289.0 258.6 L289.8 257.7 L290.8 256.8 L291.9 255.9 L293.1 255.0 L294.4 254.0 L295.7 253.1 L297.2 252.2 L298.7 251.3 L300.3 250.4 L301.9 249.5 L303.7 248.6 L305.5 247.7 L307.3 246.9 L309.2 246.0 L311.2 245.2 L313.2 244.5 L315.2 243.7 L317.2 243.0 L319.3 242.3 L321.4 241.6 L323.5 241.0 L325.6 240.4 L327.8 239.9 L329.9 239.4 L332.0 238.9 L334.0 238.5 L336.1 238.1 L338.1 237.7 L340.1 237.5 L342.1 237.2 L344.0 237.0 L345.8 236.9 L347.7 236.8 L349.4 236.7 L351.1 236.7 L352.7 236.8 L354.2 236.9 L355.7 237.0 L357.0 237.2 L358.3 237.4 L359.5 237.7 L360.6 238.1 L361.6 238.4 L362.5 238.9 L363.3 239.3 L364.0 239.8 L364.6 240.4 L365.0 241.0 L365.4 241.6 L365.7 242.2 M370.0 235.5 L370.0 235.7 L369.9 235.9 L369.6 236.1 L369.2 236.4 L368.7 236.7 L368.1 237.1 L367.4 237.4 L366.5 237.9 L365.5 238.3 L364.5 238.8 L363.3 239.2 L362.0 239.8 L360.6 240.3 L359.1 240.9 L357.6 241.5 L355.9 242.1 L354.2 242.7 L352.3 243.3 L350.4 244.0 L348.5 244.6 L346.4 245.3 L344.4 246.0 L342.2 246.7 L340.0 247.4 L337.8 248.1 L335.6 248.8 L333.3 249.5 L331.0 250.2 L328.7 250.9 L326.4 251.5 L324.1 252.2 L321.8 252.9 L319.5 253.5 L317.2 254.2 L314.9 254.8 L312.7 255.4 L310.5 256.0 L308.4 256.5 L306.3 257.1 L304.2 257.6 L302.2 258.1 L300.3 258.5 L298.5 259.0 L296.7 259.4 L295.0 259.8 L293.4 260.1 L291.9 260.4 L290.5 260.7 L289.2 260.9 L288.0 261.1 L286.9 261.3 L285.9 261.5 L285.0 261.6 L284.3 261.6 L283.6 261.6 L283.1 261.6 L282.7 261.6 L282.4 261.5 L282.2 261.4 L282.1 260.9 L282.0 260.2 L282.0 259.4 L282.2 258.5 L282.4 257.6 L282.8 256.8 L283.4 255.8 L284.0 254.9 L284.7 253.9 L285.6 253.0 L286.6 252.0 L287.7 251.0 L288.9 250.0 L290.2 249.0 L291.6 248.0 L293.1 247.0 L294.7 246.0 L296.3 245.0 L298.1 244.0 L299.9 243.0 L301.8 242.1 L303.8 241.1 L305.9 240.2 L308.0 239.3 L310.1 238.4 L312.3 237.6 L314.5 236.8 L316.8 236.0 L319.1 235.2 L321.4 234.5 L323.7 233.9 L326.0 233.2 L328.4 232.6 L330.7 232.1 L333.0 231.6 L335.3 231.1 L337.5 230.7 L339.8 230.4 L342.0 230.1 L344.1 229.8 L346.2 229.6 L348.3 229.5 L350.2 229.4 L352.2 229.3 L354.0 229.3 L355.8 229.4 L357.4 229.5 L359.0 229.7 L360.5 229.9 L361.9 230.2 L363.3 230.5 L364.5 230.9 L365.5 231.3 L366.5 231.8 L367.4 232.3 L368.2 232.9 L368.8 233.5 L369.3 234.1 L369.7 234.8 L370.0 235.5 M374.7 229.0 L374.6 229.1 L374.5 229.3 L374.2 229.6 L373.7 229.8 L373.2 230.1 L372.5 230.5 L371.7 230.9 L370.7 231.3 L369.6 231.7 L368.5 232.2 L367.1 232.7 L365.7 233.2 L364.2 233.8 L362.6 234.4 L360.8 235.0 L359.0 235.6 L357.1 236.2 L355.0 236.9 L352.9 237.6 L350.8 238.3 L348.5 239.0 L346.3 239.7 L343.9 240.4 L341.5 241.2 L339.1 241.9 L336.6 242.7 L334.1 243.4 L331.5 244.2 L329.0 244.9 L326.5 245.6 L323.9 246.4 L321.4 247.1 L318.8 247.8 L316.3 248.5 L313.8 249.1 L311.4 249.8 L309.0 250.4 L306.6 251.1 L304.3 251.7 L302.1 252.2 L299.9 252.8 L297.8 253.3 L295.8 253.8 L293.9 254.2 L292.0 254.7 L290.3 255.1 L288.6 255.4 L287.1 255.7 L285.7 256.0 L284.4 256.3 L283.2 256.5 L282.1 256.7 L281.1 256.8 L280.3 256.9 L279.6 257.0 L279.0 257.0 L278.6 257.0 L278.3 256.9 L278.1 256.8 L277.9 256.3 L277.8 255.5 L277.9 254.6 L278.1 253.7 L278.4 252.7 L278.8 251.7 L279.4 250.7 L280.1 249.7 L280.9 248.7 L281.9 247.6 L282.9 246.5 L284.1 245.4 L285.5 244.3 L286.9 243.3 L288.4 242.2 L290.1 241.1 L291.8 240.0 L293.7 238.9 L295.6 237.8 L297.7 236.8 L299.8 235.7 L301.9 234.7 L304.2 233.7 L306.5 232.7 L308.9 231.8 L311.3 230.9 L313.7 230.0 L316.2 229.2 L318.7 228.4 L321.3 227.6 L323.8 226.9 L326.4 226.2 L328.9 225.6 L331.5 225.0 L334.0 224.4 L336.6 224.0 L339.0 223.5 L341.5 223.2 L343.9 222.8 L346.3 222.6 L348.6 222.4 L350.8 222.2 L353.0 222.1 L355.1 222.1 L357.1 222.1 L359.1 222.2 L360.9 222.3 L362.7 222.5 L364.3 222.8 L365.8 223.1 L367.3 223.5 L368.6 223.9 L369.8 224.3 L370.9 224.9 L371.8 225.4 L372.7 226.1 L373.4 226.7 L373.9 227.4 L374.4 228.2 L374.7 229.0 M379.7 222.8 L379.6 222.9 L379.4 223.1 L379.1 223.3 L378.6 223.6 L378.0 223.9 L377.2 224.2 L376.3 224.6 L375.3 225.0 L374.1 225.4 L372.8 225.9 L371.3 226.4 L369.7 227.0 L368.0 227.6 L366.2 228.2 L364.3 228.8 L362.3 229.4 L360.2 230.1 L358.0 230.8 L355.7 231.5 L353.3 232.3 L350.8 233.0 L348.3 233.8 L345.7 234.6 L343.1 235.3 L340.4 236.1 L337.7 236.9 L334.9 237.7 L332.1 238.5 L329.3 239.3 L326.5 240.1 L323.7 240.9 L320.9 241.6 L318.2 242.4 L315.4 243.1 L312.7 243.9 L310.0 244.6 L307.4 245.3 L304.8 246.0 L302.3 246.6 L299.8 247.2 L297.4 247.8 L295.1 248.4 L292.9 248.9 L290.8 249.4 L288.8 249.9 L286.9 250.4 L285.1 250.8 L283.4 251.1 L281.8 251.5 L280.4 251.8 L279.1 252.0 L277.9 252.2 L276.8 252.4 L275.9 252.5 L275.2 252.6 L274.6 252.7 L274.1 252.7 L273.7 252.6 L273.6 252.6 L273.4 252.1 L273.3 251.1 L273.4 250.1 L273.6 249.1 L273.9 248.1 L274.4 247.0 L275.0 245.9 L275.8 244.8 L276.7 243.7 L277.8 242.5 L279.0 241.3 L280.3 240.2 L281.8 239.0 L283.3 237.8 L285.0 236.6 L286.9 235.4 L288.8 234.2 L290.8 233.1 L293.0 231.9 L295.2 230.7 L297.5 229.6 L299.9 228.5 L302.4 227.4 L304.9 226.4 L307.5 225.4 L310.2 224.4 L312.8 223.4 L315.6 222.5 L318.4 221.7 L321.1 220.9 L323.9 220.1 L326.8 219.4 L329.6 218.7 L332.4 218.1 L335.2 217.5 L337.9 217.0 L340.7 216.5 L343.3 216.1 L346.0 215.8 L348.6 215.5 L351.1 215.3 L353.6 215.2 L356.0 215.1 L358.3 215.1 L360.5 215.1 L362.6 215.2 L364.6 215.4 L366.6 215.6 L368.4 215.9 L370.0 216.2 L371.6 216.6 L373.1 217.1 L374.4 217.6 L375.5 218.2 L376.6 218.8 L377.5 219.5 L378.3 220.3 L378.9 221.1 L379.3 221.9 L379.7 222.8 M385.1 216.9 L385.0 217.0 L384.8 217.2 L384.4 217.4 L383.9 217.7 L383.2 218.0 L382.4 218.3 L381.4 218.7 L380.2 219.1 L378.9 219.6 L377.4 220.1 L375.8 220.6 L374.1 221.1 L372.2 221.7 L370.3 222.4 L368.2 223.0 L365.9 223.7 L363.6 224.4 L361.2 225.1 L358.6 225.9 L356.0 226.7 L353.3 227.4 L350.5 228.2 L347.7 229.1 L344.8 229.9 L341.9 230.7 L338.9 231.6 L335.9 232.4 L332.8 233.2 L329.7 234.1 L326.7 234.9 L323.6 235.8 L320.5 236.6 L317.5 237.4 L314.5 238.2 L311.5 239.0 L308.6 239.8 L305.7 240.5 L302.8 241.2 L300.1 241.9 L297.4 242.6 L294.8 243.3 L292.3 243.9 L289.9 244.5 L287.5 245.0 L285.3 245.6 L283.2 246.1 L281.3 246.5 L279.4 246.9 L277.7 247.3 L276.2 247.6 L274.7 247.9 L273.4 248.2 L272.3 248.4 L271.3 248.5 L270.5 248.7 L269.8 248.7 L269.3 248.8 L269.0 248.8 L268.8 248.7 L268.6 248.2 L268.5 247.1 L268.6 246.1 L268.8 245.0 L269.2 243.8 L269.7 242.7 L270.4 241.5 L271.3 240.2 L272.3 239.0 L273.5 237.7 L274.8 236.5 L276.2 235.2 L277.8 233.9 L279.6 232.6 L281.4 231.3 L283.4 230.0 L285.6 228.8 L287.8 227.5 L290.1 226.2 L292.6 225.0 L295.1 223.8 L297.8 222.6 L300.5 221.4 L303.3 220.3 L306.1 219.2 L309.0 218.2 L312.0 217.2 L315.0 216.2 L318.0 215.3 L321.1 214.4 L324.1 213.6 L327.2 212.8 L330.3 212.1 L333.4 211.4 L336.4 210.8 L339.5 210.3 L342.5 209.8 L345.4 209.4 L348.3 209.0 L351.1 208.8 L353.9 208.6 L356.6 208.4 L359.2 208.3 L361.7 208.3 L364.2 208.4 L366.5 208.5 L368.7 208.7 L370.8 209.0 L372.8 209.3 L374.6 209.7 L376.3 210.2 L377.9 210.7 L379.3 211.3 L380.6 211.9 L381.7 212.6 L382.7 213.4 L383.6 214.2 L384.2 215.0 L384.7 216.0 L385.1 216.9 M390.9 211.5 L390.9 211.6 L390.6 211.8 L390.2 212.0 L389.6 212.2 L388.8 212.5 L387.9 212.9 L386.8 213.2 L385.5 213.7 L384.1 214.1 L382.5 214.6 L380.7 215.2 L378.8 215.7 L376.8 216.4 L374.6 217.0 L372.3 217.7 L369.9 218.4 L367.3 219.1 L364.7 219.9 L361.9 220.7 L359.0 221.5 L356.1 222.3 L353.0 223.1 L349.9 224.0 L346.8 224.9 L343.5 225.7 L340.3 226.6 L337.0 227.5 L333.6 228.4 L330.3 229.3 L326.9 230.2 L323.6 231.1 L320.2 231.9 L316.9 232.8 L313.6 233.7 L310.3 234.5 L307.1 235.3 L304.0 236.1 L300.9 236.9 L297.9 237.7 L294.9 238.4 L292.1 239.1 L289.3 239.8 L286.7 240.4 L284.2 241.0 L281.8 241.6 L279.5 242.1 L277.3 242.6 L275.3 243.1 L273.5 243.5 L271.8 243.9 L270.2 244.2 L268.8 244.5 L267.6 244.7 L266.5 244.9 L265.6 245.0 L264.9 245.1 L264.3 245.2 L263.9 245.2 L263.7 245.2 L263.6 244.6 L263.5 243.5 L263.6 242.3 L263.8 241.1 L264.2 239.9 L264.8 238.6 L265.6 237.3 L266.6 236.0 L267.7 234.6 L269.0 233.3 L270.4 231.9 L272.0 230.5 L273.8 229.1 L275.7 227.7 L277.7 226.3 L279.9 225.0 L282.2 223.6 L284.7 222.2 L287.3 220.9 L289.9 219.5 L292.7 218.2 L295.6 217.0 L298.6 215.7 L301.6 214.5 L304.7 213.3 L307.9 212.2 L311.2 211.1 L314.4 210.1 L317.8 209.1 L321.1 208.2 L324.5 207.3 L327.8 206.5 L331.2 205.8 L334.6 205.1 L337.9 204.4 L341.2 203.9 L344.5 203.4 L347.7 203.0 L350.9 202.6 L354.0 202.3 L357.0 202.1 L359.9 202.0 L362.8 201.9 L365.5 201.9 L368.2 202.0 L370.7 202.2 L373.1 202.4 L375.4 202.7 L377.5 203.1 L379.6 203.5 L381.4 204.1 L383.1 204.6 L384.7 205.3 L386.1 206.0 L387.3 206.8 L388.4 207.6 L389.3 208.5 L390.0 209.5 L390.6 210.5 L390.9 211.5 M397.1 206.5 L397.1 206.6 L396.8 206.8 L396.3 206.9 L395.7 207.2 L394.8 207.5 L393.8 207.8 L392.6 208.2 L391.2 208.6 L389.6 209.1 L387.9 209.6 L386.0 210.2 L383.9 210.8 L381.7 211.4 L379.3 212.1 L376.8 212.8 L374.1 213.5 L371.3 214.2 L368.4 215.0 L365.4 215.8 L362.2 216.7 L359.0 217.5 L355.7 218.4 L352.3 219.3 L348.9 220.2 L345.3 221.1 L341.8 222.1 L338.2 223.0 L334.5 223.9 L330.9 224.9 L327.2 225.8 L323.6 226.8 L319.9 227.7 L316.3 228.6 L312.7 229.5 L309.2 230.4 L305.7 231.3 L302.2 232.1 L298.9 232.9 L295.6 233.7 L292.4 234.5 L289.3 235.3 L286.3 236.0 L283.4 236.7 L280.7 237.3 L278.0 237.9 L275.6 238.5 L273.2 239.0 L271.1 239.5 L269.0 240.0 L267.2 240.4 L265.5 240.8 L264.0 241.1 L262.6 241.4 L261.5 241.6 L260.5 241.8 L259.7 241.9 L259.1 242.0 L258.7 242.0 L258.5 242.0 L258.3 241.3 L258.2 240.1 L258.3 238.9 L258.6 237.6 L259.1 236.2 L259.7 234.8 L260.6 233.4 L261.6 232.0 L262.9 230.5 L264.3 229.1 L265.9 227.6 L267.6 226.1 L269.5 224.6 L271.6 223.1 L273.9 221.6 L276.3 220.1 L278.8 218.6 L281.5 217.2 L284.3 215.7 L287.2 214.3 L290.3 212.9 L293.4 211.6 L296.6 210.3 L300.0 209.0 L303.4 207.7 L306.8 206.5 L310.4 205.4 L314.0 204.3 L317.6 203.2 L321.2 202.3 L324.9 201.3 L328.6 200.5 L332.2 199.7 L335.9 199.0 L339.5 198.3 L343.1 197.7 L346.7 197.2 L350.2 196.8 L353.6 196.5 L357.0 196.2 L360.3 196.0 L363.5 195.9 L366.6 195.8 L369.6 195.9 L372.5 196.0 L375.2 196.2 L377.8 196.5 L380.3 196.8 L382.7 197.2 L384.8 197.7 L386.9 198.3 L388.7 199.0 L390.4 199.7 L391.9 200.5 L393.3 201.3 L394.4 202.2 L395.4 203.2 L396.2 204.3 L396.7 205.4 L397.1 206.5 M403.6 201.8 L403.5 201.9 L403.2 202.0 L402.7 202.2 L402.0 202.4 L401.0 202.7 L399.9 203.0 L398.6 203.4 L397.1 203.9 L395.4 204.3 L393.5 204.9 L391.4 205.4 L389.1 206.0 L386.7 206.7 L384.1 207.4 L381.4 208.1 L378.5 208.9 L375.4 209.7 L372.3 210.5 L369.0 211.3 L365.6 212.2 L362.1 213.1 L358.5 214.0 L354.8 214.9 L351.1 215.9 L347.2 216.9 L343.4 217.8 L339.5 218.8 L335.5 219.8 L331.5 220.8 L327.6 221.7 L323.6 222.7 L319.6 223.7 L315.7 224.7 L311.8 225.6 L307.9 226.6 L304.1 227.5 L300.4 228.4 L296.8 229.3 L293.2 230.1 L289.7 230.9 L286.4 231.7 L283.1 232.5 L280.0 233.2 L277.0 233.9 L274.2 234.6 L271.5 235.2 L269.0 235.8 L266.6 236.3 L264.4 236.8 L262.4 237.2 L260.6 237.6 L258.9 238.0 L257.5 238.3 L256.2 238.5 L255.2 238.7 L254.3 238.9 L253.7 239.0 L253.2 239.0 L253.0 239.0 L252.8 238.3 L252.7 237.0 L252.8 235.7 L253.2 234.2 L253.7 232.8 L254.4 231.3 L255.4 229.8 L256.5 228.3 L257.8 226.7 L259.4 225.1 L261.1 223.5 L263.0 221.9 L265.1 220.3 L267.4 218.7 L269.9 217.1 L272.5 215.5 L275.2 213.9 L278.1 212.4 L281.2 210.8 L284.4 209.3 L287.7 207.8 L291.1 206.4 L294.6 205.0 L298.2 203.6 L301.9 202.3 L305.7 201.0 L309.6 199.8 L313.4 198.7 L317.4 197.6 L321.3 196.5 L325.3 195.6 L329.3 194.7 L333.3 193.8 L337.3 193.1 L341.2 192.4 L345.1 191.8 L349.0 191.3 L352.8 190.9 L356.5 190.5 L360.2 190.2 L363.7 190.1 L367.2 190.0 L370.6 189.9 L373.8 190.0 L376.9 190.2 L379.9 190.4 L382.8 190.7 L385.4 191.1 L388.0 191.6 L390.3 192.2 L392.5 192.8 L394.5 193.5 L396.3 194.3 L398.0 195.2 L399.4 196.1 L400.7 197.1 L401.7 198.2 L402.5 199.3 L403.2 200.5 L403.6 201.8 M410.2 197.2 L410.1 197.3 L409.7 197.4 L409.2 197.6 L408.4 197.8 L407.4 198.1 L406.2 198.4 L404.7 198.8 L403.1 199.3 L401.2 199.8 L399.2 200.3 L396.9 200.9 L394.5 201.5 L391.9 202.2 L389.0 202.9 L386.1 203.7 L382.9 204.4 L379.7 205.3 L376.2 206.1 L372.7 207.0 L369.0 207.9 L365.2 208.8 L361.3 209.8 L357.3 210.8 L353.3 211.8 L349.1 212.8 L344.9 213.8 L340.7 214.8 L336.4 215.8 L332.2 216.9 L327.9 217.9 L323.6 218.9 L319.3 220.0 L315.0 221.0 L310.8 222.0 L306.6 223.0 L302.5 223.9 L298.5 224.9 L294.5 225.8 L290.7 226.7 L286.9 227.6 L283.3 228.4 L279.8 229.3 L276.4 230.0 L273.2 230.8 L270.1 231.5 L267.2 232.1 L264.5 232.8 L262.0 233.3 L259.6 233.9 L257.4 234.3 L255.4 234.8 L253.7 235.1 L252.1 235.5 L250.7 235.7 L249.6 236.0 L248.7 236.1 L248.0 236.3 L247.5 236.3 L247.3 236.3 L247.1 235.6 L247.0 234.2 L247.2 232.7 L247.5 231.2 L248.1 229.6 L248.9 228.0 L249.9 226.4 L251.2 224.7 L252.6 223.1 L254.3 221.4 L256.2 219.7 L258.3 217.9 L260.5 216.2 L263.0 214.5 L265.7 212.8 L268.5 211.1 L271.5 209.4 L274.6 207.7 L277.9 206.1 L281.4 204.5 L285.0 202.9 L288.7 201.4 L292.5 199.9 L296.4 198.4 L300.4 197.0 L304.5 195.7 L308.6 194.4 L312.8 193.2 L317.1 192.0 L321.4 190.9 L325.7 189.9 L330.0 189.0 L334.3 188.1 L338.6 187.3 L342.9 186.6 L347.1 186.0 L351.3 185.5 L355.4 185.1 L359.4 184.7 L363.4 184.4 L367.2 184.3 L371.0 184.2 L374.6 184.2 L378.1 184.3 L381.5 184.5 L384.7 184.7 L387.7 185.1 L390.6 185.6 L393.4 186.1 L395.9 186.7 L398.3 187.4 L400.4 188.2 L402.4 189.1 L404.2 190.0 L405.7 191.1 L407.0 192.2 L408.2 193.3 L409.0 194.6 L409.7 195.8 L410.2 197.2 M416.8 192.7 L416.7 192.8 L416.3 192.9 L415.7 193.1 L414.9 193.3 L413.8 193.6 L412.5 193.9 L410.9 194.3 L409.1 194.8 L407.1 195.3 L404.9 195.9 L402.5 196.5 L399.9 197.1 L397.0 197.8 L394.0 198.6 L390.8 199.3 L387.4 200.2 L383.9 201.0 L380.2 201.9 L376.4 202.8 L372.4 203.8 L368.3 204.8 L364.1 205.8 L359.8 206.8 L355.5 207.9 L351.0 208.9 L346.5 210.0 L341.9 211.1 L337.3 212.2 L332.7 213.3 L328.1 214.4 L323.5 215.4 L318.9 216.5 L314.3 217.6 L309.7 218.7 L305.2 219.7 L300.8 220.8 L296.5 221.8 L292.2 222.8 L288.1 223.7 L284.0 224.6 L280.1 225.5 L276.4 226.4 L272.7 227.2 L269.3 228.0 L266.0 228.8 L262.8 229.5 L259.9 230.2 L257.2 230.8 L254.6 231.3 L252.3 231.9 L250.1 232.3 L248.2 232.7 L246.6 233.1 L245.1 233.4 L243.9 233.7 L242.9 233.9 L242.2 234.0 L241.7 234.1 L241.4 234.1 L241.2 233.3 L241.1 231.8 L241.3 230.2 L241.7 228.6 L242.3 226.9 L243.2 225.2 L244.3 223.4 L245.6 221.7 L247.2 219.9 L249.0 218.0 L251.0 216.2 L253.3 214.4 L255.7 212.5 L258.4 210.7 L261.3 208.9 L264.3 207.0 L267.5 205.2 L270.9 203.5 L274.5 201.7 L278.2 200.0 L282.1 198.3 L286.1 196.7 L290.2 195.1 L294.4 193.5 L298.7 192.1 L303.1 190.6 L307.6 189.3 L312.1 188.0 L316.7 186.7 L321.3 185.6 L325.9 184.5 L330.6 183.5 L335.2 182.6 L339.8 181.8 L344.4 181.1 L349.0 180.4 L353.5 179.9 L357.9 179.4 L362.2 179.0 L366.5 178.8 L370.6 178.6 L374.7 178.5 L378.6 178.5 L382.3 178.7 L386.0 178.9 L389.4 179.2 L392.7 179.6 L395.8 180.1 L398.8 180.7 L401.5 181.4 L404.0 182.1 L406.4 183.0 L408.5 183.9 L410.4 185.0 L412.0 186.1 L413.4 187.3 L414.6 188.5 L415.6 189.8 L416.3 191.2 L416.8 192.7 M423.5 188.3 L423.3 188.4 L422.9 188.5 L422.3 188.7 L421.4 188.9 L420.2 189.2 L418.8 189.6 L417.2 190.0 L415.2 190.5 L413.1 191.0 L410.7 191.6 L408.1 192.2 L405.3 192.9 L402.2 193.7 L399.0 194.4 L395.6 195.3 L391.9 196.1 L388.1 197.1 L384.2 198.0 L380.1 199.0 L375.8 200.0 L371.4 201.0 L366.9 202.1 L362.3 203.2 L357.7 204.3 L352.9 205.5 L348.0 206.6 L343.1 207.8 L338.2 208.9 L333.3 210.1 L328.3 211.3 L323.3 212.4 L318.4 213.6 L313.5 214.7 L308.6 215.9 L303.8 217.0 L299.1 218.1 L294.4 219.2 L289.9 220.2 L285.4 221.3 L281.1 222.3 L276.9 223.3 L272.8 224.2 L269.0 225.1 L265.2 225.9 L261.7 226.8 L258.4 227.5 L255.2 228.2 L252.3 228.9 L249.5 229.5 L247.0 230.1 L244.7 230.6 L242.7 231.1 L240.9 231.4 L239.4 231.8 L238.1 232.1 L237.0 232.3 L236.2 232.4 L235.7 232.5 L235.4 232.6 L235.2 231.8 L235.1 230.1 L235.3 228.4 L235.7 226.7 L236.4 224.9 L237.3 223.0 L238.5 221.1 L239.9 219.2 L241.6 217.3 L243.6 215.4 L245.7 213.4 L248.2 211.4 L250.8 209.5 L253.6 207.5 L256.7 205.5 L260.0 203.6 L263.5 201.7 L267.1 199.8 L270.9 197.9 L274.9 196.0 L279.0 194.2 L283.3 192.5 L287.7 190.8 L292.3 189.1 L296.9 187.5 L301.6 186.0 L306.4 184.6 L311.2 183.2 L316.2 181.9 L321.1 180.6 L326.1 179.5 L331.0 178.4 L336.0 177.5 L341.0 176.6 L345.9 175.8 L350.8 175.1 L355.6 174.5 L360.3 174.0 L365.0 173.6 L369.6 173.4 L374.0 173.2 L378.3 173.1 L382.5 173.1 L386.6 173.2 L390.4 173.5 L394.1 173.8 L397.7 174.3 L401.0 174.8 L404.2 175.4 L407.1 176.2 L409.8 177.0 L412.3 177.9 L414.6 178.9 L416.6 180.0 L418.4 181.2 L419.9 182.5 L421.2 183.8 L422.2 185.3 L423.0 186.8 L423.5 188.3 M430.2 184.1 L430.1 184.2 L429.7 184.3 L429.0 184.5 L428.0 184.8 L426.8 185.1 L425.3 185.5 L423.5 185.9 L421.5 186.4 L419.2 187.0 L416.6 187.6 L413.8 188.3 L410.8 189.0 L407.6 189.8 L404.1 190.6 L400.4 191.5 L396.5 192.5 L392.5 193.4 L388.3 194.5 L383.9 195.5 L379.3 196.6 L374.6 197.7 L369.8 198.9 L364.9 200.1 L359.9 201.3 L354.8 202.5 L349.6 203.7 L344.4 205.0 L339.1 206.2 L333.9 207.5 L328.5 208.8 L323.3 210.0 L318.0 211.3 L312.7 212.5 L307.5 213.8 L302.4 215.0 L297.3 216.2 L292.3 217.4 L287.5 218.5 L282.7 219.6 L278.1 220.7 L273.6 221.8 L269.3 222.8 L265.2 223.8 L261.2 224.7 L257.4 225.6 L253.8 226.4 L250.5 227.2 L247.3 227.9 L244.4 228.6 L241.7 229.2 L239.3 229.8 L237.1 230.3 L235.2 230.7 L233.6 231.1 L232.2 231.4 L231.1 231.7 L230.2 231.8 L229.6 232.0 L229.4 232.0 L229.2 231.1 L229.0 229.4 L229.2 227.6 L229.6 225.7 L230.3 223.8 L231.3 221.8 L232.6 219.8 L234.1 217.7 L236.0 215.7 L238.0 213.6 L240.3 211.5 L242.9 209.4 L245.7 207.3 L248.8 205.2 L252.1 203.0 L255.5 201.0 L259.2 198.9 L263.1 196.8 L267.2 194.8 L271.5 192.8 L275.9 190.9 L280.5 189.0 L285.2 187.2 L290.0 185.4 L294.9 183.7 L300.0 182.1 L305.1 180.5 L310.3 179.0 L315.5 177.6 L320.8 176.2 L326.1 175.0 L331.4 173.9 L336.7 172.8 L342.0 171.8 L347.3 171.0 L352.5 170.2 L357.7 169.6 L362.7 169.1 L367.7 168.6 L372.6 168.3 L377.3 168.1 L382.0 168.0 L386.4 168.0 L390.8 168.1 L394.9 168.4 L398.9 168.7 L402.6 169.2 L406.2 169.8 L409.6 170.4 L412.7 171.2 L415.6 172.1 L418.3 173.1 L420.7 174.1 L422.9 175.3 L424.8 176.6 L426.4 177.9 L427.8 179.4 L428.9 180.9 L429.7 182.5 L430.2 184.1 M437.2 180.3 L437.1 180.3 L436.6 180.4 L435.9 180.6 L434.8 180.9 L433.5 181.2 L431.9 181.7 L430.0 182.1 L427.8 182.7 L425.4 183.3 L422.7 184.0 L419.7 184.7 L416.5 185.5 L413.0 186.4 L409.3 187.3 L405.4 188.2 L401.3 189.3 L397.0 190.3 L392.5 191.4 L387.8 192.6 L383.0 193.8 L378.0 195.0 L372.8 196.3 L367.6 197.5 L362.3 198.9 L356.8 200.2 L351.3 201.5 L345.8 202.9 L340.2 204.3 L334.5 205.7 L328.9 207.0 L323.2 208.4 L317.6 209.8 L312.0 211.2 L306.5 212.5 L301.0 213.8 L295.6 215.2 L290.3 216.4 L285.2 217.7 L280.1 218.9 L275.2 220.1 L270.4 221.3 L265.8 222.4 L261.4 223.5 L257.2 224.5 L253.2 225.5 L249.3 226.4 L245.8 227.3 L242.4 228.1 L239.3 228.8 L236.5 229.5 L233.9 230.1 L231.6 230.7 L229.5 231.2 L227.8 231.6 L226.3 231.9 L225.1 232.2 L224.2 232.4 L223.6 232.5 L223.3 232.6 L223.1 231.7 L222.9 229.8 L223.1 227.9 L223.5 225.9 L224.3 223.8 L225.3 221.7 L226.7 219.6 L228.3 217.4 L230.2 215.2 L232.4 212.9 L234.9 210.7 L237.6 208.4 L240.6 206.1 L243.8 203.8 L247.3 201.6 L251.0 199.3 L254.9 197.1 L259.1 194.9 L263.4 192.7 L268.0 190.6 L272.6 188.5 L277.5 186.4 L282.5 184.5 L287.7 182.5 L292.9 180.7 L298.3 178.9 L303.7 177.2 L309.2 175.6 L314.8 174.0 L320.4 172.6 L326.1 171.2 L331.8 169.9 L337.4 168.8 L343.1 167.7 L348.7 166.8 L354.2 166.0 L359.7 165.2 L365.1 164.6 L370.4 164.1 L375.6 163.8 L380.7 163.5 L385.6 163.4 L390.4 163.4 L395.0 163.5 L399.4 163.7 L403.6 164.0 L407.7 164.5 L411.5 165.1 L415.1 165.8 L418.4 166.6 L421.5 167.5 L424.4 168.5 L427.0 169.7 L429.3 170.9 L431.3 172.3 L433.1 173.7 L434.5 175.2 L435.7 176.8 L436.6 178.5 L437.2 180.3 M444.3 176.7 L444.2 176.8 L443.7 176.9 L442.9 177.1 L441.8 177.4 L440.4 177.7 L438.7 178.2 L436.7 178.7 L434.3 179.3 L431.7 179.9 L428.9 180.7 L425.7 181.5 L422.3 182.3 L418.6 183.3 L414.7 184.3 L410.6 185.3 L406.2 186.4 L401.6 187.6 L396.8 188.8 L391.8 190.1 L386.7 191.4 L381.4 192.7 L376.0 194.1 L370.4 195.5 L364.7 196.9 L359.0 198.4 L353.1 199.8 L347.2 201.3 L341.3 202.8 L335.3 204.3 L329.3 205.8 L323.3 207.3 L317.3 208.8 L311.4 210.3 L305.5 211.8 L299.7 213.3 L294.0 214.7 L288.4 216.1 L282.9 217.5 L277.5 218.9 L272.3 220.2 L267.2 221.4 L262.4 222.7 L257.7 223.8 L253.2 225.0 L248.9 226.0 L244.9 227.0 L241.1 228.0 L237.5 228.9 L234.2 229.7 L231.2 230.5 L228.5 231.1 L226.0 231.7 L223.8 232.3 L222.0 232.7 L220.4 233.1 L219.2 233.4 L218.2 233.7 L217.6 233.8 L217.3 233.9 L217.0 232.9 L216.8 230.9 L217.0 228.9 L217.5 226.7 L218.2 224.5 L219.3 222.3 L220.8 220.0 L222.5 217.7 L224.5 215.3 L226.8 212.9 L229.4 210.5 L232.3 208.1 L235.4 205.6 L238.9 203.2 L242.6 200.7 L246.5 198.3 L250.6 195.9 L255.0 193.5 L259.6 191.2 L264.4 188.9 L269.4 186.6 L274.6 184.4 L279.9 182.3 L285.3 180.2 L290.9 178.2 L296.6 176.2 L302.4 174.4 L308.2 172.6 L314.1 170.9 L320.1 169.3 L326.1 167.9 L332.1 166.5 L338.1 165.2 L344.1 164.1 L350.1 163.0 L356.0 162.1 L361.8 161.3 L367.5 160.6 L373.2 160.0 L378.7 159.6 L384.1 159.3 L389.3 159.1 L394.4 159.1 L399.3 159.1 L404.0 159.4 L408.5 159.7 L412.8 160.2 L416.9 160.7 L420.7 161.5 L424.2 162.3 L427.5 163.2 L430.6 164.3 L433.3 165.5 L435.8 166.8 L438.0 168.2 L439.9 169.7 L441.4 171.3 L442.7 173.0 L443.7 174.8 L444.3 176.7 M451.6 173.4 L451.4 173.4 L450.9 173.5 L450.1 173.8 L448.9 174.1 L447.4 174.5 L445.6 174.9 L443.4 175.5 L441.0 176.1 L438.2 176.8 L435.2 177.6 L431.9 178.5 L428.2 179.4 L424.3 180.4 L420.2 181.5 L415.8 182.6 L411.2 183.8 L406.3 185.1 L401.3 186.4 L396.0 187.8 L390.6 189.2 L385.0 190.6 L379.2 192.1 L373.3 193.6 L367.3 195.2 L361.2 196.7 L355.0 198.3 L348.8 200.0 L342.5 201.6 L336.1 203.2 L329.8 204.9 L323.4 206.5 L317.1 208.1 L310.9 209.7 L304.6 211.3 L298.5 212.9 L292.4 214.5 L286.5 216.0 L280.7 217.5 L275.0 219.0 L269.5 220.4 L264.1 221.8 L258.9 223.1 L254.0 224.4 L249.2 225.6 L244.7 226.8 L240.4 227.9 L236.4 228.9 L232.7 229.9 L229.2 230.8 L226.0 231.6 L223.1 232.3 L220.5 233.0 L218.2 233.6 L216.2 234.1 L214.5 234.5 L213.2 234.8 L212.2 235.1 L211.5 235.3 L211.2 235.4 L210.9 234.3 L210.7 232.2 L210.9 230.0 L211.4 227.8 L212.2 225.4 L213.3 223.1 L214.8 220.6 L216.6 218.1 L218.8 215.6 L221.2 213.0 L223.9 210.5 L227.0 207.9 L230.3 205.3 L233.9 202.7 L237.8 200.1 L242.0 197.5 L246.4 194.9 L251.0 192.4 L255.9 189.8 L260.9 187.4 L266.2 184.9 L271.6 182.6 L277.3 180.3 L283.0 178.0 L288.9 175.9 L294.9 173.8 L301.1 171.8 L307.3 169.8 L313.5 168.0 L319.9 166.3 L326.2 164.7 L332.6 163.2 L338.9 161.8 L345.3 160.6 L351.6 159.4 L357.8 158.4 L364.0 157.5 L370.1 156.7 L376.1 156.1 L381.9 155.6 L387.6 155.3 L393.2 155.0 L398.5 155.0 L403.7 155.0 L408.7 155.2 L413.5 155.5 L418.0 156.0 L422.4 156.6 L426.4 157.3 L430.2 158.2 L433.7 159.2 L436.9 160.3 L439.9 161.6 L442.5 162.9 L444.8 164.4 L446.8 166.0 L448.5 167.7 L449.8 169.5 L450.9 171.4 L451.6 173.4 M458.9 170.2 L458.7 170.3 L458.2 170.4 L457.3 170.6 L456.1 170.9 L454.5 171.4 L452.6 171.9 L450.3 172.5 L447.7 173.1 L444.8 173.9 L441.6 174.7 L438.1 175.7 L434.3 176.7 L430.2 177.7 L425.8 178.9 L421.1 180.1 L416.2 181.4 L411.1 182.7 L405.8 184.1 L400.2 185.6 L394.5 187.1 L388.6 188.6 L382.5 190.2 L376.3 191.8 L369.9 193.5 L363.5 195.2 L357.0 196.9 L350.4 198.6 L343.7 200.4 L337.0 202.1 L330.3 203.9 L323.6 205.6 L317.0 207.4 L310.3 209.1 L303.8 210.8 L297.3 212.5 L290.9 214.2 L284.6 215.8 L278.5 217.4 L272.5 219.0 L266.6 220.5 L261.0 222.0 L255.5 223.4 L250.3 224.8 L245.3 226.1 L240.5 227.3 L236.0 228.5 L231.7 229.6 L227.8 230.7 L224.1 231.6 L220.7 232.5 L217.7 233.3 L214.9 234.0 L212.5 234.7 L210.4 235.2 L208.7 235.7 L207.3 236.0 L206.2 236.3 L205.5 236.5 L205.1 236.6 L204.9 235.5 L204.7 233.3 L204.8 230.9 L205.3 228.6 L206.2 226.1 L207.4 223.6 L208.9 221.0 L210.8 218.3 L213.1 215.7 L215.6 213.0 L218.5 210.2 L221.7 207.5 L225.2 204.7 L229.0 201.9 L233.1 199.2 L237.5 196.4 L242.2 193.7 L247.0 191.0 L252.2 188.3 L257.5 185.7 L263.1 183.1 L268.8 180.6 L274.7 178.1 L280.8 175.7 L287.1 173.4 L293.4 171.2 L299.9 169.0 L306.4 167.0 L313.0 165.1 L319.7 163.2 L326.4 161.5 L333.1 159.9 L339.9 158.4 L346.5 157.0 L353.2 155.8 L359.8 154.7 L366.3 153.8 L372.7 152.9 L379.1 152.2 L385.2 151.7 L391.3 151.3 L397.1 151.1 L402.8 151.0 L408.3 151.0 L413.6 151.2 L418.6 151.5 L423.4 152.0 L428.0 152.6 L432.3 153.4 L436.3 154.3 L440.0 155.3 L443.4 156.5 L446.5 157.8 L449.3 159.2 L451.7 160.8 L453.9 162.4 L455.6 164.2 L457.1 166.1 L458.2 168.1 L458.9 170.2 M464.4 167.9 L464.3 168.0 L463.7 168.1 L462.8 168.3 L461.5 168.7 L459.9 169.1 L457.9 169.6 L455.5 170.3 L452.8 171.0 L449.8 171.8 L446.5 172.6 L442.8 173.6 L438.8 174.6 L434.6 175.8 L430.0 177.0 L425.2 178.2 L420.1 179.6 L414.8 181.0 L409.2 182.4 L403.4 184.0 L397.5 185.5 L391.3 187.2 L385.0 188.8 L378.5 190.5 L371.9 192.3 L365.2 194.0 L358.5 195.8 L351.6 197.6 L344.7 199.4 L337.7 201.3 L330.8 203.1 L323.8 204.9 L316.9 206.8 L310.0 208.6 L303.1 210.4 L296.4 212.1 L289.7 213.9 L283.2 215.6 L276.8 217.3 L270.6 218.9 L264.5 220.5 L258.6 222.1 L253.0 223.6 L247.5 225.0 L242.3 226.4 L237.4 227.7 L232.7 228.9 L228.3 230.1 L224.1 231.2 L220.3 232.2 L216.8 233.1 L213.6 233.9 L210.8 234.7 L208.2 235.3 L206.1 235.9 L204.3 236.4 L202.8 236.8 L201.7 237.1 L201.0 237.2 L200.6 237.3 L200.3 236.2 L200.1 233.9 L200.2 231.5 L200.8 229.0 L201.6 226.4 L202.9 223.8 L204.5 221.1 L206.5 218.4 L208.8 215.6 L211.5 212.8 L214.5 209.9 L217.8 207.1 L221.4 204.2 L225.4 201.3 L229.7 198.4 L234.2 195.5 L239.0 192.7 L244.1 189.9 L249.4 187.1 L255.0 184.3 L260.8 181.6 L266.7 179.0 L272.9 176.4 L279.2 173.9 L285.7 171.5 L292.3 169.2 L299.0 167.0 L305.8 164.8 L312.7 162.8 L319.6 160.9 L326.6 159.1 L333.6 157.4 L340.6 155.8 L347.6 154.4 L354.5 153.1 L361.3 152.0 L368.1 150.9 L374.8 150.1 L381.4 149.4 L387.8 148.8 L394.1 148.4 L400.2 148.1 L406.1 148.0 L411.8 148.0 L417.3 148.2 L422.5 148.5 L427.5 149.0 L432.3 149.6 L436.7 150.4 L440.9 151.4 L444.7 152.4 L448.3 153.6 L451.5 155.0 L454.4 156.5 L457.0 158.1 L459.2 159.8 L461.0 161.7 L462.5 163.6 L463.7 165.7 L464.4 167.9 M470.0 165.6 L469.8 165.7 L469.2 165.8 L468.3 166.1 L467.0 166.4 L465.3 166.9 L463.2 167.4 L460.7 168.1 L458.0 168.8 L454.8 169.6 L451.3 170.6 L447.5 171.6 L443.4 172.7 L439.0 173.8 L434.2 175.1 L429.2 176.4 L424.0 177.8 L418.4 179.3 L412.6 180.8 L406.7 182.4 L400.5 184.0 L394.1 185.7 L387.5 187.4 L380.8 189.2 L374.0 191.0 L367.0 192.9 L359.9 194.7 L352.8 196.6 L345.6 198.5 L338.4 200.4 L331.2 202.3 L324.0 204.2 L316.8 206.1 L309.6 208.0 L302.5 209.9 L295.5 211.8 L288.6 213.6 L281.8 215.4 L275.2 217.1 L268.7 218.9 L262.4 220.5 L256.3 222.1 L250.4 223.7 L244.8 225.2 L239.4 226.6 L234.2 228.0 L229.4 229.3 L224.8 230.5 L220.5 231.6 L216.5 232.7 L212.9 233.6 L209.6 234.5 L206.6 235.3 L204.0 236.0 L201.7 236.6 L199.8 237.1 L198.3 237.5 L197.2 237.8 L196.4 238.0 L196.0 238.1 L195.7 236.9 L195.5 234.5 L195.7 232.0 L196.2 229.4 L197.1 226.7 L198.4 224.0 L200.1 221.2 L202.1 218.4 L204.5 215.5 L207.3 212.5 L210.4 209.6 L213.9 206.6 L217.7 203.6 L221.8 200.6 L226.2 197.6 L230.9 194.6 L235.9 191.6 L241.2 188.7 L246.7 185.8 L252.5 182.9 L258.5 180.1 L264.7 177.4 L271.1 174.7 L277.6 172.1 L284.4 169.6 L291.2 167.2 L298.2 164.8 L305.3 162.6 L312.4 160.5 L319.6 158.5 L326.8 156.6 L334.1 154.9 L341.4 153.2 L348.6 151.7 L355.8 150.4 L362.9 149.2 L369.9 148.1 L376.9 147.2 L383.7 146.5 L390.4 145.9 L396.9 145.4 L403.2 145.1 L409.4 145.0 L415.3 145.0 L421.0 145.2 L426.4 145.6 L431.6 146.1 L436.5 146.7 L441.2 147.5 L445.5 148.5 L449.5 149.6 L453.2 150.8 L456.6 152.2 L459.6 153.8 L462.2 155.4 L464.5 157.2 L466.5 159.2 L468.0 161.2 L469.2 163.4 L470.0 165.6" stroke="#58e040"/>
<path d="M206.3 236.4 L208.8 235.9 L211.4 235.3 L214.0 234.7 L216.5 234.1 L219.1 233.4 L221.7 232.9 L224.2 232.4 L226.8 232.1 L229.4 232.0 L231.9 232.1 L234.5 232.4 L237.1 232.9 L239.6 233.5 L242.1 234.3 L244.6 235.2 L247.1 236.2 L249.6 237.3 L252.0 238.5 L254.3 239.7 L256.7 240.9 L259.0 242.2 L261.2 243.5 L263.4 244.9 L265.6 246.4 L267.7 247.9 L269.8 249.4 L271.8 251.1 L273.8 252.7 L275.8 254.5 L277.6 256.3 L279.5 258.2 L281.2 260.2 L282.9 262.2 L284.5 264.2 L286.0 266.3 L287.4 268.5 L288.8 270.7 L290.2 273.0 L291.5 275.2 L292.7 277.5 L294.0 279.8 L295.2 282.2 L296.4 284.5 L297.5 286.9 L298.5 289.3 L299.3 291.8 L300.0 294.3 L300.5 296.8 L300.9 299.4 L301.3 302.0 L301.6 304.6 L301.9 307.2 L302.2 309.8 L302.5 312.4 L302.8 315.0 M457.5 170.8 L454.3 172.1 L451.2 173.5 L448.2 174.9 L445.1 176.3 L442.1 177.8 L439.1 179.3 L436.1 180.9 L433.1 182.5 L430.2 184.2 L427.3 185.9 L424.4 187.7 L421.6 189.5 L418.7 191.4 L415.9 193.3 L413.1 195.2 L410.3 197.1 L407.5 199.0 L404.7 200.9 L402.0 202.9 L399.2 204.9 L396.5 207.0 L393.9 209.1 L391.3 211.2 L388.7 213.4 L386.3 215.7 L383.9 218.1 L381.6 220.6 L379.4 223.1 L377.2 225.7 L375.1 228.4 L373.1 231.1 L371.1 233.9 L369.2 236.7 L367.4 239.5 L365.6 242.4 L363.8 245.3 L362.2 248.3 L360.6 251.3 L359.1 254.3 L357.7 257.3 L356.4 260.5 L355.1 263.6 L353.9 266.8 L352.7 269.9 L351.6 273.1 L350.5 276.3 L349.5 279.6 L348.5 282.8 L347.6 286.1 L346.7 289.3 L346.0 292.6 L345.3 295.9 L344.8 299.3 L344.4 302.6 L344.0 306.0" stroke="#30f030" stroke-width="2.6"/>
<path d="M346.4 311.6 L346.2 314.9 L346.0 318.1 L345.8 321.3 L345.6 324.6 L345.4 327.8 L345.2 331.0 L345.0 334.3 L344.9 337.5 L344.7 340.7 L344.6 343.9 L344.5 347.2 L344.4 350.4 L344.3 353.7 L344.2 356.9 L344.1 360.1 L344.1 363.4 L344.1 366.6 L344.1 369.8 L344.1 373.1 L344.1 376.3 L344.2 379.6 L344.2 382.8 L344.3 386.0 L344.4 389.3 L344.5 392.5 L344.6 395.8 L344.7 399.0 L344.8 402.3 L344.9 405.5 M345.8 312.9 L345.5 316.1 L345.3 319.4 L345.1 322.6 L344.9 325.9 L344.7 329.1 L344.5 332.3 L344.4 335.6 L344.2 338.8 L344.0 342.1 L343.9 345.3 L343.8 348.6 L343.7 351.9 L343.6 355.1 L343.5 358.4 L343.5 361.6 L343.4 364.9 L343.4 368.2 L343.4 371.4 L343.4 374.7 L343.4 378.0 L343.5 381.2 L343.5 384.5 L343.6 387.8 L343.7 391.1 L343.7 394.3 L343.8 397.6 L343.9 400.9 L344.0 404.2 L344.1 407.5 M344.4 314.1 L344.2 317.3 L344.0 320.6 L343.8 323.8 L343.6 327.1 L343.4 330.4 L343.2 333.6 L343.1 336.9 L342.9 340.1 L342.7 343.4 L342.6 346.7 L342.5 349.9 L342.4 353.2 L342.3 356.5 L342.2 359.8 L342.1 363.1 L342.1 366.3 L342.1 369.6 L342.0 372.9 L342.0 376.2 L342.1 379.5 L342.1 382.8 L342.1 386.1 L342.2 389.4 L342.2 392.8 L342.3 396.1 L342.4 399.4 L342.4 402.7 L342.5 406.0 L342.6 409.3 M342.5 315.2 L342.3 318.4 L342.1 321.7 L341.9 325.0 L341.7 328.2 L341.5 331.5 L341.3 334.8 L341.2 338.1 L341.0 341.3 L340.8 344.6 L340.7 347.9 L340.6 351.2 L340.5 354.5 L340.4 357.8 L340.3 361.1 L340.2 364.4 L340.1 367.7 L340.1 371.0 L340.1 374.3 L340.0 377.6 L340.0 381.0 L340.0 384.3 L340.1 387.6 L340.1 391.0 L340.1 394.3 L340.2 397.7 L340.2 401.0 L340.3 404.4 L340.3 407.7 L340.4 411.1 M340.1 316.1 L339.9 319.4 L339.7 322.7 L339.5 326.0 L339.3 329.3 L339.1 332.5 L338.9 335.8 L338.7 339.1 L338.6 342.4 L338.4 345.7 L338.2 349.0 L338.1 352.3 L338.0 355.6 L337.9 358.9 L337.8 362.2 L337.7 365.5 L337.6 368.9 L337.6 372.2 L337.5 375.5 L337.5 378.9 L337.4 382.2 L337.4 385.6 L337.4 389.0 L337.4 392.3 L337.4 395.7 L337.4 399.1 L337.5 402.5 L337.5 405.8 L337.5 409.2 L337.5 412.6 M337.1 316.9 L336.9 320.2 L336.7 323.5 L336.5 326.8 L336.3 330.1 L336.2 333.4 L336.0 336.7 L335.8 340.0 L335.6 343.3 L335.5 346.6 L335.3 349.9 L335.2 353.2 L335.1 356.5 L334.9 359.9 L334.8 363.2 L334.7 366.5 L334.6 369.9 L334.5 373.2 L334.5 376.6 L334.4 379.9 L334.3 383.3 L334.3 386.7 L334.3 390.1 L334.2 393.5 L334.2 396.9 L334.2 400.3 L334.2 403.7 L334.1 407.1 L334.1 410.5 L334.1 413.9 M333.8 317.6 L333.6 320.9 L333.4 324.2 L333.2 327.5 L333.0 330.8 L332.9 334.1 L332.7 337.4 L332.5 340.7 L332.3 344.0 L332.2 347.3 L332.0 350.6 L331.9 353.9 L331.7 357.3 L331.6 360.6 L331.5 363.9 L331.3 367.3 L331.2 370.6 L331.1 374.0 L331.0 377.4 L330.9 380.8 L330.8 384.2 L330.8 387.5 L330.7 390.9 L330.6 394.4 L330.6 397.8 L330.5 401.2 L330.4 404.6 L330.4 408.0 L330.3 411.5 L330.3 414.9 M330.2 318.0 L330.0 321.3 L329.8 324.6 L329.6 327.9 L329.5 331.2 L329.3 334.5 L329.1 337.8 L328.9 341.1 L328.8 344.4 L328.6 347.8 L328.4 351.1 L328.3 354.4 L328.1 357.8 L328.0 361.1 L327.8 364.5 L327.7 367.8 L327.6 371.2 L327.4 374.6 L327.3 377.9 L327.2 381.3 L327.0 384.7 L326.9 388.1 L326.8 391.5 L326.7 395.0 L326.6 398.4 L326.5 401.8 L326.4 405.3 L326.3 408.7 L326.2 412.1 L326.1 415.6 M326.4 318.2 L326.2 321.5 L326.1 324.8 L325.9 328.1 L325.7 331.4 L325.5 334.7 L325.4 338.1 L325.2 341.4 L325.0 344.7 L324.9 348.0 L324.7 351.3 L324.5 354.7 L324.3 358.0 L324.2 361.4 L324.0 364.7 L323.9 368.1 L323.7 371.4 L323.5 374.8 L323.4 378.2 L323.2 381.6 L323.1 385.0 L322.9 388.4 L322.8 391.8 L322.6 395.3 L322.5 398.7 L322.3 402.1 L322.2 405.6 L322.0 409.0 L321.9 412.5 L321.7 415.9 M322.6 318.2 L322.4 321.5 L322.2 324.8 L322.1 328.1 L321.9 331.4 L321.7 334.7 L321.6 338.1 L321.4 341.4 L321.2 344.7 L321.0 348.0 L320.9 351.3 L320.7 354.7 L320.5 358.0 L320.3 361.4 L320.2 364.7 L320.0 368.1 L319.8 371.4 L319.6 374.8 L319.4 378.2 L319.2 381.6 L319.0 385.0 L318.8 388.4 L318.6 391.8 L318.5 395.3 L318.3 398.7 L318.1 402.1 L317.9 405.6 L317.7 409.0 L317.5 412.5 L317.3 415.9 M318.8 318.0 L318.6 321.3 L318.5 324.6 L318.3 327.9 L318.2 331.2 L318.0 334.5 L317.8 337.8 L317.6 341.1 L317.5 344.4 L317.3 347.8 L317.1 351.1 L316.9 354.4 L316.7 357.8 L316.5 361.1 L316.3 364.5 L316.1 367.8 L315.9 371.2 L315.7 374.6 L315.5 377.9 L315.3 381.3 L315.1 384.7 L314.8 388.1 L314.6 391.5 L314.4 395.0 L314.1 398.4 L313.9 401.8 L313.6 405.3 L313.4 408.7 L313.1 412.1 L312.9 415.6 M315.2 317.6 L315.0 320.9 L314.9 324.2 L314.7 327.5 L314.6 330.8 L314.4 334.1 L314.2 337.4 L314.1 340.7 L313.9 344.0 L313.7 347.3 L313.5 350.6 L313.3 353.9 L313.1 357.3 L312.9 360.6 L312.7 363.9 L312.5 367.3 L312.3 370.6 L312.0 374.0 L311.8 377.4 L311.5 380.8 L311.3 384.2 L311.0 387.5 L310.7 390.9 L310.4 394.4 L310.2 397.8 L309.9 401.2 L309.6 404.6 L309.3 408.0 L309.0 411.5 L308.7 414.9 M311.9 316.9 L311.7 320.2 L311.6 323.5 L311.4 326.8 L311.3 330.1 L311.1 333.4 L311.0 336.7 L310.8 340.0 L310.6 343.3 L310.4 346.6 L310.2 349.9 L310.0 353.2 L309.8 356.5 L309.6 359.9 L309.4 363.2 L309.1 366.5 L308.9 369.9 L308.6 373.2 L308.3 376.6 L308.1 379.9 L307.8 383.3 L307.5 386.7 L307.2 390.1 L306.8 393.5 L306.5 396.9 L306.2 400.3 L305.9 403.7 L305.5 407.1 L305.2 410.5 L304.9 413.9 M308.9 316.1 L308.8 319.4 L308.7 322.7 L308.5 326.0 L308.4 329.3 L308.2 332.5 L308.0 335.8 L307.9 339.1 L307.7 342.4 L307.5 345.7 L307.3 349.0 L307.1 352.3 L306.9 355.6 L306.6 358.9 L306.4 362.2 L306.1 365.5 L305.9 368.9 L305.6 372.2 L305.3 375.5 L305.0 378.9 L304.7 382.2 L304.3 385.6 L304.0 389.0 L303.7 392.3 L303.3 395.7 L302.9 399.1 L302.6 402.5 L302.2 405.8 L301.8 409.2 L301.5 412.6 M306.5 315.2 L306.3 318.4 L306.2 321.7 L306.1 325.0 L305.9 328.2 L305.8 331.5 L305.6 334.8 L305.4 338.1 L305.2 341.3 L305.1 344.6 L304.9 347.9 L304.6 351.2 L304.4 354.5 L304.2 357.8 L303.9 361.1 L303.6 364.4 L303.4 367.7 L303.1 371.0 L302.7 374.3 L302.4 377.6 L302.1 381.0 L301.7 384.3 L301.4 387.6 L301.0 391.0 L300.6 394.3 L300.2 397.7 L299.8 401.0 L299.4 404.4 L299.0 407.7 L298.6 411.1 M304.6 314.1 L304.4 317.3 L304.3 320.6 L304.1 323.8 L304.0 327.1 L303.9 330.4 L303.7 333.6 L303.5 336.9 L303.3 340.1 L303.2 343.4 L302.9 346.7 L302.7 349.9 L302.5 353.2 L302.2 356.5 L302.0 359.8 L301.7 363.1 L301.4 366.3 L301.1 369.6 L300.8 372.9 L300.4 376.2 L300.1 379.5 L299.7 382.8 L299.3 386.1 L298.9 389.4 L298.5 392.8 L298.1 396.1 L297.7 399.4 L297.2 402.7 L296.8 406.0 L296.4 409.3 M303.2 312.9 L303.1 316.1 L303.0 319.4 L302.8 322.6 L302.7 325.9 L302.6 329.1 L302.4 332.3 L302.2 335.6 L302.0 338.8 L301.8 342.1 L301.6 345.3 L301.4 348.6 L301.2 351.9 L300.9 355.1 L300.7 358.4 L300.4 361.6 L300.1 364.9 L299.7 368.2 L299.4 371.4 L299.0 374.7 L298.7 378.0 L298.3 381.2 L297.9 384.5 L297.5 387.8 L297.1 391.1 L296.6 394.3 L296.2 397.6 L295.8 400.9 L295.3 404.2 L294.9 407.5 M302.6 311.6 L302.5 314.9 L302.3 318.1 L302.2 321.3 L302.0 324.6 L301.9 327.8 L301.7 331.0 L301.6 334.3 L301.4 337.5 L301.2 340.7 L301.0 343.9 L300.8 347.2 L300.5 350.4 L300.3 353.7 L300.0 356.9 L299.7 360.1 L299.4 363.4 L299.0 366.6 L298.7 369.8 L298.3 373.1 L298.0 376.3 L297.6 379.6 L297.2 382.8 L296.8 386.0 L296.3 389.3 L295.9 392.5 L295.5 395.8 L295.0 399.0 L294.6 402.3 L294.1 405.5 M302.6 310.4 L302.5 313.6 L302.3 316.8 L302.2 320.0 L302.0 323.2 L301.9 326.5 L301.7 329.7 L301.6 332.9 L301.4 336.1 L301.2 339.3 L301.0 342.5 L300.8 345.7 L300.5 349.0 L300.3 352.2 L300.0 355.4 L299.7 358.6 L299.4 361.8 L299.0 365.0 L298.7 368.2 L298.3 371.4 L298.0 374.6 L297.6 377.9 L297.2 381.1 L296.8 384.3 L296.3 387.5 L295.9 390.7 L295.5 393.9 L295.0 397.1 L294.6 400.3 L294.1 403.5 M303.2 309.1 L303.1 312.3 L303.0 315.5 L302.8 318.7 L302.7 321.9 L302.6 325.1 L302.4 328.3 L302.2 331.5 L302.0 334.7 L301.8 337.9 L301.6 341.1 L301.4 344.3 L301.2 347.5 L300.9 350.7 L300.7 353.9 L300.4 357.1 L300.1 360.3 L299.7 363.5 L299.4 366.6 L299.0 369.8 L298.7 373.0 L298.3 376.2 L297.9 379.4 L297.5 382.5 L297.1 385.7 L296.6 388.9 L296.2 392.0 L295.8 395.2 L295.3 398.4 L294.9 401.5 M304.6 307.9 L304.4 311.1 L304.3 314.3 L304.1 317.5 L304.0 320.7 L303.9 323.9 L303.7 327.1 L303.5 330.3 L303.3 333.4 L303.2 336.6 L302.9 339.8 L302.7 343.0 L302.5 346.2 L302.2 349.3 L302.0 352.5 L301.7 355.7 L301.4 358.8 L301.1 362.0 L300.8 365.1 L300.4 368.3 L300.1 371.4 L299.7 374.6 L299.3 377.7 L298.9 380.9 L298.5 384.0 L298.1 387.1 L297.7 390.3 L297.2 393.4 L296.8 396.5 L296.4 399.7 M306.5 306.8 L306.3 310.0 L306.2 313.2 L306.1 316.4 L305.9 319.6 L305.8 322.7 L305.6 325.9 L305.4 329.1 L305.2 332.2 L305.1 335.4 L304.9 338.6 L304.6 341.7 L304.4 344.9 L304.2 348.1 L303.9 351.2 L303.6 354.3 L303.4 357.5 L303.1 360.6 L302.7 363.7 L302.4 366.9 L302.1 370.0 L301.7 373.1 L301.4 376.2 L301.0 379.3 L300.6 382.4 L300.2 385.5 L299.8 388.6 L299.4 391.7 L299.0 394.8 L298.6 397.9 M308.9 305.9 L308.8 309.0 L308.7 312.2 L308.5 315.4 L308.4 318.5 L308.2 321.7 L308.0 324.9 L307.9 328.0 L307.7 331.2 L307.5 334.3 L307.3 337.5 L307.1 340.6 L306.9 343.8 L306.6 346.9 L306.4 350.1 L306.1 353.2 L305.9 356.3 L305.6 359.4 L305.3 362.5 L305.0 365.6 L304.7 368.7 L304.3 371.8 L304.0 374.9 L303.7 378.0 L303.3 381.1 L302.9 384.1 L302.6 387.2 L302.2 390.3 L301.8 393.3 L301.5 396.4 M311.9 305.1 L311.7 308.2 L311.6 311.4 L311.4 314.5 L311.3 317.7 L311.1 320.8 L311.0 324.0 L310.8 327.2 L310.6 330.3 L310.4 333.4 L310.2 336.6 L310.0 339.7 L309.8 342.8 L309.6 346.0 L309.4 349.1 L309.1 352.2 L308.9 355.3 L308.6 358.4 L308.3 361.5 L308.1 364.6 L307.8 367.6 L307.5 370.7 L307.2 373.8 L306.8 376.8 L306.5 379.9 L306.2 382.9 L305.9 386.0 L305.5 389.0 L305.2 392.1 L304.9 395.1 M315.2 304.4 L315.0 307.6 L314.9 310.7 L314.7 313.9 L314.6 317.0 L314.4 320.2 L314.2 323.3 L314.1 326.5 L313.9 329.6 L313.7 332.7 L313.5 335.9 L313.3 339.0 L313.1 342.1 L312.9 345.2 L312.7 348.3 L312.5 351.4 L312.3 354.5 L312.0 357.6 L311.8 360.7 L311.5 363.8 L311.3 366.8 L311.0 369.9 L310.7 372.9 L310.4 376.0 L310.2 379.0 L309.9 382.0 L309.6 385.0 L309.3 388.1 L309.0 391.1 L308.7 394.1 M318.8 304.0 L318.6 307.1 L318.5 310.3 L318.3 313.4 L318.2 316.6 L318.0 319.7 L317.8 322.9 L317.6 326.0 L317.5 329.1 L317.3 332.3 L317.1 335.4 L316.9 338.5 L316.7 341.6 L316.5 344.7 L316.3 347.8 L316.1 350.9 L315.9 354.0 L315.7 357.1 L315.5 360.1 L315.3 363.2 L315.1 366.2 L314.8 369.3 L314.6 372.3 L314.4 375.4 L314.1 378.4 L313.9 381.4 L313.6 384.4 L313.4 387.4 L313.1 390.4 L312.9 393.4 M322.6 303.8 L322.4 306.9 L322.2 310.1 L322.1 313.2 L321.9 316.4 L321.7 319.5 L321.6 322.6 L321.4 325.8 L321.2 328.9 L321.0 332.0 L320.9 335.1 L320.7 338.3 L320.5 341.4 L320.3 344.5 L320.2 347.6 L320.0 350.6 L319.8 353.7 L319.6 356.8 L319.4 359.9 L319.2 362.9 L319.0 366.0 L318.8 369.0 L318.6 372.0 L318.5 375.0 L318.3 378.1 L318.1 381.1 L317.9 384.1 L317.7 387.1 L317.5 390.1 L317.3 393.1 M326.4 303.8 L326.2 306.9 L326.1 310.1 L325.9 313.2 L325.7 316.4 L325.5 319.5 L325.4 322.6 L325.2 325.8 L325.0 328.9 L324.9 332.0 L324.7 335.1 L324.5 338.3 L324.3 341.4 L324.2 344.5 L324.0 347.6 L323.9 350.6 L323.7 353.7 L323.5 356.8 L323.4 359.9 L323.2 362.9 L323.1 366.0 L322.9 369.0 L322.8 372.0 L322.6 375.0 L322.5 378.1 L322.3 381.1 L322.2 384.1 L322.0 387.1 L321.9 390.1 L321.7 393.1 M330.2 304.0 L330.0 307.1 L329.8 310.3 L329.6 313.4 L329.5 316.6 L329.3 319.7 L329.1 322.9 L328.9 326.0 L328.8 329.1 L328.6 332.3 L328.4 335.4 L328.3 338.5 L328.1 341.6 L328.0 344.7 L327.8 347.8 L327.7 350.9 L327.6 354.0 L327.4 357.1 L327.3 360.1 L327.2 363.2 L327.0 366.2 L326.9 369.3 L326.8 372.3 L326.7 375.4 L326.6 378.4 L326.5 381.4 L326.4 384.4 L326.3 387.4 L326.2 390.4 L326.1 393.4 M333.8 304.4 L333.6 307.6 L333.4 310.7 L333.2 313.9 L333.0 317.0 L332.9 320.2 L332.7 323.3 L332.5 326.5 L332.3 329.6 L332.2 332.7 L332.0 335.9 L331.9 339.0 L331.7 342.1 L331.6 345.2 L331.5 348.3 L331.3 351.4 L331.2 354.5 L331.1 357.6 L331.0 360.7 L330.9 363.8 L330.8 366.8 L330.8 369.9 L330.7 372.9 L330.6 376.0 L330.6 379.0 L330.5 382.0 L330.4 385.0 L330.4 388.1 L330.3 391.1 L330.3 394.1 M337.1 305.1 L336.9 308.2 L336.7 311.4 L336.5 314.5 L336.3 317.7 L336.2 320.8 L336.0 324.0 L335.8 327.2 L335.6 330.3 L335.5 333.4 L335.3 336.6 L335.2 339.7 L335.1 342.8 L334.9 346.0 L334.8 349.1 L334.7 352.2 L334.6 355.3 L334.5 358.4 L334.5 361.5 L334.4 364.6 L334.3 367.6 L334.3 370.7 L334.3 373.8 L334.2 376.8 L334.2 379.9 L334.2 382.9 L334.2 386.0 L334.1 389.0 L334.1 392.1 L334.1 395.1 M340.1 305.9 L339.9 309.0 L339.7 312.2 L339.5 315.4 L339.3 318.5 L339.1 321.7 L338.9 324.9 L338.7 328.0 L338.6 331.2 L338.4 334.3 L338.2 337.5 L338.1 340.6 L338.0 343.8 L337.9 346.9 L337.8 350.1 L337.7 353.2 L337.6 356.3 L337.6 359.4 L337.5 362.5 L337.5 365.6 L337.4 368.7 L337.4 371.8 L337.4 374.9 L337.4 378.0 L337.4 381.1 L337.4 384.1 L337.5 387.2 L337.5 390.3 L337.5 393.3 L337.5 396.4 M342.5 306.8 L342.3 310.0 L342.1 313.2 L341.9 316.4 L341.7 319.6 L341.5 322.7 L341.3 325.9 L341.2 329.1 L341.0 332.2 L340.8 335.4 L340.7 338.6 L340.6 341.7 L340.5 344.9 L340.4 348.1 L340.3 351.2 L340.2 354.3 L340.1 357.5 L340.1 360.6 L340.1 363.7 L340.0 366.9 L340.0 370.0 L340.0 373.1 L340.1 376.2 L340.1 379.3 L340.1 382.4 L340.2 385.5 L340.2 388.6 L340.3 391.7 L340.3 394.8 L340.4 397.9 M344.4 307.9 L344.2 311.1 L344.0 314.3 L343.8 317.5 L343.6 320.7 L343.4 323.9 L343.2 327.1 L343.1 330.3 L342.9 333.4 L342.7 336.6 L342.6 339.8 L342.5 343.0 L342.4 346.2 L342.3 349.3 L342.2 352.5 L342.1 355.7 L342.1 358.8 L342.1 362.0 L342.0 365.1 L342.0 368.3 L342.1 371.4 L342.1 374.6 L342.1 377.7 L342.2 380.9 L342.2 384.0 L342.3 387.1 L342.4 390.3 L342.4 393.4 L342.5 396.5 L342.6 399.7 M345.8 309.1 L345.5 312.3 L345.3 315.5 L345.1 318.7 L344.9 321.9 L344.7 325.1 L344.5 328.3 L344.4 331.5 L344.2 334.7 L344.0 337.9 L343.9 341.1 L343.8 344.3 L343.7 347.5 L343.6 350.7 L343.5 353.9 L343.5 357.1 L343.4 360.3 L343.4 363.5 L343.4 366.6 L343.4 369.8 L343.4 373.0 L343.5 376.2 L343.5 379.4 L343.6 382.5 L343.7 385.7 L343.7 388.9 L343.8 392.0 L343.9 395.2 L344.0 398.4 L344.1 401.5 M346.4 310.4 L346.2 313.6 L346.0 316.8 L345.8 320.0 L345.6 323.2 L345.4 326.5 L345.2 329.7 L345.0 332.9 L344.9 336.1 L344.7 339.3 L344.6 342.5 L344.5 345.7 L344.4 349.0 L344.3 352.2 L344.2 355.4 L344.1 358.6 L344.1 361.8 L344.1 365.0 L344.1 368.2 L344.1 371.4 L344.1 374.6 L344.2 377.9 L344.2 381.1 L344.3 384.3 L344.4 387.5 L344.5 390.7 L344.6 393.9 L344.7 397.1 L344.8 400.3 L344.9 403.5 M346.2 313.2 L346.1 314.2 L345.6 315.2 L344.7 316.2 L343.4 317.2 L341.8 318.1 L339.9 318.9 L337.7 319.7 L335.3 320.4 L332.6 321.0 L329.9 321.5 L327.0 321.9 L324.1 322.1 L321.2 322.2 L318.3 322.2 L315.5 322.0 L312.9 321.7 L310.6 321.3 L308.4 320.8 L306.5 320.2 L305.0 319.4 L303.8 318.6 L302.9 317.7 L302.5 316.8 L302.4 315.8 L302.7 314.8 L303.4 313.8 L304.5 312.8 L306.0 311.9 L307.7 311.0 L309.8 310.1 L312.1 309.4 L314.6 308.7 L317.3 308.2 L320.2 307.8 L323.1 307.5 L326.0 307.3 L328.9 307.3 L331.7 307.3 L334.4 307.6 L336.9 307.9 L339.2 308.4 L341.2 309.0 L342.9 309.7 L344.3 310.5 L345.3 311.3 L345.9 312.2 L346.2 313.2 M345.9 317.9 L345.8 318.9 L345.3 320.0 L344.4 321.0 L343.1 321.9 L341.5 322.9 L339.6 323.8 L337.4 324.6 L335.0 325.3 L332.4 325.9 L329.6 326.4 L326.8 326.7 L323.8 327.0 L320.9 327.1 L318.1 327.0 L315.3 326.9 L312.7 326.6 L310.3 326.1 L308.2 325.6 L306.3 324.9 L304.8 324.2 L303.6 323.3 L302.7 322.4 L302.3 321.5 L302.2 320.5 L302.5 319.5 L303.2 318.5 L304.3 317.5 L305.7 316.5 L307.5 315.6 L309.5 314.8 L311.9 314.0 L314.4 313.4 L317.1 312.8 L319.9 312.4 L322.8 312.1 L325.7 311.9 L328.6 311.9 L331.4 312.0 L334.1 312.2 L336.6 312.6 L338.9 313.1 L340.9 313.7 L342.6 314.4 L344.0 315.2 L345.0 316.0 L345.6 317.0 L345.9 317.9 M345.6 322.7 L345.5 323.7 L345.0 324.7 L344.1 325.7 L342.8 326.7 L341.2 327.7 L339.3 328.6 L337.2 329.4 L334.7 330.1 L332.1 330.7 L329.4 331.2 L326.5 331.6 L323.6 331.8 L320.7 331.9 L317.8 331.9 L315.1 331.7 L312.5 331.4 L310.1 330.9 L308.0 330.4 L306.1 329.7 L304.6 329.0 L303.4 328.1 L302.5 327.2 L302.1 326.2 L302.0 325.2 L302.3 324.2 L303.0 323.1 L304.1 322.1 L305.5 321.2 L307.3 320.2 L309.3 319.4 L311.6 318.6 L314.1 318.0 L316.8 317.4 L319.6 317.0 L322.5 316.7 L325.5 316.5 L328.3 316.5 L331.1 316.6 L333.8 316.8 L336.3 317.2 L338.6 317.7 L340.6 318.3 L342.3 319.0 L343.7 319.8 L344.7 320.7 L345.3 321.7 L345.6 322.7 M345.3 327.4 L345.2 328.4 L344.7 329.5 L343.8 330.5 L342.5 331.5 L341.0 332.5 L339.1 333.4 L336.9 334.2 L334.5 334.9 L331.9 335.5 L329.1 336.0 L326.3 336.4 L323.4 336.6 L320.5 336.7 L317.6 336.7 L314.9 336.5 L312.3 336.2 L309.9 335.8 L307.8 335.2 L305.9 334.5 L304.4 333.7 L303.2 332.9 L302.3 331.9 L301.9 330.9 L301.8 329.9 L302.1 328.9 L302.8 327.8 L303.9 326.8 L305.3 325.8 L307.0 324.9 L309.1 324.0 L311.4 323.3 L313.9 322.6 L316.6 322.0 L319.4 321.6 L322.3 321.3 L325.2 321.1 L328.1 321.1 L330.9 321.2 L333.5 321.4 L336.0 321.8 L338.3 322.3 L340.3 323.0 L342.0 323.7 L343.4 324.5 L344.4 325.4 L345.0 326.4 L345.3 327.4 M345.0 332.1 L344.9 333.2 L344.4 334.2 L343.5 335.3 L342.3 336.3 L340.7 337.3 L338.8 338.2 L336.6 339.0 L334.2 339.8 L331.6 340.4 L328.9 340.9 L326.0 341.3 L323.1 341.5 L320.2 341.6 L317.4 341.5 L314.6 341.4 L312.0 341.0 L309.7 340.6 L307.5 340.0 L305.7 339.3 L304.1 338.5 L302.9 337.6 L302.1 336.7 L301.6 335.7 L301.5 334.6 L301.9 333.6 L302.6 332.5 L303.6 331.5 L305.0 330.5 L306.8 329.5 L308.8 328.7 L311.1 327.9 L313.6 327.2 L316.3 326.6 L319.1 326.2 L322.0 325.9 L324.9 325.7 L327.8 325.7 L330.6 325.8 L333.3 326.1 L335.8 326.4 L338.0 327.0 L340.0 327.6 L341.7 328.3 L343.1 329.2 L344.1 330.1 L344.8 331.1 L345.0 332.1 M344.8 336.8 L344.7 337.9 L344.2 339.0 L343.3 340.1 L342.1 341.1 L340.5 342.1 L338.6 343.0 L336.4 343.9 L334.0 344.6 L331.4 345.2 L328.6 345.7 L325.8 346.1 L322.9 346.4 L320.0 346.5 L317.1 346.4 L314.4 346.2 L311.8 345.9 L309.4 345.4 L307.3 344.8 L305.4 344.1 L303.9 343.3 L302.6 342.4 L301.8 341.4 L301.3 340.4 L301.3 339.3 L301.6 338.3 L302.3 337.2 L303.3 336.1 L304.8 335.1 L306.5 334.2 L308.6 333.3 L310.8 332.5 L313.4 331.8 L316.1 331.2 L318.9 330.8 L321.8 330.5 L324.7 330.3 L327.5 330.3 L330.3 330.4 L333.0 330.7 L335.5 331.1 L337.8 331.6 L339.8 332.2 L341.5 333.0 L342.9 333.9 L343.9 334.8 L344.5 335.8 L344.8 336.8 M344.6 341.6 L344.5 342.7 L344.0 343.8 L343.1 344.8 L341.9 345.9 L340.3 346.9 L338.4 347.8 L336.2 348.7 L333.8 349.5 L331.2 350.1 L328.4 350.6 L325.5 351.0 L322.6 351.2 L319.7 351.3 L316.9 351.3 L314.1 351.1 L311.5 350.7 L309.1 350.3 L307.0 349.7 L305.1 348.9 L303.6 348.1 L302.4 347.2 L301.5 346.2 L301.0 345.1 L301.0 344.1 L301.3 343.0 L302.0 341.9 L303.0 340.8 L304.5 339.8 L306.2 338.8 L308.3 337.9 L310.6 337.1 L313.1 336.4 L315.8 335.8 L318.6 335.4 L321.5 335.0 L324.4 334.9 L327.3 334.9 L330.1 335.0 L332.8 335.2 L335.3 335.7 L337.6 336.2 L339.6 336.9 L341.3 337.6 L342.7 338.5 L343.7 339.5 L344.3 340.5 L344.6 341.6 M344.4 346.3 L344.3 347.4 L343.8 348.5 L342.9 349.6 L341.7 350.7 L340.1 351.7 L338.2 352.7 L336.0 353.6 L333.6 354.3 L330.9 355.0 L328.2 355.5 L325.3 355.9 L322.4 356.1 L319.5 356.2 L316.6 356.2 L313.8 356.0 L311.2 355.6 L308.8 355.1 L306.7 354.5 L304.8 353.7 L303.2 352.9 L302.0 352.0 L301.2 351.0 L300.7 349.9 L300.6 348.8 L300.9 347.7 L301.6 346.5 L302.7 345.4 L304.1 344.4 L305.9 343.4 L307.9 342.5 L310.3 341.7 L312.8 341.0 L315.5 340.4 L318.3 339.9 L321.2 339.6 L324.1 339.4 L327.0 339.4 L329.9 339.5 L332.6 339.8 L335.1 340.2 L337.3 340.8 L339.4 341.5 L341.1 342.3 L342.5 343.2 L343.5 344.1 L344.2 345.2 L344.4 346.3 M344.3 351.0 L344.2 352.1 L343.7 353.3 L342.8 354.4 L341.5 355.5 L339.9 356.6 L338.0 357.5 L335.8 358.4 L333.4 359.2 L330.7 359.9 L328.0 360.4 L325.1 360.8 L322.1 361.0 L319.2 361.1 L316.3 361.1 L313.5 360.8 L310.9 360.5 L308.5 360.0 L306.3 359.3 L304.5 358.6 L302.9 357.7 L301.7 356.8 L300.8 355.7 L300.3 354.6 L300.3 353.5 L300.6 352.4 L301.3 351.2 L302.4 350.1 L303.8 349.0 L305.5 348.0 L307.6 347.1 L309.9 346.2 L312.5 345.5 L315.2 344.9 L318.0 344.5 L321.0 344.1 L323.9 344.0 L326.8 344.0 L329.6 344.1 L332.3 344.4 L334.9 344.8 L337.2 345.4 L339.2 346.1 L340.9 346.9 L342.3 347.8 L343.4 348.8 L344.0 349.9 L344.3 351.0 M344.2 355.7 L344.1 356.9 L343.6 358.0 L342.7 359.2 L341.4 360.3 L339.8 361.4 L337.9 362.4 L335.7 363.3 L333.2 364.1 L330.6 364.8 L327.8 365.3 L324.8 365.7 L321.9 365.9 L318.9 366.0 L316.0 366.0 L313.2 365.7 L310.6 365.4 L308.2 364.9 L306.0 364.2 L304.1 363.4 L302.5 362.5 L301.3 361.6 L300.4 360.5 L299.9 359.4 L299.9 358.2 L300.2 357.1 L300.9 355.9 L302.0 354.7 L303.4 353.6 L305.2 352.6 L307.2 351.7 L309.6 350.8 L312.1 350.1 L314.9 349.5 L317.7 349.0 L320.7 348.7 L323.6 348.5 L326.6 348.5 L329.4 348.6 L332.2 348.9 L334.7 349.4 L337.0 350.0 L339.1 350.7 L340.8 351.5 L342.2 352.5 L343.3 353.5 L343.9 354.6 L344.2 355.7 M344.1 360.4 L344.0 361.6 L343.5 362.8 L342.6 364.0 L341.3 365.1 L339.7 366.2 L337.8 367.3 L335.5 368.2 L333.1 369.0 L330.4 369.7 L327.6 370.2 L324.6 370.6 L321.6 370.9 L318.7 371.0 L315.7 370.9 L312.9 370.7 L310.3 370.3 L307.8 369.7 L305.6 369.1 L303.7 368.3 L302.1 367.4 L300.8 366.4 L300.0 365.3 L299.5 364.1 L299.4 363.0 L299.7 361.8 L300.4 360.6 L301.5 359.4 L303.0 358.3 L304.8 357.2 L306.9 356.2 L309.2 355.4 L311.8 354.6 L314.6 354.0 L317.4 353.5 L320.4 353.2 L323.4 353.0 L326.4 353.0 L329.2 353.2 L332.0 353.5 L334.5 353.9 L336.9 354.5 L338.9 355.3 L340.7 356.1 L342.1 357.1 L343.2 358.1 L343.9 359.3 L344.1 360.4 M344.1 365.1 L344.0 366.3 L343.5 367.6 L342.6 368.8 L341.3 370.0 L339.6 371.1 L337.7 372.1 L335.4 373.1 L332.9 373.9 L330.2 374.6 L327.4 375.2 L324.4 375.6 L321.4 375.8 L318.4 375.9 L315.4 375.8 L312.6 375.6 L309.9 375.2 L307.4 374.7 L305.2 374.0 L303.2 373.1 L301.6 372.2 L300.4 371.2 L299.5 370.1 L299.0 368.9 L298.9 367.7 L299.3 366.4 L300.0 365.2 L301.1 364.0 L302.5 362.9 L304.3 361.8 L306.4 360.8 L308.8 359.9 L311.4 359.1 L314.2 358.5 L317.1 358.0 L320.1 357.7 L323.2 357.5 L326.1 357.5 L329.1 357.7 L331.8 358.0 L334.4 358.5 L336.8 359.1 L338.9 359.8 L340.6 360.7 L342.1 361.7 L343.1 362.8 L343.8 363.9 L344.1 365.1 M344.1 369.8 L344.0 371.1 L343.5 372.4 L342.6 373.6 L341.3 374.8 L339.6 376.0 L337.6 377.0 L335.4 378.0 L332.8 378.8 L330.1 379.6 L327.2 380.1 L324.2 380.5 L321.2 380.8 L318.1 380.9 L315.1 380.8 L312.2 380.6 L309.5 380.1 L307.0 379.6 L304.7 378.9 L302.8 378.0 L301.2 377.1 L299.9 376.0 L299.0 374.9 L298.5 373.6 L298.4 372.4 L298.7 371.1 L299.5 369.9 L300.6 368.7 L302.1 367.5 L303.9 366.4 L306.0 365.3 L308.4 364.4 L311.1 363.7 L313.9 363.0 L316.8 362.5 L319.9 362.2 L322.9 362.0 L325.9 362.0 L328.9 362.2 L331.7 362.5 L334.3 363.0 L336.7 363.6 L338.8 364.4 L340.6 365.3 L342.1 366.3 L343.1 367.4 L343.8 368.6 L344.1 369.8 M344.2 374.5 L344.1 375.8 L343.5 377.1 L342.6 378.4 L341.3 379.6 L339.6 380.8 L337.6 381.9 L335.3 382.9 L332.7 383.8 L330.0 384.5 L327.0 385.1 L324.0 385.5 L320.9 385.8 L317.8 385.9 L314.8 385.8 L311.9 385.5 L309.1 385.1 L306.6 384.5 L304.3 383.8 L302.3 382.9 L300.6 381.9 L299.4 380.8 L298.5 379.6 L298.0 378.4 L297.9 377.1 L298.2 375.8 L298.9 374.5 L300.0 373.3 L301.5 372.1 L303.4 370.9 L305.6 369.9 L308.0 369.0 L310.7 368.1 L313.5 367.5 L316.5 367.0 L319.6 366.6 L322.7 366.5 L325.7 366.5 L328.7 366.6 L331.6 367.0 L334.2 367.5 L336.6 368.1 L338.8 368.9 L340.6 369.9 L342.1 370.9 L343.2 372.1 L343.9 373.3 L344.2 374.5 M344.3 379.2 L344.1 380.6 L343.6 381.9 L342.7 383.2 L341.3 384.5 L339.6 385.7 L337.6 386.8 L335.3 387.8 L332.7 388.7 L329.8 389.5 L326.9 390.1 L323.8 390.5 L320.7 390.8 L317.5 390.9 L314.5 390.8 L311.5 390.5 L308.7 390.1 L306.1 389.5 L303.8 388.7 L301.8 387.8 L300.1 386.8 L298.8 385.7 L297.9 384.5 L297.4 383.2 L297.3 381.9 L297.6 380.5 L298.3 379.2 L299.5 377.9 L301.0 376.7 L302.9 375.5 L305.1 374.4 L307.5 373.5 L310.3 372.6 L313.1 372.0 L316.2 371.4 L319.3 371.1 L322.4 370.9 L325.5 370.9 L328.6 371.1 L331.4 371.4 L334.1 372.0 L336.6 372.7 L338.8 373.5 L340.6 374.4 L342.1 375.5 L343.2 376.7 L344.0 377.9 L344.3 379.2 M344.4 383.9 L344.2 385.3 L343.7 386.7 L342.7 388.0 L341.4 389.3 L339.7 390.6 L337.6 391.7 L335.2 392.8 L332.6 393.7 L329.7 394.5 L326.7 395.1 L323.6 395.5 L320.4 395.8 L317.2 395.9 L314.1 395.8 L311.1 395.5 L308.3 395.1 L305.7 394.4 L303.3 393.6 L301.3 392.7 L299.5 391.7 L298.2 390.5 L297.3 389.3 L296.8 387.9 L296.7 386.6 L297.0 385.2 L297.8 383.8 L298.9 382.5 L300.5 381.2 L302.3 380.0 L304.6 378.9 L307.1 377.9 L309.8 377.1 L312.8 376.4 L315.8 375.9 L319.0 375.5 L322.2 375.3 L325.3 375.3 L328.4 375.5 L331.3 375.9 L334.1 376.4 L336.6 377.1 L338.8 378.0 L340.7 379.0 L342.2 380.1 L343.3 381.3 L344.0 382.6 L344.4 383.9 M344.5 388.6 L344.4 390.0 L343.8 391.5 L342.8 392.9 L341.5 394.2 L339.7 395.5 L337.6 396.7 L335.2 397.7 L332.5 398.7 L329.6 399.5 L326.6 400.1 L323.4 400.6 L320.2 400.8 L317.0 400.9 L313.8 400.8 L310.7 400.5 L307.8 400.1 L305.2 399.4 L302.8 398.6 L300.7 397.6 L299.0 396.6 L297.6 395.4 L296.7 394.1 L296.1 392.7 L296.0 391.3 L296.4 389.9 L297.1 388.5 L298.3 387.1 L299.9 385.8 L301.8 384.6 L304.1 383.4 L306.6 382.4 L309.4 381.6 L312.4 380.8 L315.5 380.3 L318.7 379.9 L322.0 379.8 L325.2 379.8 L328.3 380.0 L331.3 380.3 L334.0 380.9 L336.6 381.6 L338.8 382.5 L340.7 383.5 L342.3 384.7 L343.4 385.9 L344.2 387.3 L344.5 388.6 M344.6 393.3 L344.5 394.8 L343.9 396.2 L343.0 397.7 L341.6 399.1 L339.8 400.4 L337.7 401.6 L335.2 402.7 L332.5 403.7 L329.6 404.5 L326.4 405.1 L323.2 405.6 L319.9 405.9 L316.7 406.0 L313.4 405.9 L310.3 405.6 L307.4 405.1 L304.7 404.4 L302.3 403.6 L300.1 402.6 L298.4 401.4 L297.0 400.2 L296.0 398.9 L295.5 397.5 L295.4 396.0 L295.7 394.6 L296.5 393.1 L297.7 391.7 L299.3 390.4 L301.2 389.1 L303.5 387.9 L306.1 386.9 L309.0 386.0 L312.0 385.3 L315.2 384.7 L318.4 384.3 L321.7 384.2 L325.0 384.2 L328.1 384.4 L331.2 384.8 L334.0 385.4 L336.6 386.1 L338.9 387.0 L340.8 388.1 L342.4 389.3 L343.5 390.5 L344.3 391.9 L344.6 393.3 M344.8 398.0 L344.7 399.5 L344.1 401.0 L343.1 402.5 L341.7 403.9 L339.9 405.3 L337.7 406.5 L335.2 407.7 L332.5 408.7 L329.5 409.5 L326.3 410.2 L323.0 410.7 L319.7 410.9 L316.4 411.0 L313.1 410.9 L309.9 410.6 L306.9 410.1 L304.2 409.4 L301.7 408.5 L299.6 407.5 L297.8 406.3 L296.4 405.1 L295.4 403.7 L294.8 402.3 L294.7 400.8 L295.1 399.3 L295.9 397.8 L297.1 396.3 L298.7 394.9 L300.7 393.6 L303.0 392.4 L305.6 391.4 L308.5 390.4 L311.6 389.7 L314.8 389.1 L318.1 388.7 L321.5 388.5 L324.8 388.6 L328.0 388.8 L331.1 389.2 L334.0 389.8 L336.6 390.6 L338.9 391.5 L340.9 392.6 L342.5 393.8 L343.7 395.2 L344.5 396.6 L344.8 398.0 M344.9 402.7 L344.8 404.3 L344.2 405.8 L343.2 407.3 L341.8 408.8 L340.0 410.2 L337.8 411.5 L335.2 412.7 L332.4 413.7 L329.4 414.5 L326.2 415.2 L322.8 415.7 L319.5 416.0 L316.1 416.1 L312.7 416.0 L309.5 415.6 L306.5 415.1 L303.7 414.4 L301.2 413.5 L299.0 412.4 L297.2 411.3 L295.7 409.9 L294.7 408.5 L294.2 407.0 L294.1 405.5 L294.4 404.0 L295.2 402.4 L296.4 400.9 L298.1 399.5 L300.1 398.1 L302.5 396.9 L305.1 395.8 L308.1 394.9 L311.2 394.1 L314.5 393.5 L317.8 393.1 L321.2 392.9 L324.6 393.0 L327.9 393.2 L331.0 393.6 L333.9 394.2 L336.6 395.0 L339.0 396.0 L341.0 397.1 L342.6 398.4 L343.8 399.8 L344.6 401.2 L344.9 402.7" stroke="#98d888" stroke-width="0.8"/>
<path d="M343.3 311.0 L343.1 314.2 L342.9 317.4 L342.7 320.7 L342.5 323.9 L342.3 327.1 L342.1 330.3 L341.9 333.6 L341.7 336.8 L341.6 340.0 L341.5 343.2 L341.3 346.5 L341.2 349.7 L341.1 352.9 L341.1 356.1 L341.0 359.4 L341.0 362.6 L341.0 365.8 L341.0 369.0 L341.0 372.3 L341.0 375.5 L341.1 378.7 L341.1 381.9 L341.2 385.2 L341.3 388.4 L341.4 391.6 L341.5 394.8 L341.6 398.1 L341.7 401.3 L341.8 404.5 M305.7 311.0 L305.6 314.2 L305.4 317.4 L305.3 320.7 L305.2 323.9 L305.0 327.1 L304.8 330.3 L304.7 333.6 L304.5 336.8 L304.3 340.0 L304.1 343.2 L303.9 346.5 L303.6 349.7 L303.4 352.9 L303.1 356.1 L302.8 359.4 L302.5 362.6 L302.2 365.8 L301.8 369.0 L301.5 372.3 L301.1 375.5 L300.7 378.7 L300.3 381.9 L299.9 385.2 L299.4 388.4 L299.0 391.6 L298.6 394.8 L298.1 398.1 L297.7 401.3 L297.2 404.5 M332.0 317.8 L331.8 321.0 L331.7 324.2 L331.5 327.5 L331.3 330.7 L331.1 333.9 L330.9 337.1 L330.8 340.3 L330.6 343.6 L330.4 346.8 L330.3 350.0 L330.1 353.3 L330.0 356.5 L329.8 359.8 L329.7 363.0 L329.5 366.3 L329.4 369.5 L329.3 372.8 L329.2 376.1 L329.1 379.4 L329.0 382.7 L328.9 386.0 L328.8 389.3 L328.7 392.6 L328.6 395.9 L328.5 399.2 L328.5 402.5 L328.4 405.8 L328.3 409.1 L328.2 412.4 M318.8 318.0 L318.6 321.2 L318.5 324.4 L318.3 327.6 L318.2 330.9 L318.0 334.1 L317.8 337.3 L317.6 340.5 L317.5 343.7 L317.3 347.0 L317.1 350.2 L316.9 353.5 L316.7 356.7 L316.5 360.0 L316.3 363.2 L316.1 366.5 L315.9 369.7 L315.7 373.0 L315.5 376.3 L315.3 379.6 L315.1 382.9 L314.8 386.2 L314.6 389.5 L314.4 392.8 L314.1 396.1 L313.9 399.4 L313.6 402.7 L313.4 406.0 L313.1 409.3 L312.9 412.6" stroke="#30b8d0" stroke-width="1.3"/>
<path d="M345.7 311.0 L345.5 314.2 L345.3 317.4 L345.1 320.7 L344.9 323.9 L344.7 327.1 L344.5 330.3 L344.3 333.6 L344.1 336.8 L344.0 340.0 L343.9 343.2 L343.7 346.5 L343.6 349.7 L343.5 352.9 L343.5 356.1 L343.4 359.4 L343.4 362.6 L343.4 365.8 L343.4 369.0 L343.4 372.3 L343.4 375.5 L343.5 378.7 L343.5 381.9 L343.6 385.2 L343.7 388.4 L343.8 391.6 L343.9 394.8 L344.0 398.1 L344.1 401.3 L344.2 404.5 M303.3 311.0 L303.2 314.2 L303.0 317.4 L302.9 320.7 L302.8 323.9 L302.6 327.1 L302.4 330.3 L302.3 333.6 L302.1 336.8 L301.9 340.0 L301.7 343.2 L301.5 346.5 L301.2 349.7 L301.0 352.9 L300.7 356.1 L300.4 359.4 L300.1 362.6 L299.8 365.8 L299.4 369.0 L299.1 372.3 L298.7 375.5 L298.3 378.7 L297.9 381.9 L297.5 385.2 L297.0 388.4 L296.6 391.6 L296.2 394.8 L295.7 398.1 L295.3 401.3 L294.8 404.5" stroke="#30f030" stroke-width="2.2"/>
</g>
<g fill="none" stroke-width="1.4" stroke-linecap="round">
<path d="M485.0 98.0 L482.8 100.5 L480.6 102.9 L478.4 105.4 L476.2 107.8 L474.0 110.2 L471.8 112.6 L469.5 114.9 L467.1 117.2 L464.8 119.5 L462.4 121.7 L459.9 123.8 L457.4 125.9 L454.8 127.9" stroke="#50e0b0"/>
<path d="M457.4 125.9 L454.8 127.9 L452.2 129.9 L449.6 131.9 L446.9 133.8 L444.3 135.8 L441.7 137.8 L439.1 139.8 L436.5 141.8 L434.1 143.9 L431.7 146.2 L429.3 148.4 L427.0 150.8 L424.7 153.1 L422.5 155.5 L420.3 157.9 L418.0 160.3 L415.8 162.7 L413.5 165.0 L411.1 167.3 L408.8 169.6 L406.4 171.9" stroke="#e8e8d0"/>
<path d="M408.8 169.6 L406.4 171.9 L404.1 174.2 L401.7 176.5 L399.4 178.8 L397.1 181.1 L394.9 183.5 L392.8 186.0 L390.7 188.5 L388.7 191.1 L386.7 193.7 L384.8 196.4 L382.9 199.0 L381.0 201.7 L379.2 204.4 L377.3 207.2 L375.5 209.9 L373.7 212.6 L371.9 215.4 L370.2 218.2 L368.6 221.0 L367.0 223.9 L365.6 226.8 L364.2 229.8 L362.9 232.8 L361.7 235.8 L360.5 238.9 L359.4 242.0 L358.4 245.1 L357.4 248.2 L356.4 251.4 L355.5 254.5 L354.6 257.7 L353.8 260.9 L353.0 264.0 L352.2 267.2 L351.5 270.4 L350.8 273.6 L350.2 276.8 L349.6 280.1 L349.1 283.3 L348.6 286.5 L348.1 289.8 L347.7 293.0 L347.2 296.2 L346.8 299.5 L346.4 302.7 L346.0 306.0" stroke="#d8e040"/>
<path d="M185.3 160.4 L187.3 161.7 L189.4 163.0 L191.4 164.2 L193.4 165.5 L195.4 166.8 L197.5 168.1 L199.5 169.4 L201.5 170.7 L203.5 172.0 L205.5 173.3 L207.6 174.6 L209.6 176.0 L211.6 177.3 L213.6 178.6 L215.6 180.0 L217.5 181.3 L219.5 182.7 L221.5 184.1 L223.5 185.5 L225.4 186.9 L227.3 188.3 L229.3 189.7 L231.2 191.2 L233.0 192.7 L234.9 194.2 L236.8 195.7 L238.6 197.3 L240.4 198.9 L242.2 200.5 L244.0 202.1 L245.7 203.8 L247.4 205.5 L249.1 207.2 L250.7 209.0 L252.3 210.8 L253.9 212.6 L255.5 214.4 L257.0 216.3 L258.4 218.2 L259.8 220.1 L261.2 222.1 L262.6 224.1 L263.9 226.1 L265.1 228.1 L266.4 230.2 L267.6 232.2 L268.8 234.3 L270.1 236.4 L271.3 238.5 L272.5 240.6 L273.7 242.7 L274.9 244.7 L276.1 246.8 L277.4 248.9 L278.6 250.9 L279.8 253.0 L281.1 255.1 L282.3 257.2 L283.5 259.2 L284.7 261.3 L285.9 263.4 L287.1 265.5 L288.2 267.6 L289.3 269.7 L290.4 271.9 L291.5 274.0 L292.5 276.2 L293.5 278.4 L294.4 280.6 L295.3 282.8 L296.1 285.0 L297.0 287.3 L297.8 289.5 L298.5 291.8 L299.3 294.1 L300.0 296.4 L300.8 298.7 L301.5 301.0 L302.2 303.3" stroke="#40d890" stroke-width="1.6"/>
<path d="M118.0 222.5 L120.7 222.4 L123.4 222.4 L126.0 222.3 L128.7 222.2 L131.4 222.2 L134.1 222.1 L136.8 222.1 L139.5 222.1 L142.1 222.0 L144.8 222.0 L147.5 222.0 L150.2 222.0 L152.9 222.0 L155.5 222.0 L158.2 222.1 L160.9 222.1 L163.6 222.2 L166.3 222.2 L169.0 222.3 L171.6 222.3 L174.3 222.4 L177.0 222.5 L179.7 222.5 L182.4 222.6 L185.1 222.7 L187.8 222.9 L190.5 223.0 L193.1 223.2 L195.8 223.5 L198.5 223.8 L201.1 224.1 L203.8 224.6 L206.4 225.1 L209.0 225.6 L211.6 226.2 L214.2 226.9 L216.8 227.6 L219.4 228.3 L222.0 229.0" stroke="#38c8d8" stroke-width="1.6"/>
</g>
<g fill="none" stroke="#1c34f4" stroke-linejoin="round">
<path d="M306.7 211.0 L306.3 208.6 L305.8 206.2 L305.3 203.8 L304.8 201.4 L304.2 199.0 L303.7 196.6 L303.1 194.2 L302.4 191.8 L301.8 189.4 L301.1 187.1 L300.4 184.7 L299.6 182.4 L298.8 180.0 L298.0 177.7 L297.1 175.4 L296.1 173.2 L295.2 170.9 L294.1 168.7 L293.1 166.5 L292.0 164.3 L290.9 162.1 L289.8 159.9 L288.7 157.7 L287.6 155.5 L286.5 153.3 L285.3 151.1 L284.2 148.9 L283.1 146.7 L282.1 144.4 L281.0 142.2 L279.9 140.0 L279.9 139.9 L278.6 137.4 L277.2 135.1 L275.8 133.1 L274.2 131.3 L272.6 129.8 L270.8 128.6 L269.0 127.6 L267.0 126.9 L265.0 126.5 L262.9 126.3 L260.6 126.3 L258.3 126.7 L255.9 127.3 L253.4 128.1 L250.8 129.2 L109.5 195.2 L107.7 196.2 L106.0 197.1 L104.6 198.2 L103.4 199.3 L102.4 200.5 L101.6 201.7 L101.1 203.0 L100.7 204.3 L100.5 205.7 L100.6 207.1 L100.8 208.7 L101.3 210.2 L102.0 211.8 L102.9 213.5 L103.9 215.3 L104.8 216.5 L107.7 220.5 L110.7 224.2 L113.9 227.6 L117.2 230.6 L120.7 233.3 L124.4 235.7 L128.1 237.8 L132.1 239.5 L136.1 240.8 L140.3 241.9 L144.7 242.6 L149.2 243.0 L153.8 243.0 L158.6 242.7 L163.5 242.1 L163.5 242.6 L165.7 242.2 L167.8 241.9 L170.0 241.5 L172.1 241.1 L174.2 240.8 L176.4 240.4 L178.5 240.1 L180.6 239.7 L182.8 239.3 L184.9 239.0 L187.1 238.6 L189.2 238.2 L191.3 237.9 L193.5 237.5 L195.6 237.1 L197.7 236.8 L199.9 236.4 L202.0 236.0 L204.2 235.5 L206.3 235.0 L208.4 234.5 L210.6 234.0 L212.7 233.5 L214.8 233.0 L217.0 232.5 L219.1 232.0 L221.3 231.5 L223.4 231.0 L225.5 230.5 L227.7 230.0 L229.8 229.5 L231.9 229.0 L234.1 228.5 L236.2 228.0 L238.4 227.5 L240.5 227.0 L242.6 226.5 L244.8 226.0 L246.9 225.5 L249.0 225.0 L251.2 224.4 L253.3 223.9 L255.5 223.4 L257.6 222.9 L259.7 222.4 L261.9 221.8 L264.0 221.3 L266.1 220.8 L268.3 220.3 L270.4 219.7 L272.6 219.2 L274.7 218.7 L276.8 218.1 L279.0 217.6 L281.1 217.1 L283.2 216.5 L285.4 216.0 L287.5 215.5 L289.7 214.9 L291.8 214.4 L293.9 213.8 L296.1 213.3 L298.2 212.8 L300.3 212.2 L302.5 211.7 L304.6 211.1 L306.8 210.6 L308.9 210.0 L311.0 209.5 L313.2 208.9 L315.3 208.4 L317.4 207.8 L319.6 207.2 L321.7 206.7 L323.9 206.1 L326.0 205.6 L328.1 205.0 L330.3 204.4 L332.4 203.9 L334.5 203.3 L336.7 202.7 L338.8 202.2 L341.0 201.6 L343.1 201.0 L345.2 200.4 L347.4 199.9 L349.5 199.3 L351.6 198.7 L353.8 198.1 L355.9 197.5 L358.1 197.0 L360.2 196.4 L362.3 195.8 L364.5 195.2 L366.6 194.6 L368.7 194.0 L370.9 193.4 L373.0 192.9 L375.2 192.3 L377.3 191.7 L379.4 191.1 L381.6 190.5 L383.7 189.9 L385.8 189.3 L388.0 188.7 L390.1 188.1 L392.3 187.5 L394.4 186.9 L396.5 186.3 L398.7 185.7 L400.8 185.0 L402.9 184.4 L405.1 183.8 L407.2 183.2 L409.4 182.6 L411.5 182.0 L413.6 181.4 L415.8 180.8 L417.9 180.1 L420.0 179.5 L422.2 178.9 L424.3 178.3 L426.5 177.6 L428.6 177.0 L430.7 176.4 L432.9 175.8 L435.0 175.1 L437.1 174.5 L439.3 173.9 L441.4 173.2 L443.6 172.6 L445.7 172.0 L447.8 171.3 L450.0 170.7 L452.1 170.0 L454.2 169.4 L456.4 168.8 L458.5 168.1 L460.7 167.5 L462.8 166.8 L464.9 166.2 L467.1 165.5 L469.2 164.9 L471.3 164.2 L473.5 163.6 L475.6 162.9 L477.8 162.3 L479.9 161.6 L482.0 160.9 L484.2 160.3 L486.3 159.6 L488.4 159.0 L490.6 158.3 L492.7 157.6 L494.9 157.0 L497.0 156.3 L499.1 155.6 L501.3 154.9 L503.4 154.3 L503.4 153.1 L507.0 151.8 L510.1 150.4 L512.8 148.9 L515.1 147.2 L516.9 145.5 L518.2 143.7 L519.2 141.8 L519.7 139.7 L519.7 137.6 L519.3 135.3 L518.5 133.0 L517.2 130.5 L515.4 128.0 L513.3 125.3 L510.7 122.5 L461.2 73.2 L458.5 70.7 L455.8 68.4 L453.0 66.3 L450.1 64.5 L447.2 63.0 L444.2 61.6 L441.1 60.5 L438.0 59.7 L434.8 59.0 L431.5 58.7 L428.2 58.5 L424.8 58.6 L421.4 58.9 L417.8 59.5 L414.3 60.3 L318.3 84.6 L315.3 85.5 L312.6 86.5 L310.1 87.7 L308.0 89.0 L306.0 90.5 L304.4 92.1 L303.0 93.9 L301.9 95.8 L301.0 97.9 L300.4 100.1 L300.0 102.5 L300.0 105.1 L300.1 107.8 L300.6 110.6 L301.3 113.7 L301.6 114.9 L302.9 117.4 L304.2 119.9 L305.4 122.4 L306.6 124.9 L307.8 127.4 L309.0 130.0 L310.2 132.5 L311.5 135.0 L312.8 137.5 L314.1 140.0 L315.5 142.4 L316.8 144.9 L318.2 147.4 L319.5 149.8 L320.7 152.3 L321.9 154.9 L323.1 157.4 L324.2 160.0 L325.3 162.6 L326.3 165.2 L327.3 167.9 L328.2 170.5 L329.0 173.2 L329.8 175.9 L330.5 178.6 L331.2 181.3 L331.9 184.0 L332.5 186.8 L333.0 189.5 L333.6 192.3 L334.1 195.0 L334.6 197.8 L335.1 200.6 L335.6 203.3" stroke-width="2.4"/>
<path d="M306.7 211.0 L307.2 213.5 L307.6 215.9 L308.0 218.3 L308.4 220.7 L308.8 223.2 L309.2 225.6 L309.6 228.0 L309.9 230.4 L310.3 232.9 L310.6 235.3 L310.9 237.8 L311.3 240.2 L311.6 242.6 L311.9 245.1 L312.3 247.5 L312.6 249.9 L313.0 252.4 L313.4 254.8 L313.8 257.2 L314.3 259.6 L314.7 262.1 L315.1 264.5 L315.5 266.9 L315.9 269.4 L316.2 271.8 L316.5 274.2 L316.8 276.7 L317.0 279.1 L317.2 281.6 L317.4 284.0 L317.6 286.5 L317.8 288.9 L318.1 291.4 L318.3 293.8 L318.6 296.3 L318.9 298.7 L319.3 301.1 L319.6 303.6 L320.0 306.0 L320.5 310.0 M335.6 203.3 L336.0 206.1 L336.5 208.9 L336.9 211.7 L337.3 214.4 L337.7 217.2 L338.0 220.0 L338.3 222.8 L338.6 225.6 L338.8 228.4 L339.0 231.2 L339.2 234.0 L339.3 236.8 L339.5 239.6 L339.6 242.4 L339.8 245.2 L339.9 248.0 L340.1 250.8 L340.2 253.6 L340.4 256.4 L340.6 259.2 L340.8 262.0 L340.9 264.8 L341.0 267.6 L341.1 270.4 L341.2 273.2 L341.3 276.0 L341.3 278.8 L341.4 281.6 L341.4 284.4 L341.5 287.2 L341.7 290.0 L341.8 292.8 L342.0 295.6 L342.1 298.4 L342.3 301.2 L342.5 304.0" stroke-width="2"/>
<path d="M346.9 304.2 L347.2 304.8 L347.3 305.5 L347.2 306.2 L347.0 307.0 L346.7 307.7 L346.1 308.5 L345.4 309.4 L344.6 310.2 L343.6 311.0 L342.4 311.9 L341.2 312.7 L339.8 313.5 L338.3 314.3 L336.7 315.1 L335.0 315.9 L333.2 316.6 L331.3 317.3 L329.5 317.9 L327.5 318.5 L325.6 319.0 L323.6 319.4 L321.7 319.8 L319.8 320.2 L317.9 320.4 L316.0 320.6 L314.3 320.8 L312.6 320.8 L310.9 320.8 L309.4 320.7 L308.0 320.6 L306.7 320.3 L305.6 320.0 L304.6 319.7 L303.7 319.2 L303.0 318.8 L302.4 318.2 L302.0 317.6 L301.8 317.0 L301.7 316.3" stroke-width="3.6"/>
<path d="M344.7 401.1 L344.9 402.1 L344.9 403.1 L344.7 404.1 L344.4 405.1 L343.9 406.1 L343.2 407.1 L342.3 408.0 L341.2 409.0 L340.0 409.9 L338.7 410.8 L337.2 411.6 L335.5 412.3 L333.8 413.1 L331.9 413.7 L330.0 414.3 L328.0 414.8 L325.9 415.2 L323.7 415.6 L321.6 415.9 L319.4 416.0 L317.2 416.1 L315.1 416.2 L313.0 416.1 L310.9 416.0 L308.9 415.7 L306.9 415.4 L305.1 415.0 L303.3 414.5 L301.7 414.0 L300.2 413.4 L298.9 412.7 L297.7 411.9 L296.6 411.1 L295.8 410.3 L295.1 409.4 L294.6 408.5 L294.2 407.5 L294.1 406.6 L294.1 405.6" stroke-width="2.6" stroke="#2040ff"/>
</g>
<g stroke="#2228b0" stroke-width="1.1"><line x1="596" y1="446" x2="597" y2="427"/><line x1="596" y1="446" x2="576" y2="454"/><line x1="596" y1="446" x2="610" y2="456"/></g>
<polygon points="590,442 596,439 602,442 602,449 596,452.5 590,449" fill="#0a14ff"/>
<g font-size="6" fill="#fff" font-family="Liberation Sans"><text x="592.5" y="426">Z</text><text x="571" y="458">X</text><text x="610" y="460">Y</text></g>
<text x="0.5" y="469.6" font-size="5.2" fill="#2a2a2a" font-family="Liberation Sans" transform="translate(0.5,0) scale(0.82,1) translate(-0.5,0)">Straus7 R2.4.6 [Licenced to MAFFEIS ENGINEERING SPA - (V1)]</text>
<text x="680.5" y="459.5" font-size="17" font-weight="bold" fill="#0b1a70" font-family="Liberation Sans" transform="translate(680.5,0) scale(1.35,1) translate(-680.5,0)">M</text>
<g stroke="#606878" stroke-width="0.6" fill="none"><path d="M665 448.6 H680 M666 453.3 H680 M675.8 448 V460 M678.6 448 V460 M665 447 V450"/></g>
<rect x="662.2" y="460" width="38" height="16" fill="#8a8a8a"/>
<rect x="681" y="455" width="19" height="6" fill="#8a8a8a"/>
<rect x="0" y="476" width="34" height="7" fill="#4a3f9f"/><rect x="34" y="476" width="34" height="7" fill="#c0202f"/><rect x="68" y="476" width="36" height="7" fill="#06acec"/><rect x="104" y="476" width="34" height="7" fill="#119e4f"/><rect x="138" y="476" width="36" height="7" fill="#f5d000"/><rect x="174" y="476" width="35" height="7" fill="#e5147e"/><rect x="209" y="476" width="35" height="7" fill="#f5d000"/><rect x="244" y="476" width="34" height="7" fill="#4a3f9f"/><rect x="278" y="476" width="35" height="7" fill="#c0202f"/><rect x="313" y="476" width="34" height="7" fill="#06acec"/><rect x="347" y="476" width="36" height="7" fill="#119e4f"/><rect x="383" y="476" width="34" height="7" fill="#f5d000"/><rect x="417" y="476" width="38" height="7" fill="#e5147e"/><rect x="455" y="476" width="34" height="7" fill="#f5d000"/><rect x="489" y="476" width="36" height="7" fill="#4a3f9f"/><rect x="525" y="476" width="34" height="7" fill="#c0202f"/><rect x="559" y="476" width="35" height="7" fill="#06acec"/><rect x="594" y="476" width="34" height="7" fill="#119e4f"/><rect x="628" y="476" width="36" height="7" fill="#f5d000"/><rect x="664" y="476" width="36" height="7" fill="#e5147e"/>
</svg>
</body></html>
